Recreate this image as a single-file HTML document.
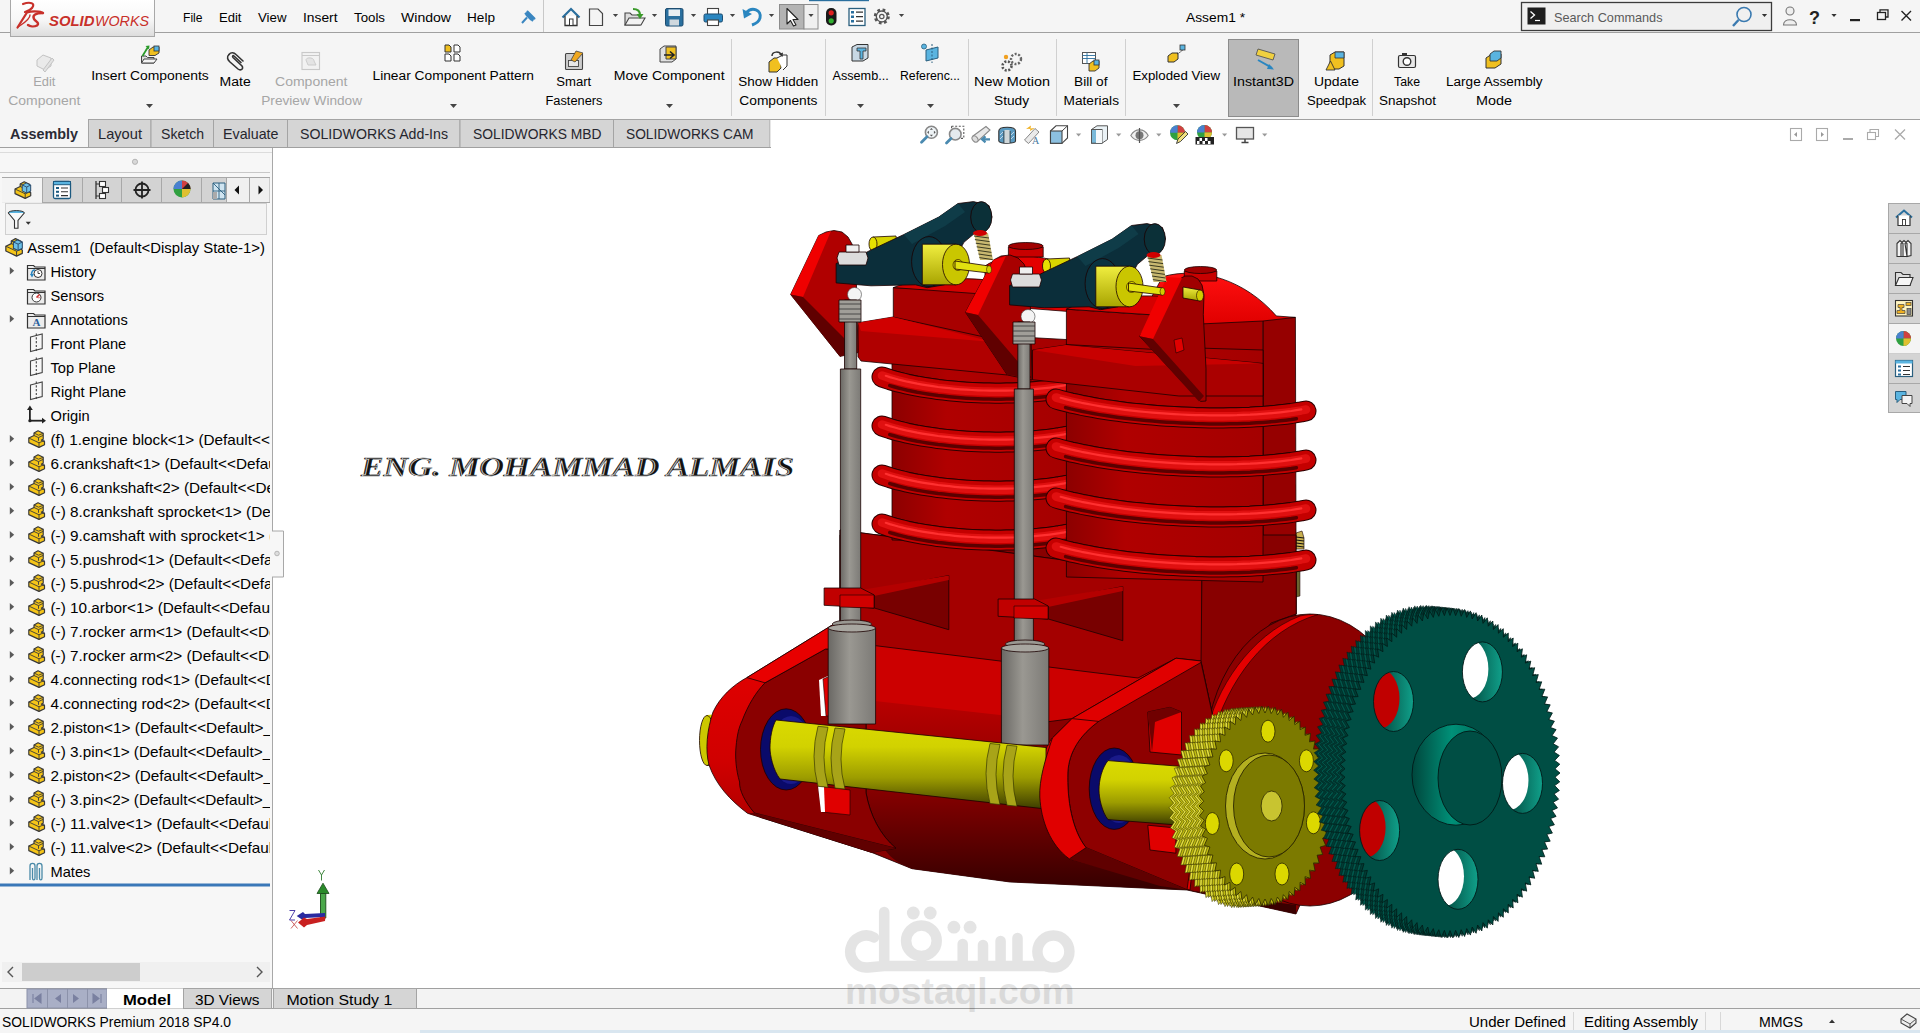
<!DOCTYPE html>
<html><head><meta charset="utf-8">
<style>
*{margin:0;padding:0}
html,body{width:1920px;height:1033px;overflow:hidden;background:#f5f5f5}
svg{display:block;font-family:"Liberation Sans",sans-serif}
</style></head><body>
<svg width="1920" height="1033" viewBox="0 0 1920 1033">
<rect x="0" y="0" width="1920" height="1033" fill="#f5f5f5" />
<rect x="0" y="0" width="1920" height="32" fill="#f5f5f5" />
<line x1="0" y1="32.5" x2="1920" y2="32.5" stroke="#a0a0a0" stroke-width="1" />
<defs><linearGradient id="lg" x1="0" y1="0" x2="0" y2="1"><stop offset="0" stop-color="#ffffff"/><stop offset="0.55" stop-color="#f7f7f7"/><stop offset="1" stop-color="#dcdcdc"/></linearGradient></defs>
<rect x="10.5" y="-1" width="144" height="37.5" fill="url(#lg)" stroke="#a8a8a8" stroke-width="1" />
<line x1="88" y1="119.5" x2="1920" y2="119.5" stroke="#a0a0a0" stroke-width="1" />
<text x="183" y="21.9" font-size="13" style="white-space:pre" textLength="19.5" lengthAdjust="spacingAndGlyphs" >File</text>
<text x="219" y="21.9" font-size="13" style="white-space:pre" textLength="22.5" lengthAdjust="spacingAndGlyphs" >Edit</text>
<text x="258" y="21.9" font-size="13" style="white-space:pre" textLength="28.5" lengthAdjust="spacingAndGlyphs" >View</text>
<text x="303" y="21.9" font-size="13" style="white-space:pre" textLength="34.5" lengthAdjust="spacingAndGlyphs" >Insert</text>
<text x="354" y="21.9" font-size="13" style="white-space:pre" textLength="31.0" lengthAdjust="spacingAndGlyphs" >Tools</text>
<text x="401" y="21.9" font-size="13" style="white-space:pre" textLength="50.0" lengthAdjust="spacingAndGlyphs" >Window</text>
<text x="467" y="21.9" font-size="13" style="white-space:pre" textLength="28.0" lengthAdjust="spacingAndGlyphs" >Help</text>
<text x="1186" y="21.9" font-size="13" style="white-space:pre" textLength="59.0" lengthAdjust="spacingAndGlyphs" >Assem1 *</text>
<line x1="543.5" y1="0" x2="543.5" y2="32" stroke="#c8c8c8" stroke-width="1" />
<rect x="1228.5" y="39.5" width="70" height="77" fill="#b9b9b9" stroke="#8c8c8c" stroke-width="1" />
<text x="1233" y="86.2" font-size="13.7" style="white-space:pre" textLength="61.0" lengthAdjust="spacingAndGlyphs" >Instant3D</text>
<text x="33.25" y="86.2" font-size="13.7" style="white-space:pre" fill="#a6a6a6" textLength="22.2" lengthAdjust="spacingAndGlyphs" >Edit</text>
<text x="8.25" y="105" font-size="13.7" style="white-space:pre" fill="#a6a6a6" textLength="72.2" lengthAdjust="spacingAndGlyphs" >Component</text>
<text x="91.25" y="79.5" font-size="13.7" style="white-space:pre" textLength="117.5" lengthAdjust="spacingAndGlyphs" >Insert Components</text>
<text x="219.5" y="86.2" font-size="13.7" style="white-space:pre" textLength="31.2" lengthAdjust="spacingAndGlyphs" >Mate</text>
<text x="275" y="86.2" font-size="13.7" style="white-space:pre" fill="#a6a6a6" textLength="72.5" lengthAdjust="spacingAndGlyphs" >Component</text>
<text x="261.25" y="105" font-size="13.7" style="white-space:pre" fill="#a6a6a6" textLength="100.8" lengthAdjust="spacingAndGlyphs" >Preview Window</text>
<text x="372.5" y="79.5" font-size="13.7" style="white-space:pre" textLength="161.5" lengthAdjust="spacingAndGlyphs" >Linear Component Pattern</text>
<text x="556.25" y="86.2" font-size="13.7" style="white-space:pre" textLength="35.0" lengthAdjust="spacingAndGlyphs" >Smart</text>
<text x="545.5" y="105" font-size="13.7" style="white-space:pre" textLength="57.0" lengthAdjust="spacingAndGlyphs" >Fasteners</text>
<text x="613.75" y="79.5" font-size="13.7" style="white-space:pre" textLength="110.8" lengthAdjust="spacingAndGlyphs" >Move Component</text>
<text x="738.25" y="86.2" font-size="13.7" style="white-space:pre" textLength="80.0" lengthAdjust="spacingAndGlyphs" >Show Hidden</text>
<text x="739.25" y="105" font-size="13.7" style="white-space:pre" textLength="78.2" lengthAdjust="spacingAndGlyphs" >Components</text>
<text x="832.5" y="79.5" font-size="13.7" style="white-space:pre" textLength="56.2" lengthAdjust="spacingAndGlyphs" >Assemb...</text>
<text x="900" y="79.5" font-size="13.7" style="white-space:pre" textLength="60.0" lengthAdjust="spacingAndGlyphs" >Referenc...</text>
<text x="974" y="86.2" font-size="13.7" style="white-space:pre" textLength="76.0" lengthAdjust="spacingAndGlyphs" >New Motion</text>
<text x="994" y="105" font-size="13.7" style="white-space:pre" textLength="35.0" lengthAdjust="spacingAndGlyphs" >Study</text>
<text x="1074" y="86.2" font-size="13.7" style="white-space:pre" textLength="33.5" lengthAdjust="spacingAndGlyphs" >Bill of</text>
<text x="1063.5" y="105" font-size="13.7" style="white-space:pre" textLength="55.5" lengthAdjust="spacingAndGlyphs" >Materials</text>
<text x="1132.5" y="79.5" font-size="13.7" style="white-space:pre" textLength="87.5" lengthAdjust="spacingAndGlyphs" >Exploded View</text>
<text x="1314" y="86.2" font-size="13.7" style="white-space:pre" textLength="45.0" lengthAdjust="spacingAndGlyphs" >Update</text>
<text x="1307" y="105" font-size="13.7" style="white-space:pre" textLength="59.0" lengthAdjust="spacingAndGlyphs" >Speedpak</text>
<text x="1394" y="86.2" font-size="13.7" style="white-space:pre" textLength="26.0" lengthAdjust="spacingAndGlyphs" >Take</text>
<text x="1379" y="105" font-size="13.7" style="white-space:pre" textLength="57.0" lengthAdjust="spacingAndGlyphs" >Snapshot</text>
<text x="1446" y="86.2" font-size="13.7" style="white-space:pre" textLength="96.5" lengthAdjust="spacingAndGlyphs" >Large Assembly</text>
<text x="1476" y="105" font-size="13.7" style="white-space:pre" textLength="36.0" lengthAdjust="spacingAndGlyphs" >Mode</text>
<line x1="731.5" y1="39" x2="731.5" y2="116" stroke="#d0d0d0" stroke-width="1" />
<line x1="825.5" y1="39" x2="825.5" y2="116" stroke="#d0d0d0" stroke-width="1" />
<line x1="968.5" y1="39" x2="968.5" y2="116" stroke="#d0d0d0" stroke-width="1" />
<line x1="1056.5" y1="39" x2="1056.5" y2="116" stroke="#d0d0d0" stroke-width="1" />
<line x1="1125.5" y1="39" x2="1125.5" y2="116" stroke="#d0d0d0" stroke-width="1" />
<line x1="1372.5" y1="39" x2="1372.5" y2="116" stroke="#d0d0d0" stroke-width="1" />
<path d="M146,104 h7 l-3.5,4 z" fill="#444"/>
<path d="M450,104 h7 l-3.5,4 z" fill="#444"/>
<path d="M666,104 h7 l-3.5,4 z" fill="#444"/>
<path d="M857,104 h7 l-3.5,4 z" fill="#444"/>
<path d="M927,104 h7 l-3.5,4 z" fill="#444"/>
<path d="M1173,104 h7 l-3.5,4 z" fill="#444"/>
<text x="10" y="138.7" font-size="14.2" style="white-space:pre" font-weight="bold" fill="#2b2b35" textLength="68.0" lengthAdjust="spacingAndGlyphs" >Assembly</text>
<rect x="88.5" y="119.5" width="62.5" height="28" fill="#d5d5d5" stroke="#a4a4a4" stroke-width="1" />
<text x="98" y="138.7" font-size="14.2" style="white-space:pre" fill="#26262e" textLength="44.0" lengthAdjust="spacingAndGlyphs" >Layout</text>
<rect x="151" y="119.5" width="62.5" height="28" fill="#d5d5d5" stroke="#a4a4a4" stroke-width="1" />
<text x="161" y="138.7" font-size="14.2" style="white-space:pre" fill="#26262e" textLength="43.0" lengthAdjust="spacingAndGlyphs" >Sketch</text>
<rect x="213.5" y="119.5" width="74.0" height="28" fill="#d5d5d5" stroke="#a4a4a4" stroke-width="1" />
<text x="223" y="138.7" font-size="14.2" style="white-space:pre" fill="#26262e" textLength="55.5" lengthAdjust="spacingAndGlyphs" >Evaluate</text>
<rect x="287.5" y="119.5" width="172.5" height="28" fill="#d5d5d5" stroke="#a4a4a4" stroke-width="1" />
<text x="300" y="138.7" font-size="14.2" style="white-space:pre" fill="#26262e" textLength="148.0" lengthAdjust="spacingAndGlyphs" >SOLIDWORKS Add-Ins</text>
<rect x="460" y="119.5" width="153.5" height="28" fill="#d5d5d5" stroke="#a4a4a4" stroke-width="1" />
<text x="473" y="138.7" font-size="14.2" style="white-space:pre" fill="#26262e" textLength="128.5" lengthAdjust="spacingAndGlyphs" >SOLIDWORKS MBD</text>
<rect x="613.5" y="119.5" width="156.5" height="28" fill="#d5d5d5" stroke="#a4a4a4" stroke-width="1" />
<text x="626" y="138.7" font-size="14.2" style="white-space:pre" fill="#26262e" textLength="127.5" lengthAdjust="spacingAndGlyphs" >SOLIDWORKS CAM</text>
<rect x="770.5" y="120" width="1150" height="28" fill="#ffffff" />
<line x1="0" y1="147.5" x2="771" y2="147.5" stroke="#a0a0a0" stroke-width="1" />
<rect x="0" y="148" width="272" height="840" fill="#f7f7f7" />
<line x1="272.5" y1="148" x2="272.5" y2="988" stroke="#a8a8a8" stroke-width="1" />
<line x1="0" y1="152.5" x2="272" y2="152.5" stroke="#dcdcdc" stroke-width="1" />
<circle cx="135" cy="161.8" r="2.6" fill="#d8d8d8" stroke="#a8a8a8" stroke-width="0.8"/>
<line x1="0" y1="172.5" x2="270" y2="172.5" stroke="#c8c8c8" stroke-width="1" />
<rect x="2" y="177.5" width="268" height="25" fill="#d3d3d3" />
<rect x="2" y="177.5" width="40" height="25" fill="#f4f4f4" />
<line x1="42.5" y1="177.5" x2="42.5" y2="202.5" stroke="#a8a8a8" stroke-width="1" />
<line x1="82.5" y1="177.5" x2="82.5" y2="202.5" stroke="#a8a8a8" stroke-width="1" />
<line x1="121.5" y1="177.5" x2="121.5" y2="202.5" stroke="#a8a8a8" stroke-width="1" />
<line x1="161.5" y1="177.5" x2="161.5" y2="202.5" stroke="#a8a8a8" stroke-width="1" />
<line x1="201.5" y1="177.5" x2="201.5" y2="202.5" stroke="#a8a8a8" stroke-width="1" />
<line x1="226.5" y1="177.5" x2="226.5" y2="202.5" stroke="#a8a8a8" stroke-width="1" />
<line x1="249.5" y1="177.5" x2="249.5" y2="202.5" stroke="#a8a8a8" stroke-width="1" />
<line x1="269.5" y1="177.5" x2="269.5" y2="202.5" stroke="#a8a8a8" stroke-width="1" />
<line x1="2" y1="177.5" x2="270" y2="177.5" stroke="#a8a8a8" stroke-width="1" />
<line x1="42" y1="202.5" x2="270" y2="202.5" stroke="#a8a8a8" stroke-width="1" />
<rect x="227" y="178" width="22" height="24" fill="#f0f0f0" />
<rect x="250" y="178" width="19.5" height="24" fill="#f0f0f0" />
<path d="M239,185.5 v9 l-4.5,-4.5 z" fill="#111"/>
<path d="M258.5,185.5 v9 l4.5,-4.5 z" fill="#111"/>
<rect x="5.5" y="203.5" width="261" height="31" fill="#f3f3f3" stroke="#d0d0d0" stroke-width="1" />
<clipPath id="treeclip"><rect x="0" y="236" width="270" height="650"/></clipPath>
<g clip-path="url(#treeclip)">
<text x="27.3" y="252.8" font-size="14.5" style="white-space:pre" textLength="237.7" lengthAdjust="spacingAndGlyphs" >Assem1  (Default&lt;Display State-1&gt;)</text>
<text x="50.5" y="276.8" font-size="14.5" style="white-space:pre" textLength="45.6" lengthAdjust="spacingAndGlyphs" >History</text>
<path d="M9.8,267.0 v7.4 l4.4,-3.7 z" fill="#5a5a5a"/>
<text x="50.5" y="300.8" font-size="14.5" style="white-space:pre" textLength="53.7" lengthAdjust="spacingAndGlyphs" >Sensors</text>
<text x="50.5" y="324.8" font-size="14.5" style="white-space:pre" textLength="77.3" lengthAdjust="spacingAndGlyphs" >Annotations</text>
<path d="M9.8,315.0 v7.4 l4.4,-3.7 z" fill="#5a5a5a"/>
<text x="50.5" y="348.8" font-size="14.5" style="white-space:pre" textLength="75.7" lengthAdjust="spacingAndGlyphs" >Front Plane</text>
<text x="50.5" y="372.8" font-size="14.5" style="white-space:pre" textLength="65.1" lengthAdjust="spacingAndGlyphs" >Top Plane</text>
<text x="50.5" y="396.8" font-size="14.5" style="white-space:pre" textLength="75.7" lengthAdjust="spacingAndGlyphs" >Right Plane</text>
<text x="50.5" y="420.8" font-size="14.5" style="white-space:pre" textLength="39.1" lengthAdjust="spacingAndGlyphs" >Origin</text>
<text x="50.5" y="444.8" font-size="14.5" style="white-space:pre" textLength="402.2" lengthAdjust="spacingAndGlyphs" >(f) 1.engine block&lt;1&gt; (Default&lt;&lt;Default&gt;_Display State 1&gt;)</text>
<path d="M9.8,435.0 v7.4 l4.4,-3.7 z" fill="#5a5a5a"/>
<text x="50.5" y="468.8" font-size="14.5" style="white-space:pre" textLength="368.2" lengthAdjust="spacingAndGlyphs" >6.crankshaft&lt;1&gt; (Default&lt;&lt;Default&gt;_Display State 1&gt;)</text>
<path d="M9.8,459.0 v7.4 l4.4,-3.7 z" fill="#5a5a5a"/>
<text x="50.5" y="492.8" font-size="14.5" style="white-space:pre" textLength="387.7" lengthAdjust="spacingAndGlyphs" >(-) 6.crankshaft&lt;2&gt; (Default&lt;&lt;Default&gt;_Display State 1&gt;)</text>
<path d="M9.8,483.0 v7.4 l4.4,-3.7 z" fill="#5a5a5a"/>
<text x="50.5" y="516.8" font-size="14.5" style="white-space:pre" textLength="449.8" lengthAdjust="spacingAndGlyphs" >(-) 8.crankshaft sprocket&lt;1&gt; (Default&lt;&lt;Default&gt;_Display State 1&gt;)</text>
<path d="M9.8,506.99999999999994 v7.4 l4.4,-3.7 z" fill="#5a5a5a"/>
<text x="50.5" y="540.8" font-size="14.5" style="white-space:pre" textLength="472.7" lengthAdjust="spacingAndGlyphs" >(-) 9.camshaft with sprocket&lt;1&gt; (Default&lt;&lt;Default&gt;_Display State 1&gt;)</text>
<path d="M9.8,531.0 v7.4 l4.4,-3.7 z" fill="#5a5a5a"/>
<text x="50.5" y="564.8" font-size="14.5" style="white-space:pre" textLength="372.4" lengthAdjust="spacingAndGlyphs" >(-) 5.pushrod&lt;1&gt; (Default&lt;&lt;Default&gt;_Display State 1&gt;)</text>
<path d="M9.8,555.0 v7.4 l4.4,-3.7 z" fill="#5a5a5a"/>
<text x="50.5" y="588.8" font-size="14.5" style="white-space:pre" textLength="372.4" lengthAdjust="spacingAndGlyphs" >(-) 5.pushrod&lt;2&gt; (Default&lt;&lt;Default&gt;_Display State 1&gt;)</text>
<path d="M9.8,579.0 v7.4 l4.4,-3.7 z" fill="#5a5a5a"/>
<text x="50.5" y="612.8" font-size="14.5" style="white-space:pre" textLength="361.4" lengthAdjust="spacingAndGlyphs" >(-) 10.arbor&lt;1&gt; (Default&lt;&lt;Default&gt;_Display State 1&gt;)</text>
<path d="M9.8,603.0 v7.4 l4.4,-3.7 z" fill="#5a5a5a"/>
<text x="50.5" y="636.8" font-size="14.5" style="white-space:pre" textLength="390.3" lengthAdjust="spacingAndGlyphs" >(-) 7.rocker arm&lt;1&gt; (Default&lt;&lt;Default&gt;_Display State 1&gt;)</text>
<path d="M9.8,627.0 v7.4 l4.4,-3.7 z" fill="#5a5a5a"/>
<text x="50.5" y="660.8" font-size="14.5" style="white-space:pre" textLength="390.3" lengthAdjust="spacingAndGlyphs" >(-) 7.rocker arm&lt;2&gt; (Default&lt;&lt;Default&gt;_Display State 1&gt;)</text>
<path d="M9.8,651.0 v7.4 l4.4,-3.7 z" fill="#5a5a5a"/>
<text x="50.5" y="684.8" font-size="14.5" style="white-space:pre" textLength="398.0" lengthAdjust="spacingAndGlyphs" >4.connecting rod&lt;1&gt; (Default&lt;&lt;Default&gt;_Display State 1&gt;)</text>
<path d="M9.8,675.0 v7.4 l4.4,-3.7 z" fill="#5a5a5a"/>
<text x="50.5" y="708.8" font-size="14.5" style="white-space:pre" textLength="398.0" lengthAdjust="spacingAndGlyphs" >4.connecting rod&lt;2&gt; (Default&lt;&lt;Default&gt;_Display State 1&gt;)</text>
<path d="M9.8,699.0 v7.4 l4.4,-3.7 z" fill="#5a5a5a"/>
<text x="50.5" y="732.8" font-size="14.5" style="white-space:pre" textLength="338.4" lengthAdjust="spacingAndGlyphs" >2.piston&lt;1&gt; (Default&lt;&lt;Default&gt;_Display State 1&gt;)</text>
<path d="M9.8,723.0 v7.4 l4.4,-3.7 z" fill="#5a5a5a"/>
<text x="50.5" y="756.8" font-size="14.5" style="white-space:pre" textLength="337.6" lengthAdjust="spacingAndGlyphs" >(-) 3.pin&lt;1&gt; (Default&lt;&lt;Default&gt;_Display State 1&gt;)</text>
<path d="M9.8,747.0 v7.4 l4.4,-3.7 z" fill="#5a5a5a"/>
<text x="50.5" y="780.8" font-size="14.5" style="white-space:pre" textLength="338.4" lengthAdjust="spacingAndGlyphs" >2.piston&lt;2&gt; (Default&lt;&lt;Default&gt;_Display State 1&gt;)</text>
<path d="M9.8,771.0 v7.4 l4.4,-3.7 z" fill="#5a5a5a"/>
<text x="50.5" y="804.8" font-size="14.5" style="white-space:pre" textLength="337.6" lengthAdjust="spacingAndGlyphs" >(-) 3.pin&lt;2&gt; (Default&lt;&lt;Default&gt;_Display State 1&gt;)</text>
<path d="M9.8,795.0 v7.4 l4.4,-3.7 z" fill="#5a5a5a"/>
<text x="50.5" y="828.8" font-size="14.5" style="white-space:pre" textLength="360.2" lengthAdjust="spacingAndGlyphs" >(-) 11.valve&lt;1&gt; (Default&lt;&lt;Default&gt;_Display State 1&gt;)</text>
<path d="M9.8,819.0 v7.4 l4.4,-3.7 z" fill="#5a5a5a"/>
<text x="50.5" y="852.8" font-size="14.5" style="white-space:pre" textLength="360.2" lengthAdjust="spacingAndGlyphs" >(-) 11.valve&lt;2&gt; (Default&lt;&lt;Default&gt;_Display State 1&gt;)</text>
<path d="M9.8,843.0 v7.4 l4.4,-3.7 z" fill="#5a5a5a"/>
<text x="50.5" y="876.8" font-size="14.5" style="white-space:pre" textLength="39.9" lengthAdjust="spacingAndGlyphs" >Mates</text>
<path d="M9.8,867.0 v7.4 l4.4,-3.7 z" fill="#5a5a5a"/>
</g>
<line x1="0" y1="885" x2="270" y2="885" stroke="#3a78b8" stroke-width="3" />
<rect x="2" y="962" width="268" height="20" fill="#f0f0f0" />
<rect x="22" y="963" width="118" height="18" fill="#cdcdcd" />
<path d="M13,967 l-5,5 l5,5" fill="none" stroke="#555" stroke-width="1.4"/>
<path d="M257,967 l5,5 l-5,5" fill="none" stroke="#555" stroke-width="1.4"/>
<rect x="273" y="148" width="1647" height="840" fill="#ffffff" />
<rect x="0" y="988" width="1920" height="22" fill="#f3f3f3" />
<line x1="0" y1="988.5" x2="1920" y2="988.5" stroke="#a0a0a0" stroke-width="1" />
<line x1="0" y1="1008.5" x2="1920" y2="1008.5" stroke="#a0a0a0" stroke-width="1" />
<rect x="27" y="989" width="80" height="19" fill="#a9afc6" stroke="#8c92aa" stroke-width="1" />
<line x1="47.5" y1="989" x2="47.5" y2="1008" stroke="#8c92aa" stroke-width="1" />
<line x1="67.5" y1="989" x2="67.5" y2="1008" stroke="#8c92aa" stroke-width="1" />
<line x1="87.5" y1="989" x2="87.5" y2="1008" stroke="#8c92aa" stroke-width="1" />
<rect x="107" y="988.5" width="76" height="20" fill="#ffffff" />
<text x="123" y="1004.5" font-size="14.5" style="white-space:pre" font-weight="bold" textLength="48.0" lengthAdjust="spacingAndGlyphs" >Model</text>
<rect x="183.5" y="988.5" width="88" height="20" fill="#d5d5d5" stroke="#a4a4a4" stroke-width="1" />
<text x="195" y="1004.5" font-size="14.5" style="white-space:pre" textLength="64.5" lengthAdjust="spacingAndGlyphs" >3D Views</text>
<rect x="273.5" y="988.5" width="143" height="20" fill="#d5d5d5" stroke="#a4a4a4" stroke-width="1" />
<text x="286.4" y="1004.5" font-size="14.5" style="white-space:pre" textLength="105.9" lengthAdjust="spacingAndGlyphs" >Motion Study 1</text>
<rect x="0" y="1009" width="1920" height="24" fill="#f5f5f5" />
<text x="2" y="1026.5" font-size="14.2" style="white-space:pre" textLength="229.0" lengthAdjust="spacingAndGlyphs" >SOLIDWORKS Premium 2018 SP4.0</text>
<text x="1469" y="1026.5" font-size="14.2" style="white-space:pre" textLength="97.0" lengthAdjust="spacingAndGlyphs" >Under Defined</text>
<text x="1584" y="1026.5" font-size="14.2" style="white-space:pre" textLength="114.0" lengthAdjust="spacingAndGlyphs" >Editing Assembly</text>
<text x="1759" y="1026.5" font-size="14.2" style="white-space:pre" textLength="44.0" lengthAdjust="spacingAndGlyphs" >MMGS</text>
<line x1="1573.5" y1="1012" x2="1573.5" y2="1031" stroke="#d8d8d8" stroke-width="1" />
<line x1="1705.5" y1="1012" x2="1705.5" y2="1031" stroke="#d8d8d8" stroke-width="1" />
<line x1="1720.5" y1="1012" x2="1720.5" y2="1031" stroke="#d8d8d8" stroke-width="1" />
<path d="M1829,1023 h6 l-3,-3.5 z" fill="#333"/>
<rect x="420" y="1030" width="1500" height="3" fill="#d9e6f0" />
<defs>
<linearGradient id="gDark" x1="0" y1="0" x2="0" y2="1"><stop offset="0" stop-color="#8a0000"/><stop offset="1" stop-color="#360000"/></linearGradient>
<linearGradient id="gDrum" x1="0" y1="0" x2="0" y2="1"><stop offset="0" stop-color="#b80000"/><stop offset="0.45" stop-color="#8a0000"/><stop offset="1" stop-color="#340000"/></linearGradient>
<linearGradient id="gCylL" x1="0" y1="0" x2="1" y2="0"><stop offset="0" stop-color="#8c0000"/><stop offset="0.3" stop-color="#b00000"/><stop offset="1" stop-color="#a40000"/></linearGradient>
<linearGradient id="gShaft" x1="0" y1="0" x2="0" y2="1"><stop offset="0" stop-color="#dada00"/><stop offset="0.3" stop-color="#d2d200"/><stop offset="0.65" stop-color="#9c9c00"/><stop offset="1" stop-color="#3c3c00"/></linearGradient>
<linearGradient id="gRod" x1="0" y1="0" x2="1" y2="0"><stop offset="0" stop-color="#6a6864"/><stop offset="0.45" stop-color="#9a9892"/><stop offset="1" stop-color="#7c7a76"/></linearGradient>
<linearGradient id="gHole" x1="0" y1="0" x2="1" y2="0"><stop offset="0" stop-color="#003a32"/><stop offset="1" stop-color="#10a08a"/></linearGradient>
<linearGradient id="gHub" x1="0" y1="0" x2="1" y2="0"><stop offset="0" stop-color="#00463c"/><stop offset="0.45" stop-color="#009078"/><stop offset="1" stop-color="#005a4c"/></linearGradient>
<linearGradient id="gDome" x1="0" y1="0" x2="0" y2="1"><stop offset="0" stop-color="#ff1010"/><stop offset="1" stop-color="#e00000"/></linearGradient>
<linearGradient id="gRim" x1="0" y1="0" x2="0" y2="1"><stop offset="0" stop-color="#e80000"/><stop offset="0.6" stop-color="#d00000"/><stop offset="1" stop-color="#a00000"/></linearGradient>
<linearGradient id="gYcyl" x1="0" y1="0" x2="0" y2="1"><stop offset="0" stop-color="#f0ee40"/><stop offset="1" stop-color="#a8a400"/></linearGradient>
</defs>
<polygon points="1296.0,533.0 1302.0,531.0 1304.0,538.0 1304.0,549.0 1296.0,549.0" fill="#c8b050" stroke="#1a0000" stroke-width="0.6" stroke-linejoin="round" />
<line x1="1296" y1="537" x2="1304" y2="538" stroke="#111" stroke-width="1.2"/>
<line x1="1296" y1="540" x2="1304" y2="541" stroke="#111" stroke-width="1.2"/>
<line x1="1296" y1="543" x2="1304" y2="544" stroke="#111" stroke-width="1.2"/>
<line x1="1296" y1="546" x2="1304" y2="547" stroke="#111" stroke-width="1.2"/>
<polygon points="1296.0,570.0 1300.0,570.0 1300.0,596.0 1296.0,597.0" fill="#6a6430" stroke="#1a0000" stroke-width="0.5" stroke-linejoin="round" />
<polygon points="1262.9,318.0 1295.4,317.4 1296.2,614.0 1262.9,614.0" fill="#960000" stroke="#1a0000" stroke-width="0.8" stroke-linejoin="round" />
<polygon points="1200.0,322.0 1262.9,320.0 1262.9,580.0 1200.0,583.0" fill="#a00000" stroke="#1a0000" stroke-width="0.8" stroke-linejoin="round" />
<path d="M1150,300 L1162.6,276.7 C1200,266 1245,280 1276.4,316 L1295.4,317.4 L1262.9,321 L1200,324 Z" fill="url(#gDome)" stroke="#1a0000" stroke-width="0.8" stroke-linejoin="round" />
<polygon points="1184.3,271.0 1216.8,271.0 1216.8,281.0 1184.3,281.0" fill="#c80000" stroke="#1a0000" stroke-width="0.8" stroke-linejoin="round" />
<ellipse cx="1200.5" cy="270" rx="16.2" ry="3.5" fill="#a00000" stroke="#1a0000" stroke-width="0.8" />
<path d="M985,266 C1005,252 1045,252 1075,270 L1075,312 L985,305 Z" fill="#e40000" stroke="#1a0000" stroke-width="0.8" stroke-linejoin="round" />
<polygon points="1008.4,247.0 1043.2,247.0 1043.2,257.0 1008.4,257.0" fill="#c80000" stroke="#1a0000" stroke-width="0.8" stroke-linejoin="round" />
<ellipse cx="1025.8" cy="246" rx="17.4" ry="3.5" fill="#a00000" stroke="#1a0000" stroke-width="0.8" />
<polygon points="730.0,749.4 735.0,722.3 746.0,700.6 760.0,680.0 840.0,624.0 840.0,535.0 1296.0,535.0 1296.0,614.0 1300.0,905.0 1296.0,914.0 1187.0,890.0 1010.0,882.0 912.0,868.7 871.6,852.4 760.0,817.2 748.0,806.3 735.0,776.5" fill="#880000" stroke="#1a0000" stroke-width="0.8" stroke-linejoin="round" />
<polygon points="840.0,530.0 1201.9,578.7 1201.9,661.0 1176.0,658.2 1072.0,718.6 1046.0,722.0 875.6,722.0 860.0,649.0 840.0,640.0" fill="#cc0000" stroke="#1a0000" stroke-width="0.8" stroke-linejoin="round" />
<polygon points="840.0,530.0 1201.9,578.7 1201.9,661.0 1176.0,658.2 1138.0,678.0 862.0,644.0 840.0,640.0" fill="#a40000" stroke="#1a0000" stroke-width="0.8" stroke-linejoin="round" />
<polygon points="1201.9,578.7 1296.2,571.2 1296.2,614.0 1271.0,623.0 1240.0,665.0 1214.0,722.0 1201.0,662.0" fill="#880000" stroke="#1a0000" stroke-width="0.8" stroke-linejoin="round" />
<path d="M866,700 L1046,720 L1040,770 C1038,800 1045,835 1069,859 L1187,890 L1010,882 L912,868.7 C890,860 875,850 866,792 Z" fill="url(#gDrum)" />
<polygon points="1069.0,859.0 1187.0,890.0 1296.0,905.0 1296.0,914.0 1187.0,890.0" fill="#3a0000" />
<polygon points="707.0,715.0 720.0,714.0 720.0,765.0 707.0,766.0" fill="url(#gShaft)" />
<ellipse cx="707" cy="740.5" rx="7.5" ry="25" fill="#ccc800" stroke="#1a0000" stroke-width="0.8" />
<path d="M746.9,677.6 L832.8,624.7 L866,630 L866,792.8 C870,815 880,835 896,848.3 L871.6,852.4 L747.5,813.3 C730,800 716,785 709,765 C705,750 707,730 713,712 C720,697 733,685 746.9,677.6 Z" fill="url(#gRim)" stroke="#1a0000" stroke-width="0.8" stroke-linejoin="round" />
<path d="M765,682.8 L825.5,649 L866,649 L866,792.8 C870,815 880,835 896,848.3 L754.5,813 C745,802 739,790 739.6,782 C736,770 735,757 736,747 C737,735 739,727 742,721 C748,705 756,692 765,682.8 Z" fill="#8a0000" stroke="#1a0000" stroke-width="0.8" stroke-linejoin="round" />
<polygon points="746.9,677.6 832.8,624.7 866.0,630.0 866.0,649.0 825.5,649.0 765.0,682.8" fill="#e80000" stroke="#1a0000" stroke-width="0.8" stroke-linejoin="round" />
<polygon points="747.5,813.3 754.5,813.0 896.0,848.3 871.6,852.4" fill="#600000" />
<ellipse cx="1310" cy="760" rx="105" ry="146" fill="#8c0000" stroke="#1a0000" stroke-width="0.8" />
<path d="M1206,735 C1215,690 1250,635 1300,616 C1305,615 1312,614 1318,614.5 C1265,630 1228,680 1212,738 Z" fill="#e40000" stroke="#1a0000" stroke-width="0.6" stroke-linejoin="round" />
<path d="M1072,718.6 L1176,658.2 L1201,661 L1214,722 C1205,760 1200,800 1190,890 L1069.3,858.9 C1050,840 1042,815 1039.8,797 C1039,770 1045,745 1052.4,738 Z" fill="#e00000" stroke="#1a0000" stroke-width="0.8" stroke-linejoin="round" />
<path d="M1098.7,721.4 L1201,662.4 L1214,722 C1205,760 1200,800 1187,889.7 L1086.1,847.6 C1072,830 1067,800 1067.9,771.9 C1069,752 1080,735 1098.7,721.4 Z" fill="#8e0000" stroke="#1a0000" stroke-width="0.8" stroke-linejoin="round" />
<polygon points="1069.3,858.9 1086.1,847.6 1187.0,889.7 1160.0,886.0" fill="#600000" />
<polygon points="1147.8,712.0 1170.0,707.3 1181.5,712.0 1181.5,755.0 1150.0,752.0" fill="#e00000" stroke="#1a0000" stroke-width="0.8" stroke-linejoin="round" />
<polygon points="1147.8,712.0 1170.0,707.3 1181.5,712.0 1155.0,722.0 1152.0,752.0" fill="#700000" />
<polygon points="1147.8,825.2 1175.9,828.0 1175.9,853.2 1150.0,850.0" fill="#e00000" stroke="#1a0000" stroke-width="0.8" stroke-linejoin="round" />
<polygon points="819.0,680.0 828.0,676.0 832.0,716.0 821.0,716.0" fill="#ffffff" />
<polygon points="823.0,679.0 830.0,676.0 832.0,716.0 826.0,716.0" fill="#e00000" stroke="#1a0000" stroke-width="0.6" stroke-linejoin="round" />
<polygon points="818.0,786.0 850.0,790.0 850.0,815.0 822.0,812.0" fill="#e00000" stroke="#1a0000" stroke-width="0.6" stroke-linejoin="round" />
<polygon points="818.0,786.0 824.0,787.0 825.0,812.0 821.0,812.0" fill="#ffffff" />
<polygon points="892.0,330.0 1075.0,340.0 1075.0,545.0 892.0,540.0" fill="url(#gCylL)" stroke="#1a0000" stroke-width="0.8" stroke-linejoin="round" />
<polygon points="893.3,287.6 1010.0,292.0 1010.0,341.0 893.3,336.3" fill="#a80000" stroke="#1a0000" stroke-width="0.8" stroke-linejoin="round" />
<path d="M893.3,287.6 C920,276 990,275 1030,288 L1010,296 Z" fill="#d40000" stroke="#1a0000" stroke-width="0.8" stroke-linejoin="round" />
<polygon points="858.0,322.8 893.0,317.0 1007.0,342.0 1007.3,375.0 861.0,361.0 858.0,356.7" fill="#b00000" stroke="#1a0000" stroke-width="0.8" stroke-linejoin="round" />
<polygon points="858.0,322.8 893.0,317.0 993.0,342.0 861.0,331.0" fill="#d00000" />
<path d="M893.9,376.8 L898.3,378.0 L902.8,379.1 L907.4,380.2 L912.2,381.2 L917.2,382.2 L922.3,383.1 L927.4,383.9 L932.7,384.7 L938.1,385.5 L943.6,386.1 L949.2,386.7 L954.8,387.3 L960.5,387.8 L966.2,388.2 L971.9,388.5 L977.7,388.8 L983.5,389.0 L989.3,389.1 L995.1,389.2 L1000.8,389.2 L1006.5,389.1 L1012.2,389.0 L1017.8,388.8 L1023.4,388.5 L1028.9,388.1 L1034.3,387.7 L1039.6,387.2 L1044.7,386.7 L1049.8,386.1 L1054.8,385.4 L1059.6,384.7 L1064.2,383.9 L1068.7,383.0 L1073.1,382.1" fill="none" stroke="#2a0000" stroke-width="13" stroke-linecap="round" stroke-linejoin="round"/>
<path d="M893.9,376.8 L898.3,378.0 L902.8,379.1 L907.4,380.2 L912.2,381.2 L917.2,382.2 L922.3,383.1 L927.4,383.9 L932.7,384.7 L938.1,385.5 L943.6,386.1 L949.2,386.7 L954.8,387.3 L960.5,387.8 L966.2,388.2 L971.9,388.5 L977.7,388.8 L983.5,389.0 L989.3,389.1 L995.1,389.2 L1000.8,389.2 L1006.5,389.1 L1012.2,389.0 L1017.8,388.8 L1023.4,388.5 L1028.9,388.1 L1034.3,387.7 L1039.6,387.2 L1044.7,386.7 L1049.8,386.1 L1054.8,385.4 L1059.6,384.7 L1064.2,383.9 L1068.7,383.0 L1073.1,382.1" fill="none" stroke="#b00000" stroke-width="11" stroke-linecap="round" stroke-linejoin="round"/>
<path d="M882.0,377.0 L885.8,378.3 L889.8,379.6 L893.9,380.8 L898.3,382.0 L902.8,383.1 L907.4,384.2 L912.2,385.2 L917.2,386.2 L922.3,387.1 L927.4,387.9 L932.7,388.7 L938.1,389.5 L943.6,390.1 L949.2,390.7 L954.8,391.3 L960.5,391.8 L966.2,392.2 L971.9,392.5 L977.7,392.8 L983.5,393.0 L989.3,393.1 L995.1,393.2 L1000.8,393.2 L1006.5,393.1 L1012.2,393.0 L1017.8,392.8 L1023.4,392.5 L1028.9,392.1 L1034.3,391.7 L1039.6,391.2 L1044.7,390.7 L1049.8,390.1 L1054.8,389.4 L1059.6,388.7 L1064.2,387.9 L1068.7,387.0 L1073.1,386.1 L1077.2,385.1 L1081.2,384.1 L1085.0,383.0" fill="none" stroke="#2a0000" stroke-width="21" stroke-linecap="round" stroke-linejoin="round"/>
<path d="M882.0,377.0 L885.8,378.3 L889.8,379.6 L893.9,380.8 L898.3,382.0 L902.8,383.1 L907.4,384.2 L912.2,385.2 L917.2,386.2 L922.3,387.1 L927.4,387.9 L932.7,388.7 L938.1,389.5 L943.6,390.1 L949.2,390.7 L954.8,391.3 L960.5,391.8 L966.2,392.2 L971.9,392.5 L977.7,392.8 L983.5,393.0 L989.3,393.1 L995.1,393.2 L1000.8,393.2 L1006.5,393.1 L1012.2,393.0 L1017.8,392.8 L1023.4,392.5 L1028.9,392.1 L1034.3,391.7 L1039.6,391.2 L1044.7,390.7 L1049.8,390.1 L1054.8,389.4 L1059.6,388.7 L1064.2,387.9 L1068.7,387.0 L1073.1,386.1 L1077.2,385.1 L1081.2,384.1 L1085.0,383.0" fill="none" stroke="#c40000" stroke-width="19" stroke-linecap="round" stroke-linejoin="round"/>
<path d="M882.0,375.5 L885.8,376.8 L889.8,378.1 L893.9,379.3 L898.3,380.5 L902.8,381.6 L907.4,382.7 L912.2,383.7 L917.2,384.7 L922.3,385.6 L927.4,386.4 L932.7,387.2 L938.1,388.0 L943.6,388.6 L949.2,389.2 L954.8,389.8 L960.5,390.3 L966.2,390.7 L971.9,391.0 L977.7,391.3 L983.5,391.5 L989.3,391.6 L995.1,391.7 L1000.8,391.7 L1006.5,391.6 L1012.2,391.5 L1017.8,391.3 L1023.4,391.0 L1028.9,390.6 L1034.3,390.2 L1039.6,389.7 L1044.7,389.2 L1049.8,388.6 L1054.8,387.9 L1059.6,387.2 L1064.2,386.4 L1068.7,385.5 L1073.1,384.6 L1077.2,383.6 L1081.2,382.6 L1085.0,381.5" fill="none" stroke="#e01010" stroke-width="8.6" stroke-linecap="round" stroke-linejoin="round"/>
<path d="M885.8,375.8 L889.8,377.1 L893.9,378.3 L898.3,379.5 L902.8,380.6 L907.4,381.7 L912.2,382.7 L917.2,383.7 L922.3,384.6 L927.4,385.4 L932.7,386.2 L938.1,387.0 L943.6,387.6 L949.2,388.2 L954.8,388.8 L960.5,389.3 L966.2,389.7 L971.9,390.0 L977.7,390.3 L983.5,390.5 L989.3,390.6 L995.1,390.7 L1000.8,390.7 L1006.5,390.6 L1012.2,390.5 L1017.8,390.3 L1023.4,390.0 L1028.9,389.6 L1034.3,389.2 L1039.6,388.7 L1044.7,388.2 L1049.8,387.6 L1054.8,386.9 L1059.6,386.2 L1064.2,385.4 L1068.7,384.5 L1073.1,383.6 L1077.2,382.6 L1081.2,381.6" fill="none" stroke="#ff3030" stroke-width="2.2" stroke-linecap="round" stroke-linejoin="round"/>
<path d="M889.8,385.6 L893.9,386.8 L898.3,388.0 L902.8,389.1 L907.4,390.2 L912.2,391.2 L917.2,392.2 L922.3,393.1 L927.4,393.9 L932.7,394.7 L938.1,395.5 L943.6,396.1 L949.2,396.7 L954.8,397.3 L960.5,397.8 L966.2,398.2 L971.9,398.5 L977.7,398.8 L983.5,399.0 L989.3,399.1 L995.1,399.2 L1000.8,399.2 L1006.5,399.1 L1012.2,399.0 L1017.8,398.8 L1023.4,398.5 L1028.9,398.1 L1034.3,397.7 L1039.6,397.2 L1044.7,396.7 L1049.8,396.1 L1054.8,395.4 L1059.6,394.7 L1064.2,393.9 L1068.7,393.0 L1073.1,392.1 L1077.2,391.1" fill="none" stroke="#5a0000" stroke-width="3.5" stroke-linecap="round" stroke-linejoin="round"/>
<path d="M893.9,425.8 L898.3,427.0 L902.8,428.1 L907.4,429.2 L912.2,430.2 L917.2,431.2 L922.3,432.1 L927.4,432.9 L932.7,433.7 L938.1,434.5 L943.6,435.1 L949.2,435.7 L954.8,436.3 L960.5,436.8 L966.2,437.2 L971.9,437.5 L977.7,437.8 L983.5,438.0 L989.3,438.1 L995.1,438.2 L1000.8,438.2 L1006.5,438.1 L1012.2,438.0 L1017.8,437.8 L1023.4,437.5 L1028.9,437.1 L1034.3,436.7 L1039.6,436.2 L1044.7,435.7 L1049.8,435.1 L1054.8,434.4 L1059.6,433.7 L1064.2,432.9 L1068.7,432.0 L1073.1,431.1" fill="none" stroke="#2a0000" stroke-width="13" stroke-linecap="round" stroke-linejoin="round"/>
<path d="M893.9,425.8 L898.3,427.0 L902.8,428.1 L907.4,429.2 L912.2,430.2 L917.2,431.2 L922.3,432.1 L927.4,432.9 L932.7,433.7 L938.1,434.5 L943.6,435.1 L949.2,435.7 L954.8,436.3 L960.5,436.8 L966.2,437.2 L971.9,437.5 L977.7,437.8 L983.5,438.0 L989.3,438.1 L995.1,438.2 L1000.8,438.2 L1006.5,438.1 L1012.2,438.0 L1017.8,437.8 L1023.4,437.5 L1028.9,437.1 L1034.3,436.7 L1039.6,436.2 L1044.7,435.7 L1049.8,435.1 L1054.8,434.4 L1059.6,433.7 L1064.2,432.9 L1068.7,432.0 L1073.1,431.1" fill="none" stroke="#b00000" stroke-width="11" stroke-linecap="round" stroke-linejoin="round"/>
<path d="M882.0,426.0 L885.8,427.3 L889.8,428.6 L893.9,429.8 L898.3,431.0 L902.8,432.1 L907.4,433.2 L912.2,434.2 L917.2,435.2 L922.3,436.1 L927.4,436.9 L932.7,437.7 L938.1,438.5 L943.6,439.1 L949.2,439.7 L954.8,440.3 L960.5,440.8 L966.2,441.2 L971.9,441.5 L977.7,441.8 L983.5,442.0 L989.3,442.1 L995.1,442.2 L1000.8,442.2 L1006.5,442.1 L1012.2,442.0 L1017.8,441.8 L1023.4,441.5 L1028.9,441.1 L1034.3,440.7 L1039.6,440.2 L1044.7,439.7 L1049.8,439.1 L1054.8,438.4 L1059.6,437.7 L1064.2,436.9 L1068.7,436.0 L1073.1,435.1 L1077.2,434.1 L1081.2,433.1 L1085.0,432.0" fill="none" stroke="#2a0000" stroke-width="21" stroke-linecap="round" stroke-linejoin="round"/>
<path d="M882.0,426.0 L885.8,427.3 L889.8,428.6 L893.9,429.8 L898.3,431.0 L902.8,432.1 L907.4,433.2 L912.2,434.2 L917.2,435.2 L922.3,436.1 L927.4,436.9 L932.7,437.7 L938.1,438.5 L943.6,439.1 L949.2,439.7 L954.8,440.3 L960.5,440.8 L966.2,441.2 L971.9,441.5 L977.7,441.8 L983.5,442.0 L989.3,442.1 L995.1,442.2 L1000.8,442.2 L1006.5,442.1 L1012.2,442.0 L1017.8,441.8 L1023.4,441.5 L1028.9,441.1 L1034.3,440.7 L1039.6,440.2 L1044.7,439.7 L1049.8,439.1 L1054.8,438.4 L1059.6,437.7 L1064.2,436.9 L1068.7,436.0 L1073.1,435.1 L1077.2,434.1 L1081.2,433.1 L1085.0,432.0" fill="none" stroke="#c40000" stroke-width="19" stroke-linecap="round" stroke-linejoin="round"/>
<path d="M882.0,424.5 L885.8,425.8 L889.8,427.1 L893.9,428.3 L898.3,429.5 L902.8,430.6 L907.4,431.7 L912.2,432.7 L917.2,433.7 L922.3,434.6 L927.4,435.4 L932.7,436.2 L938.1,437.0 L943.6,437.6 L949.2,438.2 L954.8,438.8 L960.5,439.3 L966.2,439.7 L971.9,440.0 L977.7,440.3 L983.5,440.5 L989.3,440.6 L995.1,440.7 L1000.8,440.7 L1006.5,440.6 L1012.2,440.5 L1017.8,440.3 L1023.4,440.0 L1028.9,439.6 L1034.3,439.2 L1039.6,438.7 L1044.7,438.2 L1049.8,437.6 L1054.8,436.9 L1059.6,436.2 L1064.2,435.4 L1068.7,434.5 L1073.1,433.6 L1077.2,432.6 L1081.2,431.6 L1085.0,430.5" fill="none" stroke="#e01010" stroke-width="8.6" stroke-linecap="round" stroke-linejoin="round"/>
<path d="M885.8,424.8 L889.8,426.1 L893.9,427.3 L898.3,428.5 L902.8,429.6 L907.4,430.7 L912.2,431.7 L917.2,432.7 L922.3,433.6 L927.4,434.4 L932.7,435.2 L938.1,436.0 L943.6,436.6 L949.2,437.2 L954.8,437.8 L960.5,438.3 L966.2,438.7 L971.9,439.0 L977.7,439.3 L983.5,439.5 L989.3,439.6 L995.1,439.7 L1000.8,439.7 L1006.5,439.6 L1012.2,439.5 L1017.8,439.3 L1023.4,439.0 L1028.9,438.6 L1034.3,438.2 L1039.6,437.7 L1044.7,437.2 L1049.8,436.6 L1054.8,435.9 L1059.6,435.2 L1064.2,434.4 L1068.7,433.5 L1073.1,432.6 L1077.2,431.6 L1081.2,430.6" fill="none" stroke="#ff3030" stroke-width="2.2" stroke-linecap="round" stroke-linejoin="round"/>
<path d="M889.8,434.6 L893.9,435.8 L898.3,437.0 L902.8,438.1 L907.4,439.2 L912.2,440.2 L917.2,441.2 L922.3,442.1 L927.4,442.9 L932.7,443.7 L938.1,444.5 L943.6,445.1 L949.2,445.7 L954.8,446.3 L960.5,446.8 L966.2,447.2 L971.9,447.5 L977.7,447.8 L983.5,448.0 L989.3,448.1 L995.1,448.2 L1000.8,448.2 L1006.5,448.1 L1012.2,448.0 L1017.8,447.8 L1023.4,447.5 L1028.9,447.1 L1034.3,446.7 L1039.6,446.2 L1044.7,445.7 L1049.8,445.1 L1054.8,444.4 L1059.6,443.7 L1064.2,442.9 L1068.7,442.0 L1073.1,441.1 L1077.2,440.1" fill="none" stroke="#5a0000" stroke-width="3.5" stroke-linecap="round" stroke-linejoin="round"/>
<path d="M893.9,474.8 L898.3,476.0 L902.8,477.1 L907.4,478.2 L912.2,479.2 L917.2,480.2 L922.3,481.1 L927.4,481.9 L932.7,482.7 L938.1,483.5 L943.6,484.1 L949.2,484.7 L954.8,485.3 L960.5,485.8 L966.2,486.2 L971.9,486.5 L977.7,486.8 L983.5,487.0 L989.3,487.1 L995.1,487.2 L1000.8,487.2 L1006.5,487.1 L1012.2,487.0 L1017.8,486.8 L1023.4,486.5 L1028.9,486.1 L1034.3,485.7 L1039.6,485.2 L1044.7,484.7 L1049.8,484.1 L1054.8,483.4 L1059.6,482.7 L1064.2,481.9 L1068.7,481.0 L1073.1,480.1" fill="none" stroke="#2a0000" stroke-width="13" stroke-linecap="round" stroke-linejoin="round"/>
<path d="M893.9,474.8 L898.3,476.0 L902.8,477.1 L907.4,478.2 L912.2,479.2 L917.2,480.2 L922.3,481.1 L927.4,481.9 L932.7,482.7 L938.1,483.5 L943.6,484.1 L949.2,484.7 L954.8,485.3 L960.5,485.8 L966.2,486.2 L971.9,486.5 L977.7,486.8 L983.5,487.0 L989.3,487.1 L995.1,487.2 L1000.8,487.2 L1006.5,487.1 L1012.2,487.0 L1017.8,486.8 L1023.4,486.5 L1028.9,486.1 L1034.3,485.7 L1039.6,485.2 L1044.7,484.7 L1049.8,484.1 L1054.8,483.4 L1059.6,482.7 L1064.2,481.9 L1068.7,481.0 L1073.1,480.1" fill="none" stroke="#b00000" stroke-width="11" stroke-linecap="round" stroke-linejoin="round"/>
<path d="M882.0,475.0 L885.8,476.3 L889.8,477.6 L893.9,478.8 L898.3,480.0 L902.8,481.1 L907.4,482.2 L912.2,483.2 L917.2,484.2 L922.3,485.1 L927.4,485.9 L932.7,486.7 L938.1,487.5 L943.6,488.1 L949.2,488.7 L954.8,489.3 L960.5,489.8 L966.2,490.2 L971.9,490.5 L977.7,490.8 L983.5,491.0 L989.3,491.1 L995.1,491.2 L1000.8,491.2 L1006.5,491.1 L1012.2,491.0 L1017.8,490.8 L1023.4,490.5 L1028.9,490.1 L1034.3,489.7 L1039.6,489.2 L1044.7,488.7 L1049.8,488.1 L1054.8,487.4 L1059.6,486.7 L1064.2,485.9 L1068.7,485.0 L1073.1,484.1 L1077.2,483.1 L1081.2,482.1 L1085.0,481.0" fill="none" stroke="#2a0000" stroke-width="21" stroke-linecap="round" stroke-linejoin="round"/>
<path d="M882.0,475.0 L885.8,476.3 L889.8,477.6 L893.9,478.8 L898.3,480.0 L902.8,481.1 L907.4,482.2 L912.2,483.2 L917.2,484.2 L922.3,485.1 L927.4,485.9 L932.7,486.7 L938.1,487.5 L943.6,488.1 L949.2,488.7 L954.8,489.3 L960.5,489.8 L966.2,490.2 L971.9,490.5 L977.7,490.8 L983.5,491.0 L989.3,491.1 L995.1,491.2 L1000.8,491.2 L1006.5,491.1 L1012.2,491.0 L1017.8,490.8 L1023.4,490.5 L1028.9,490.1 L1034.3,489.7 L1039.6,489.2 L1044.7,488.7 L1049.8,488.1 L1054.8,487.4 L1059.6,486.7 L1064.2,485.9 L1068.7,485.0 L1073.1,484.1 L1077.2,483.1 L1081.2,482.1 L1085.0,481.0" fill="none" stroke="#c40000" stroke-width="19" stroke-linecap="round" stroke-linejoin="round"/>
<path d="M882.0,473.5 L885.8,474.8 L889.8,476.1 L893.9,477.3 L898.3,478.5 L902.8,479.6 L907.4,480.7 L912.2,481.7 L917.2,482.7 L922.3,483.6 L927.4,484.4 L932.7,485.2 L938.1,486.0 L943.6,486.6 L949.2,487.2 L954.8,487.8 L960.5,488.3 L966.2,488.7 L971.9,489.0 L977.7,489.3 L983.5,489.5 L989.3,489.6 L995.1,489.7 L1000.8,489.7 L1006.5,489.6 L1012.2,489.5 L1017.8,489.3 L1023.4,489.0 L1028.9,488.6 L1034.3,488.2 L1039.6,487.7 L1044.7,487.2 L1049.8,486.6 L1054.8,485.9 L1059.6,485.2 L1064.2,484.4 L1068.7,483.5 L1073.1,482.6 L1077.2,481.6 L1081.2,480.6 L1085.0,479.5" fill="none" stroke="#e01010" stroke-width="8.6" stroke-linecap="round" stroke-linejoin="round"/>
<path d="M885.8,473.8 L889.8,475.1 L893.9,476.3 L898.3,477.5 L902.8,478.6 L907.4,479.7 L912.2,480.7 L917.2,481.7 L922.3,482.6 L927.4,483.4 L932.7,484.2 L938.1,485.0 L943.6,485.6 L949.2,486.2 L954.8,486.8 L960.5,487.3 L966.2,487.7 L971.9,488.0 L977.7,488.3 L983.5,488.5 L989.3,488.6 L995.1,488.7 L1000.8,488.7 L1006.5,488.6 L1012.2,488.5 L1017.8,488.3 L1023.4,488.0 L1028.9,487.6 L1034.3,487.2 L1039.6,486.7 L1044.7,486.2 L1049.8,485.6 L1054.8,484.9 L1059.6,484.2 L1064.2,483.4 L1068.7,482.5 L1073.1,481.6 L1077.2,480.6 L1081.2,479.6" fill="none" stroke="#ff3030" stroke-width="2.2" stroke-linecap="round" stroke-linejoin="round"/>
<path d="M889.8,483.6 L893.9,484.8 L898.3,486.0 L902.8,487.1 L907.4,488.2 L912.2,489.2 L917.2,490.2 L922.3,491.1 L927.4,491.9 L932.7,492.7 L938.1,493.5 L943.6,494.1 L949.2,494.7 L954.8,495.3 L960.5,495.8 L966.2,496.2 L971.9,496.5 L977.7,496.8 L983.5,497.0 L989.3,497.1 L995.1,497.2 L1000.8,497.2 L1006.5,497.1 L1012.2,497.0 L1017.8,496.8 L1023.4,496.5 L1028.9,496.1 L1034.3,495.7 L1039.6,495.2 L1044.7,494.7 L1049.8,494.1 L1054.8,493.4 L1059.6,492.7 L1064.2,491.9 L1068.7,491.0 L1073.1,490.1 L1077.2,489.1" fill="none" stroke="#5a0000" stroke-width="3.5" stroke-linecap="round" stroke-linejoin="round"/>
<path d="M893.9,523.8 L898.3,525.0 L902.8,526.1 L907.4,527.2 L912.2,528.2 L917.2,529.2 L922.3,530.1 L927.4,530.9 L932.7,531.7 L938.1,532.5 L943.6,533.1 L949.2,533.7 L954.8,534.3 L960.5,534.8 L966.2,535.2 L971.9,535.5 L977.7,535.8 L983.5,536.0 L989.3,536.1 L995.1,536.2 L1000.8,536.2 L1006.5,536.1 L1012.2,536.0 L1017.8,535.8 L1023.4,535.5 L1028.9,535.1 L1034.3,534.7 L1039.6,534.2 L1044.7,533.7 L1049.8,533.1 L1054.8,532.4 L1059.6,531.7 L1064.2,530.9 L1068.7,530.0 L1073.1,529.1" fill="none" stroke="#2a0000" stroke-width="13" stroke-linecap="round" stroke-linejoin="round"/>
<path d="M893.9,523.8 L898.3,525.0 L902.8,526.1 L907.4,527.2 L912.2,528.2 L917.2,529.2 L922.3,530.1 L927.4,530.9 L932.7,531.7 L938.1,532.5 L943.6,533.1 L949.2,533.7 L954.8,534.3 L960.5,534.8 L966.2,535.2 L971.9,535.5 L977.7,535.8 L983.5,536.0 L989.3,536.1 L995.1,536.2 L1000.8,536.2 L1006.5,536.1 L1012.2,536.0 L1017.8,535.8 L1023.4,535.5 L1028.9,535.1 L1034.3,534.7 L1039.6,534.2 L1044.7,533.7 L1049.8,533.1 L1054.8,532.4 L1059.6,531.7 L1064.2,530.9 L1068.7,530.0 L1073.1,529.1" fill="none" stroke="#b00000" stroke-width="11" stroke-linecap="round" stroke-linejoin="round"/>
<path d="M882.0,524.0 L885.8,525.3 L889.8,526.6 L893.9,527.8 L898.3,529.0 L902.8,530.1 L907.4,531.2 L912.2,532.2 L917.2,533.2 L922.3,534.1 L927.4,534.9 L932.7,535.7 L938.1,536.5 L943.6,537.1 L949.2,537.7 L954.8,538.3 L960.5,538.8 L966.2,539.2 L971.9,539.5 L977.7,539.8 L983.5,540.0 L989.3,540.1 L995.1,540.2 L1000.8,540.2 L1006.5,540.1 L1012.2,540.0 L1017.8,539.8 L1023.4,539.5 L1028.9,539.1 L1034.3,538.7 L1039.6,538.2 L1044.7,537.7 L1049.8,537.1 L1054.8,536.4 L1059.6,535.7 L1064.2,534.9 L1068.7,534.0 L1073.1,533.1 L1077.2,532.1 L1081.2,531.1 L1085.0,530.0" fill="none" stroke="#2a0000" stroke-width="21" stroke-linecap="round" stroke-linejoin="round"/>
<path d="M882.0,524.0 L885.8,525.3 L889.8,526.6 L893.9,527.8 L898.3,529.0 L902.8,530.1 L907.4,531.2 L912.2,532.2 L917.2,533.2 L922.3,534.1 L927.4,534.9 L932.7,535.7 L938.1,536.5 L943.6,537.1 L949.2,537.7 L954.8,538.3 L960.5,538.8 L966.2,539.2 L971.9,539.5 L977.7,539.8 L983.5,540.0 L989.3,540.1 L995.1,540.2 L1000.8,540.2 L1006.5,540.1 L1012.2,540.0 L1017.8,539.8 L1023.4,539.5 L1028.9,539.1 L1034.3,538.7 L1039.6,538.2 L1044.7,537.7 L1049.8,537.1 L1054.8,536.4 L1059.6,535.7 L1064.2,534.9 L1068.7,534.0 L1073.1,533.1 L1077.2,532.1 L1081.2,531.1 L1085.0,530.0" fill="none" stroke="#c40000" stroke-width="19" stroke-linecap="round" stroke-linejoin="round"/>
<path d="M882.0,522.5 L885.8,523.8 L889.8,525.1 L893.9,526.3 L898.3,527.5 L902.8,528.6 L907.4,529.7 L912.2,530.7 L917.2,531.7 L922.3,532.6 L927.4,533.4 L932.7,534.2 L938.1,535.0 L943.6,535.6 L949.2,536.2 L954.8,536.8 L960.5,537.3 L966.2,537.7 L971.9,538.0 L977.7,538.3 L983.5,538.5 L989.3,538.6 L995.1,538.7 L1000.8,538.7 L1006.5,538.6 L1012.2,538.5 L1017.8,538.3 L1023.4,538.0 L1028.9,537.6 L1034.3,537.2 L1039.6,536.7 L1044.7,536.2 L1049.8,535.6 L1054.8,534.9 L1059.6,534.2 L1064.2,533.4 L1068.7,532.5 L1073.1,531.6 L1077.2,530.6 L1081.2,529.6 L1085.0,528.5" fill="none" stroke="#e01010" stroke-width="8.6" stroke-linecap="round" stroke-linejoin="round"/>
<path d="M885.8,522.8 L889.8,524.1 L893.9,525.3 L898.3,526.5 L902.8,527.6 L907.4,528.7 L912.2,529.7 L917.2,530.7 L922.3,531.6 L927.4,532.4 L932.7,533.2 L938.1,534.0 L943.6,534.6 L949.2,535.2 L954.8,535.8 L960.5,536.3 L966.2,536.7 L971.9,537.0 L977.7,537.3 L983.5,537.5 L989.3,537.6 L995.1,537.7 L1000.8,537.7 L1006.5,537.6 L1012.2,537.5 L1017.8,537.3 L1023.4,537.0 L1028.9,536.6 L1034.3,536.2 L1039.6,535.7 L1044.7,535.2 L1049.8,534.6 L1054.8,533.9 L1059.6,533.2 L1064.2,532.4 L1068.7,531.5 L1073.1,530.6 L1077.2,529.6 L1081.2,528.6" fill="none" stroke="#ff3030" stroke-width="2.2" stroke-linecap="round" stroke-linejoin="round"/>
<path d="M889.8,532.6 L893.9,533.8 L898.3,535.0 L902.8,536.1 L907.4,537.2 L912.2,538.2 L917.2,539.2 L922.3,540.1 L927.4,540.9 L932.7,541.7 L938.1,542.5 L943.6,543.1 L949.2,543.7 L954.8,544.3 L960.5,544.8 L966.2,545.2 L971.9,545.5 L977.7,545.8 L983.5,546.0 L989.3,546.1 L995.1,546.2 L1000.8,546.2 L1006.5,546.1 L1012.2,546.0 L1017.8,545.8 L1023.4,545.5 L1028.9,545.1 L1034.3,544.7 L1039.6,544.2 L1044.7,543.7 L1049.8,543.1 L1054.8,542.4 L1059.6,541.7 L1064.2,540.9 L1068.7,540.0 L1073.1,539.1 L1077.2,538.1" fill="none" stroke="#5a0000" stroke-width="3.5" stroke-linecap="round" stroke-linejoin="round"/>
<polygon points="1066.4,344.0 1263.0,350.0 1263.0,582.0 1066.4,577.0" fill="url(#gCylL)" stroke="#1a0000" stroke-width="0.8" stroke-linejoin="round" />
<polygon points="1066.4,309.2 1200.0,318.0 1200.0,352.0 1066.4,344.5" fill="#a80000" stroke="#1a0000" stroke-width="0.8" stroke-linejoin="round" />
<path d="M1066.4,309.2 C1090,296 1150,292 1200,300 L1200,318 Z" fill="#d40000" stroke="#1a0000" stroke-width="0.8" stroke-linejoin="round" />
<polygon points="1032.5,350.0 1066.0,345.0 1263.0,363.4 1263.0,396.0 1178.9,396.0 1032.5,379.7" fill="#aa0000" stroke="#1a0000" stroke-width="0.8" stroke-linejoin="round" />
<polygon points="1032.5,350.0 1066.0,345.0 1263.0,363.4 1135.5,366.0" fill="#c80000" />
<path d="M1070.7,398.9 L1076.1,400.1 L1081.6,401.3 L1087.3,402.4 L1093.2,403.5 L1099.3,404.6 L1105.6,405.6 L1112.0,406.5 L1118.5,407.4 L1125.1,408.3 L1131.9,409.1 L1138.7,409.8 L1145.6,410.5 L1152.6,411.1 L1159.7,411.7 L1166.8,412.2 L1173.9,412.6 L1181.0,413.0 L1188.1,413.3 L1195.2,413.6 L1202.3,413.7 L1209.4,413.9 L1216.4,413.9 L1223.3,413.9 L1230.1,413.8 L1236.9,413.7 L1243.5,413.4 L1250.0,413.2 L1256.4,412.8 L1262.7,412.4 L1268.8,411.9 L1274.7,411.4 L1280.4,410.8 L1285.9,410.2 L1291.3,409.5" fill="none" stroke="#2a0000" stroke-width="13" stroke-linecap="round" stroke-linejoin="round"/>
<path d="M1070.7,398.9 L1076.1,400.1 L1081.6,401.3 L1087.3,402.4 L1093.2,403.5 L1099.3,404.6 L1105.6,405.6 L1112.0,406.5 L1118.5,407.4 L1125.1,408.3 L1131.9,409.1 L1138.7,409.8 L1145.6,410.5 L1152.6,411.1 L1159.7,411.7 L1166.8,412.2 L1173.9,412.6 L1181.0,413.0 L1188.1,413.3 L1195.2,413.6 L1202.3,413.7 L1209.4,413.9 L1216.4,413.9 L1223.3,413.9 L1230.1,413.8 L1236.9,413.7 L1243.5,413.4 L1250.0,413.2 L1256.4,412.8 L1262.7,412.4 L1268.8,411.9 L1274.7,411.4 L1280.4,410.8 L1285.9,410.2 L1291.3,409.5" fill="none" stroke="#b00000" stroke-width="11" stroke-linecap="round" stroke-linejoin="round"/>
<path d="M1056.0,399.0 L1060.7,400.3 L1065.6,401.6 L1070.7,402.9 L1076.1,404.1 L1081.6,405.3 L1087.3,406.4 L1093.2,407.5 L1099.3,408.6 L1105.6,409.6 L1112.0,410.5 L1118.5,411.4 L1125.1,412.3 L1131.9,413.1 L1138.7,413.8 L1145.6,414.5 L1152.6,415.1 L1159.7,415.7 L1166.8,416.2 L1173.9,416.6 L1181.0,417.0 L1188.1,417.3 L1195.2,417.6 L1202.3,417.7 L1209.4,417.9 L1216.4,417.9 L1223.3,417.9 L1230.1,417.8 L1236.9,417.7 L1243.5,417.4 L1250.0,417.2 L1256.4,416.8 L1262.7,416.4 L1268.8,415.9 L1274.7,415.4 L1280.4,414.8 L1285.9,414.2 L1291.3,413.5 L1296.4,412.7 L1301.3,411.9 L1306.0,411.0" fill="none" stroke="#2a0000" stroke-width="21" stroke-linecap="round" stroke-linejoin="round"/>
<path d="M1056.0,399.0 L1060.7,400.3 L1065.6,401.6 L1070.7,402.9 L1076.1,404.1 L1081.6,405.3 L1087.3,406.4 L1093.2,407.5 L1099.3,408.6 L1105.6,409.6 L1112.0,410.5 L1118.5,411.4 L1125.1,412.3 L1131.9,413.1 L1138.7,413.8 L1145.6,414.5 L1152.6,415.1 L1159.7,415.7 L1166.8,416.2 L1173.9,416.6 L1181.0,417.0 L1188.1,417.3 L1195.2,417.6 L1202.3,417.7 L1209.4,417.9 L1216.4,417.9 L1223.3,417.9 L1230.1,417.8 L1236.9,417.7 L1243.5,417.4 L1250.0,417.2 L1256.4,416.8 L1262.7,416.4 L1268.8,415.9 L1274.7,415.4 L1280.4,414.8 L1285.9,414.2 L1291.3,413.5 L1296.4,412.7 L1301.3,411.9 L1306.0,411.0" fill="none" stroke="#c40000" stroke-width="19" stroke-linecap="round" stroke-linejoin="round"/>
<path d="M1056.0,397.5 L1060.7,398.8 L1065.6,400.1 L1070.7,401.4 L1076.1,402.6 L1081.6,403.8 L1087.3,404.9 L1093.2,406.0 L1099.3,407.1 L1105.6,408.1 L1112.0,409.0 L1118.5,409.9 L1125.1,410.8 L1131.9,411.6 L1138.7,412.3 L1145.6,413.0 L1152.6,413.6 L1159.7,414.2 L1166.8,414.7 L1173.9,415.1 L1181.0,415.5 L1188.1,415.8 L1195.2,416.1 L1202.3,416.2 L1209.4,416.4 L1216.4,416.4 L1223.3,416.4 L1230.1,416.3 L1236.9,416.2 L1243.5,415.9 L1250.0,415.7 L1256.4,415.3 L1262.7,414.9 L1268.8,414.4 L1274.7,413.9 L1280.4,413.3 L1285.9,412.7 L1291.3,412.0 L1296.4,411.2 L1301.3,410.4 L1306.0,409.5" fill="none" stroke="#e01010" stroke-width="8.6" stroke-linecap="round" stroke-linejoin="round"/>
<path d="M1060.7,397.8 L1065.6,399.1 L1070.7,400.4 L1076.1,401.6 L1081.6,402.8 L1087.3,403.9 L1093.2,405.0 L1099.3,406.1 L1105.6,407.1 L1112.0,408.0 L1118.5,408.9 L1125.1,409.8 L1131.9,410.6 L1138.7,411.3 L1145.6,412.0 L1152.6,412.6 L1159.7,413.2 L1166.8,413.7 L1173.9,414.1 L1181.0,414.5 L1188.1,414.8 L1195.2,415.1 L1202.3,415.2 L1209.4,415.4 L1216.4,415.4 L1223.3,415.4 L1230.1,415.3 L1236.9,415.2 L1243.5,414.9 L1250.0,414.7 L1256.4,414.3 L1262.7,413.9 L1268.8,413.4 L1274.7,412.9 L1280.4,412.3 L1285.9,411.7 L1291.3,411.0 L1296.4,410.2 L1301.3,409.4" fill="none" stroke="#ff3030" stroke-width="2.2" stroke-linecap="round" stroke-linejoin="round"/>
<path d="M1065.6,407.6 L1070.7,408.9 L1076.1,410.1 L1081.6,411.3 L1087.3,412.4 L1093.2,413.5 L1099.3,414.6 L1105.6,415.6 L1112.0,416.5 L1118.5,417.4 L1125.1,418.3 L1131.9,419.1 L1138.7,419.8 L1145.6,420.5 L1152.6,421.1 L1159.7,421.7 L1166.8,422.2 L1173.9,422.6 L1181.0,423.0 L1188.1,423.3 L1195.2,423.6 L1202.3,423.7 L1209.4,423.9 L1216.4,423.9 L1223.3,423.9 L1230.1,423.8 L1236.9,423.7 L1243.5,423.4 L1250.0,423.2 L1256.4,422.8 L1262.7,422.4 L1268.8,421.9 L1274.7,421.4 L1280.4,420.8 L1285.9,420.2 L1291.3,419.5 L1296.4,418.7" fill="none" stroke="#5a0000" stroke-width="3.5" stroke-linecap="round" stroke-linejoin="round"/>
<path d="M1070.7,447.9 L1076.1,449.1 L1081.6,450.3 L1087.3,451.4 L1093.2,452.5 L1099.3,453.6 L1105.6,454.6 L1112.0,455.5 L1118.5,456.4 L1125.1,457.3 L1131.9,458.1 L1138.7,458.8 L1145.6,459.5 L1152.6,460.1 L1159.7,460.7 L1166.8,461.2 L1173.9,461.6 L1181.0,462.0 L1188.1,462.3 L1195.2,462.6 L1202.3,462.7 L1209.4,462.9 L1216.4,462.9 L1223.3,462.9 L1230.1,462.8 L1236.9,462.7 L1243.5,462.4 L1250.0,462.2 L1256.4,461.8 L1262.7,461.4 L1268.8,460.9 L1274.7,460.4 L1280.4,459.8 L1285.9,459.2 L1291.3,458.5" fill="none" stroke="#2a0000" stroke-width="13" stroke-linecap="round" stroke-linejoin="round"/>
<path d="M1070.7,447.9 L1076.1,449.1 L1081.6,450.3 L1087.3,451.4 L1093.2,452.5 L1099.3,453.6 L1105.6,454.6 L1112.0,455.5 L1118.5,456.4 L1125.1,457.3 L1131.9,458.1 L1138.7,458.8 L1145.6,459.5 L1152.6,460.1 L1159.7,460.7 L1166.8,461.2 L1173.9,461.6 L1181.0,462.0 L1188.1,462.3 L1195.2,462.6 L1202.3,462.7 L1209.4,462.9 L1216.4,462.9 L1223.3,462.9 L1230.1,462.8 L1236.9,462.7 L1243.5,462.4 L1250.0,462.2 L1256.4,461.8 L1262.7,461.4 L1268.8,460.9 L1274.7,460.4 L1280.4,459.8 L1285.9,459.2 L1291.3,458.5" fill="none" stroke="#b00000" stroke-width="11" stroke-linecap="round" stroke-linejoin="round"/>
<path d="M1056.0,448.0 L1060.7,449.3 L1065.6,450.6 L1070.7,451.9 L1076.1,453.1 L1081.6,454.3 L1087.3,455.4 L1093.2,456.5 L1099.3,457.6 L1105.6,458.6 L1112.0,459.5 L1118.5,460.4 L1125.1,461.3 L1131.9,462.1 L1138.7,462.8 L1145.6,463.5 L1152.6,464.1 L1159.7,464.7 L1166.8,465.2 L1173.9,465.6 L1181.0,466.0 L1188.1,466.3 L1195.2,466.6 L1202.3,466.7 L1209.4,466.9 L1216.4,466.9 L1223.3,466.9 L1230.1,466.8 L1236.9,466.7 L1243.5,466.4 L1250.0,466.2 L1256.4,465.8 L1262.7,465.4 L1268.8,464.9 L1274.7,464.4 L1280.4,463.8 L1285.9,463.2 L1291.3,462.5 L1296.4,461.7 L1301.3,460.9 L1306.0,460.0" fill="none" stroke="#2a0000" stroke-width="21" stroke-linecap="round" stroke-linejoin="round"/>
<path d="M1056.0,448.0 L1060.7,449.3 L1065.6,450.6 L1070.7,451.9 L1076.1,453.1 L1081.6,454.3 L1087.3,455.4 L1093.2,456.5 L1099.3,457.6 L1105.6,458.6 L1112.0,459.5 L1118.5,460.4 L1125.1,461.3 L1131.9,462.1 L1138.7,462.8 L1145.6,463.5 L1152.6,464.1 L1159.7,464.7 L1166.8,465.2 L1173.9,465.6 L1181.0,466.0 L1188.1,466.3 L1195.2,466.6 L1202.3,466.7 L1209.4,466.9 L1216.4,466.9 L1223.3,466.9 L1230.1,466.8 L1236.9,466.7 L1243.5,466.4 L1250.0,466.2 L1256.4,465.8 L1262.7,465.4 L1268.8,464.9 L1274.7,464.4 L1280.4,463.8 L1285.9,463.2 L1291.3,462.5 L1296.4,461.7 L1301.3,460.9 L1306.0,460.0" fill="none" stroke="#c40000" stroke-width="19" stroke-linecap="round" stroke-linejoin="round"/>
<path d="M1056.0,446.5 L1060.7,447.8 L1065.6,449.1 L1070.7,450.4 L1076.1,451.6 L1081.6,452.8 L1087.3,453.9 L1093.2,455.0 L1099.3,456.1 L1105.6,457.1 L1112.0,458.0 L1118.5,458.9 L1125.1,459.8 L1131.9,460.6 L1138.7,461.3 L1145.6,462.0 L1152.6,462.6 L1159.7,463.2 L1166.8,463.7 L1173.9,464.1 L1181.0,464.5 L1188.1,464.8 L1195.2,465.1 L1202.3,465.2 L1209.4,465.4 L1216.4,465.4 L1223.3,465.4 L1230.1,465.3 L1236.9,465.2 L1243.5,464.9 L1250.0,464.7 L1256.4,464.3 L1262.7,463.9 L1268.8,463.4 L1274.7,462.9 L1280.4,462.3 L1285.9,461.7 L1291.3,461.0 L1296.4,460.2 L1301.3,459.4 L1306.0,458.5" fill="none" stroke="#e01010" stroke-width="8.6" stroke-linecap="round" stroke-linejoin="round"/>
<path d="M1060.7,446.8 L1065.6,448.1 L1070.7,449.4 L1076.1,450.6 L1081.6,451.8 L1087.3,452.9 L1093.2,454.0 L1099.3,455.1 L1105.6,456.1 L1112.0,457.0 L1118.5,457.9 L1125.1,458.8 L1131.9,459.6 L1138.7,460.3 L1145.6,461.0 L1152.6,461.6 L1159.7,462.2 L1166.8,462.7 L1173.9,463.1 L1181.0,463.5 L1188.1,463.8 L1195.2,464.1 L1202.3,464.2 L1209.4,464.4 L1216.4,464.4 L1223.3,464.4 L1230.1,464.3 L1236.9,464.2 L1243.5,463.9 L1250.0,463.7 L1256.4,463.3 L1262.7,462.9 L1268.8,462.4 L1274.7,461.9 L1280.4,461.3 L1285.9,460.7 L1291.3,460.0 L1296.4,459.2 L1301.3,458.4" fill="none" stroke="#ff3030" stroke-width="2.2" stroke-linecap="round" stroke-linejoin="round"/>
<path d="M1065.6,456.6 L1070.7,457.9 L1076.1,459.1 L1081.6,460.3 L1087.3,461.4 L1093.2,462.5 L1099.3,463.6 L1105.6,464.6 L1112.0,465.5 L1118.5,466.4 L1125.1,467.3 L1131.9,468.1 L1138.7,468.8 L1145.6,469.5 L1152.6,470.1 L1159.7,470.7 L1166.8,471.2 L1173.9,471.6 L1181.0,472.0 L1188.1,472.3 L1195.2,472.6 L1202.3,472.7 L1209.4,472.9 L1216.4,472.9 L1223.3,472.9 L1230.1,472.8 L1236.9,472.7 L1243.5,472.4 L1250.0,472.2 L1256.4,471.8 L1262.7,471.4 L1268.8,470.9 L1274.7,470.4 L1280.4,469.8 L1285.9,469.2 L1291.3,468.5 L1296.4,467.7" fill="none" stroke="#5a0000" stroke-width="3.5" stroke-linecap="round" stroke-linejoin="round"/>
<path d="M1070.7,497.9 L1076.1,499.1 L1081.6,500.3 L1087.3,501.4 L1093.2,502.5 L1099.3,503.6 L1105.6,504.6 L1112.0,505.5 L1118.5,506.4 L1125.1,507.3 L1131.9,508.1 L1138.7,508.8 L1145.6,509.5 L1152.6,510.1 L1159.7,510.7 L1166.8,511.2 L1173.9,511.6 L1181.0,512.0 L1188.1,512.3 L1195.2,512.6 L1202.3,512.7 L1209.4,512.9 L1216.4,512.9 L1223.3,512.9 L1230.1,512.8 L1236.9,512.7 L1243.5,512.4 L1250.0,512.2 L1256.4,511.8 L1262.7,511.4 L1268.8,510.9 L1274.7,510.4 L1280.4,509.8 L1285.9,509.2 L1291.3,508.5" fill="none" stroke="#2a0000" stroke-width="13" stroke-linecap="round" stroke-linejoin="round"/>
<path d="M1070.7,497.9 L1076.1,499.1 L1081.6,500.3 L1087.3,501.4 L1093.2,502.5 L1099.3,503.6 L1105.6,504.6 L1112.0,505.5 L1118.5,506.4 L1125.1,507.3 L1131.9,508.1 L1138.7,508.8 L1145.6,509.5 L1152.6,510.1 L1159.7,510.7 L1166.8,511.2 L1173.9,511.6 L1181.0,512.0 L1188.1,512.3 L1195.2,512.6 L1202.3,512.7 L1209.4,512.9 L1216.4,512.9 L1223.3,512.9 L1230.1,512.8 L1236.9,512.7 L1243.5,512.4 L1250.0,512.2 L1256.4,511.8 L1262.7,511.4 L1268.8,510.9 L1274.7,510.4 L1280.4,509.8 L1285.9,509.2 L1291.3,508.5" fill="none" stroke="#b00000" stroke-width="11" stroke-linecap="round" stroke-linejoin="round"/>
<path d="M1056.0,498.0 L1060.7,499.3 L1065.6,500.6 L1070.7,501.9 L1076.1,503.1 L1081.6,504.3 L1087.3,505.4 L1093.2,506.5 L1099.3,507.6 L1105.6,508.6 L1112.0,509.5 L1118.5,510.4 L1125.1,511.3 L1131.9,512.1 L1138.7,512.8 L1145.6,513.5 L1152.6,514.1 L1159.7,514.7 L1166.8,515.2 L1173.9,515.6 L1181.0,516.0 L1188.1,516.3 L1195.2,516.6 L1202.3,516.7 L1209.4,516.9 L1216.4,516.9 L1223.3,516.9 L1230.1,516.8 L1236.9,516.7 L1243.5,516.4 L1250.0,516.2 L1256.4,515.8 L1262.7,515.4 L1268.8,514.9 L1274.7,514.4 L1280.4,513.8 L1285.9,513.2 L1291.3,512.5 L1296.4,511.7 L1301.3,510.9 L1306.0,510.0" fill="none" stroke="#2a0000" stroke-width="21" stroke-linecap="round" stroke-linejoin="round"/>
<path d="M1056.0,498.0 L1060.7,499.3 L1065.6,500.6 L1070.7,501.9 L1076.1,503.1 L1081.6,504.3 L1087.3,505.4 L1093.2,506.5 L1099.3,507.6 L1105.6,508.6 L1112.0,509.5 L1118.5,510.4 L1125.1,511.3 L1131.9,512.1 L1138.7,512.8 L1145.6,513.5 L1152.6,514.1 L1159.7,514.7 L1166.8,515.2 L1173.9,515.6 L1181.0,516.0 L1188.1,516.3 L1195.2,516.6 L1202.3,516.7 L1209.4,516.9 L1216.4,516.9 L1223.3,516.9 L1230.1,516.8 L1236.9,516.7 L1243.5,516.4 L1250.0,516.2 L1256.4,515.8 L1262.7,515.4 L1268.8,514.9 L1274.7,514.4 L1280.4,513.8 L1285.9,513.2 L1291.3,512.5 L1296.4,511.7 L1301.3,510.9 L1306.0,510.0" fill="none" stroke="#c40000" stroke-width="19" stroke-linecap="round" stroke-linejoin="round"/>
<path d="M1056.0,496.5 L1060.7,497.8 L1065.6,499.1 L1070.7,500.4 L1076.1,501.6 L1081.6,502.8 L1087.3,503.9 L1093.2,505.0 L1099.3,506.1 L1105.6,507.1 L1112.0,508.0 L1118.5,508.9 L1125.1,509.8 L1131.9,510.6 L1138.7,511.3 L1145.6,512.0 L1152.6,512.6 L1159.7,513.2 L1166.8,513.7 L1173.9,514.1 L1181.0,514.5 L1188.1,514.8 L1195.2,515.1 L1202.3,515.2 L1209.4,515.4 L1216.4,515.4 L1223.3,515.4 L1230.1,515.3 L1236.9,515.2 L1243.5,514.9 L1250.0,514.7 L1256.4,514.3 L1262.7,513.9 L1268.8,513.4 L1274.7,512.9 L1280.4,512.3 L1285.9,511.7 L1291.3,511.0 L1296.4,510.2 L1301.3,509.4 L1306.0,508.5" fill="none" stroke="#e01010" stroke-width="8.6" stroke-linecap="round" stroke-linejoin="round"/>
<path d="M1060.7,496.8 L1065.6,498.1 L1070.7,499.4 L1076.1,500.6 L1081.6,501.8 L1087.3,502.9 L1093.2,504.0 L1099.3,505.1 L1105.6,506.1 L1112.0,507.0 L1118.5,507.9 L1125.1,508.8 L1131.9,509.6 L1138.7,510.3 L1145.6,511.0 L1152.6,511.6 L1159.7,512.2 L1166.8,512.7 L1173.9,513.1 L1181.0,513.5 L1188.1,513.8 L1195.2,514.1 L1202.3,514.2 L1209.4,514.4 L1216.4,514.4 L1223.3,514.4 L1230.1,514.3 L1236.9,514.2 L1243.5,513.9 L1250.0,513.7 L1256.4,513.3 L1262.7,512.9 L1268.8,512.4 L1274.7,511.9 L1280.4,511.3 L1285.9,510.7 L1291.3,510.0 L1296.4,509.2 L1301.3,508.4" fill="none" stroke="#ff3030" stroke-width="2.2" stroke-linecap="round" stroke-linejoin="round"/>
<path d="M1065.6,506.6 L1070.7,507.9 L1076.1,509.1 L1081.6,510.3 L1087.3,511.4 L1093.2,512.5 L1099.3,513.6 L1105.6,514.6 L1112.0,515.5 L1118.5,516.4 L1125.1,517.3 L1131.9,518.1 L1138.7,518.8 L1145.6,519.5 L1152.6,520.1 L1159.7,520.7 L1166.8,521.2 L1173.9,521.6 L1181.0,522.0 L1188.1,522.3 L1195.2,522.6 L1202.3,522.7 L1209.4,522.9 L1216.4,522.9 L1223.3,522.9 L1230.1,522.8 L1236.9,522.7 L1243.5,522.4 L1250.0,522.2 L1256.4,521.8 L1262.7,521.4 L1268.8,520.9 L1274.7,520.4 L1280.4,519.8 L1285.9,519.2 L1291.3,518.5 L1296.4,517.7" fill="none" stroke="#5a0000" stroke-width="3.5" stroke-linecap="round" stroke-linejoin="round"/>
<path d="M1070.7,547.9 L1076.1,549.1 L1081.6,550.3 L1087.3,551.4 L1093.2,552.5 L1099.3,553.6 L1105.6,554.6 L1112.0,555.5 L1118.5,556.4 L1125.1,557.3 L1131.9,558.1 L1138.7,558.8 L1145.6,559.5 L1152.6,560.1 L1159.7,560.7 L1166.8,561.2 L1173.9,561.6 L1181.0,562.0 L1188.1,562.3 L1195.2,562.6 L1202.3,562.7 L1209.4,562.9 L1216.4,562.9 L1223.3,562.9 L1230.1,562.8 L1236.9,562.7 L1243.5,562.4 L1250.0,562.2 L1256.4,561.8 L1262.7,561.4 L1268.8,560.9 L1274.7,560.4 L1280.4,559.8 L1285.9,559.2 L1291.3,558.5" fill="none" stroke="#2a0000" stroke-width="13" stroke-linecap="round" stroke-linejoin="round"/>
<path d="M1070.7,547.9 L1076.1,549.1 L1081.6,550.3 L1087.3,551.4 L1093.2,552.5 L1099.3,553.6 L1105.6,554.6 L1112.0,555.5 L1118.5,556.4 L1125.1,557.3 L1131.9,558.1 L1138.7,558.8 L1145.6,559.5 L1152.6,560.1 L1159.7,560.7 L1166.8,561.2 L1173.9,561.6 L1181.0,562.0 L1188.1,562.3 L1195.2,562.6 L1202.3,562.7 L1209.4,562.9 L1216.4,562.9 L1223.3,562.9 L1230.1,562.8 L1236.9,562.7 L1243.5,562.4 L1250.0,562.2 L1256.4,561.8 L1262.7,561.4 L1268.8,560.9 L1274.7,560.4 L1280.4,559.8 L1285.9,559.2 L1291.3,558.5" fill="none" stroke="#b00000" stroke-width="11" stroke-linecap="round" stroke-linejoin="round"/>
<path d="M1056.0,548.0 L1060.7,549.3 L1065.6,550.6 L1070.7,551.9 L1076.1,553.1 L1081.6,554.3 L1087.3,555.4 L1093.2,556.5 L1099.3,557.6 L1105.6,558.6 L1112.0,559.5 L1118.5,560.4 L1125.1,561.3 L1131.9,562.1 L1138.7,562.8 L1145.6,563.5 L1152.6,564.1 L1159.7,564.7 L1166.8,565.2 L1173.9,565.6 L1181.0,566.0 L1188.1,566.3 L1195.2,566.6 L1202.3,566.7 L1209.4,566.9 L1216.4,566.9 L1223.3,566.9 L1230.1,566.8 L1236.9,566.7 L1243.5,566.4 L1250.0,566.2 L1256.4,565.8 L1262.7,565.4 L1268.8,564.9 L1274.7,564.4 L1280.4,563.8 L1285.9,563.2 L1291.3,562.5 L1296.4,561.7 L1301.3,560.9 L1306.0,560.0" fill="none" stroke="#2a0000" stroke-width="21" stroke-linecap="round" stroke-linejoin="round"/>
<path d="M1056.0,548.0 L1060.7,549.3 L1065.6,550.6 L1070.7,551.9 L1076.1,553.1 L1081.6,554.3 L1087.3,555.4 L1093.2,556.5 L1099.3,557.6 L1105.6,558.6 L1112.0,559.5 L1118.5,560.4 L1125.1,561.3 L1131.9,562.1 L1138.7,562.8 L1145.6,563.5 L1152.6,564.1 L1159.7,564.7 L1166.8,565.2 L1173.9,565.6 L1181.0,566.0 L1188.1,566.3 L1195.2,566.6 L1202.3,566.7 L1209.4,566.9 L1216.4,566.9 L1223.3,566.9 L1230.1,566.8 L1236.9,566.7 L1243.5,566.4 L1250.0,566.2 L1256.4,565.8 L1262.7,565.4 L1268.8,564.9 L1274.7,564.4 L1280.4,563.8 L1285.9,563.2 L1291.3,562.5 L1296.4,561.7 L1301.3,560.9 L1306.0,560.0" fill="none" stroke="#c40000" stroke-width="19" stroke-linecap="round" stroke-linejoin="round"/>
<path d="M1056.0,546.5 L1060.7,547.8 L1065.6,549.1 L1070.7,550.4 L1076.1,551.6 L1081.6,552.8 L1087.3,553.9 L1093.2,555.0 L1099.3,556.1 L1105.6,557.1 L1112.0,558.0 L1118.5,558.9 L1125.1,559.8 L1131.9,560.6 L1138.7,561.3 L1145.6,562.0 L1152.6,562.6 L1159.7,563.2 L1166.8,563.7 L1173.9,564.1 L1181.0,564.5 L1188.1,564.8 L1195.2,565.1 L1202.3,565.2 L1209.4,565.4 L1216.4,565.4 L1223.3,565.4 L1230.1,565.3 L1236.9,565.2 L1243.5,564.9 L1250.0,564.7 L1256.4,564.3 L1262.7,563.9 L1268.8,563.4 L1274.7,562.9 L1280.4,562.3 L1285.9,561.7 L1291.3,561.0 L1296.4,560.2 L1301.3,559.4 L1306.0,558.5" fill="none" stroke="#e01010" stroke-width="8.6" stroke-linecap="round" stroke-linejoin="round"/>
<path d="M1060.7,546.8 L1065.6,548.1 L1070.7,549.4 L1076.1,550.6 L1081.6,551.8 L1087.3,552.9 L1093.2,554.0 L1099.3,555.1 L1105.6,556.1 L1112.0,557.0 L1118.5,557.9 L1125.1,558.8 L1131.9,559.6 L1138.7,560.3 L1145.6,561.0 L1152.6,561.6 L1159.7,562.2 L1166.8,562.7 L1173.9,563.1 L1181.0,563.5 L1188.1,563.8 L1195.2,564.1 L1202.3,564.2 L1209.4,564.4 L1216.4,564.4 L1223.3,564.4 L1230.1,564.3 L1236.9,564.2 L1243.5,563.9 L1250.0,563.7 L1256.4,563.3 L1262.7,562.9 L1268.8,562.4 L1274.7,561.9 L1280.4,561.3 L1285.9,560.7 L1291.3,560.0 L1296.4,559.2 L1301.3,558.4" fill="none" stroke="#ff3030" stroke-width="2.2" stroke-linecap="round" stroke-linejoin="round"/>
<path d="M1065.6,556.6 L1070.7,557.9 L1076.1,559.1 L1081.6,560.3 L1087.3,561.4 L1093.2,562.5 L1099.3,563.6 L1105.6,564.6 L1112.0,565.5 L1118.5,566.4 L1125.1,567.3 L1131.9,568.1 L1138.7,568.8 L1145.6,569.5 L1152.6,570.1 L1159.7,570.7 L1166.8,571.2 L1173.9,571.6 L1181.0,572.0 L1188.1,572.3 L1195.2,572.6 L1202.3,572.7 L1209.4,572.9 L1216.4,572.9 L1223.3,572.9 L1230.1,572.8 L1236.9,572.7 L1243.5,572.4 L1250.0,572.2 L1256.4,571.8 L1262.7,571.4 L1268.8,570.9 L1274.7,570.4 L1280.4,569.8 L1285.9,569.2 L1291.3,568.5 L1296.4,567.7" fill="none" stroke="#5a0000" stroke-width="3.5" stroke-linecap="round" stroke-linejoin="round"/>
<polygon points="1139.6,336.3 1178.9,279.4 1185.0,276.0 1192.0,276.0 1198.0,279.0 1202.0,285.0 1204.0,295.0 1203.3,314.7 1206.0,368.9 1206.0,401.0 1200.5,401.4" fill="#a00000" stroke="#1a0000" stroke-width="0.8" stroke-linejoin="round" />
<polygon points="1139.6,336.3 1167.0,277.0 1182.0,278.0 1153.0,339.0" fill="#f00000" />
<polygon points="1139.6,336.3 1153.0,339.0 1204.0,396.0 1199.0,401.4" fill="#600000" />
<polygon points="1174.0,340.0 1182.0,338.0 1184.0,350.0 1176.0,353.0" fill="#e00000" stroke="#1a0000" stroke-width="0.6" stroke-linejoin="round" />
<polygon points="1183.0,287.0 1200.0,290.0 1200.0,301.0 1183.0,298.0" fill="url(#gYcyl)" stroke="#1a0000" stroke-width="0.8" stroke-linejoin="round" />
<ellipse cx="1200" cy="295.5" rx="3.5" ry="5.5" fill="#d0cc00" stroke="#1a0000" stroke-width="0.6" />
<polygon points="965.5,312.3 993.4,260.0 1001.0,256.0 1010.0,255.0 1018.0,258.0 1024.0,264.0 1028.0,274.0 1030.0,290.0 1032.0,380.0 1007.3,375.0" fill="#a80000" stroke="#1a0000" stroke-width="0.8" stroke-linejoin="round" />
<polygon points="965.5,312.3 993.4,260.0 1006.0,256.0 978.0,315.0" fill="#f00000" />
<polygon points="965.5,312.3 978.0,315.0 1032.0,378.0 1007.3,375.0" fill="#600000" />
<polygon points="790.6,294.5 818.7,235.5 826.0,232.0 834.0,230.5 842.0,232.0 848.0,237.0 852.0,244.0 855.0,253.0 856.0,266.0 858.0,352.6 840.0,356.4" fill="#b00000" stroke="#1a0000" stroke-width="0.8" stroke-linejoin="round" />
<polygon points="790.6,294.5 818.7,235.5 831.0,231.0 803.0,297.0" fill="#f00000" />
<polygon points="790.6,294.5 803.0,297.0 856.0,350.0 840.0,356.4" fill="#600000" />
<polygon points="873.0,237.0 896.0,236.0 898.0,250.0 873.0,251.0" fill="#d8d400" stroke="#1a0000" stroke-width="0.8" stroke-linejoin="round" />
<ellipse cx="873" cy="244" rx="4" ry="7" fill="#e6e200" stroke="#1a0000" stroke-width="0.8" />
<polygon points="836.1,263.5 836.1,282.9 871.0,285.8 915.5,284.8 927.1,287.7 944.5,284.8 948.4,271.3 963.9,242.3 975.5,232.6 985.2,228.7 991.9,217.1 989.0,205.5 973.5,201.6 958.0,203.5 938.7,217.1 903.9,234.5 871.0,250.0 863.2,253.9" fill="#0b2e3a" stroke="#1a0000" stroke-width="0.8" stroke-linejoin="round" />
<polygon points="903.9,234.5 938.7,217.1 958.0,203.5 965.0,212.0 945.0,226.0 912.0,244.0" fill="#0f3c48" />
<ellipse cx="981.3" cy="217.1" rx="10.6" ry="15.5" fill="#0b3038" stroke="#1a0000" stroke-width="0.8" />
<ellipse cx="929" cy="261.6" rx="17.4" ry="25" fill="#0a3340" stroke="#1a0000" stroke-width="0.8" />
<polygon points="922.3,244.2 956.0,244.2 956.0,284.8 922.3,284.8" fill="url(#gYcyl)" stroke="#1a0000" stroke-width="0.8" stroke-linejoin="round" />
<ellipse cx="956" cy="264.5" rx="13.5" ry="20.3" fill="#cac600" stroke="#1a0000" stroke-width="0.8" />
<ellipse cx="958" cy="265" rx="5" ry="5.5" fill="#e0dc00" stroke="#1a0000" stroke-width="0.6" />
<polygon points="955.0,261.0 989.0,266.0 989.0,273.0 955.0,269.0" fill="#e2e010" stroke="#1a0000" stroke-width="0.8" stroke-linejoin="round" />
<ellipse cx="989" cy="269.5" rx="2.5" ry="3.8" fill="#d0cc00" stroke="#1a0000" stroke-width="0.5" />
<polygon points="839.0,252.0 866.0,252.0 868.0,258.0 866.0,265.0 839.0,265.0 837.0,258.0" fill="#dcdcdc" stroke="#1a0000" stroke-width="0.8" stroke-linejoin="round" />
<polygon points="846.0,245.0 859.0,245.0 859.0,252.0 846.0,252.0" fill="#efefef" stroke="#1a0000" stroke-width="0.8" stroke-linejoin="round" />
<polygon points="974.0,233.0 988.0,233.0 993.0,260.0 980.0,260.0" fill="#c8b870" />
<ellipse cx="980" cy="233" rx="7" ry="3" fill="#d00000" />
<line x1="974.0" y1="236.0" x2="989.0" y2="238.0" stroke="#3a3a20" stroke-width="1"/>
<line x1="974.9" y1="239.6" x2="989.6" y2="241.6" stroke="#3a3a20" stroke-width="1"/>
<line x1="975.8" y1="243.2" x2="990.2" y2="245.2" stroke="#3a3a20" stroke-width="1"/>
<line x1="976.7" y1="246.8" x2="990.8" y2="248.8" stroke="#3a3a20" stroke-width="1"/>
<line x1="977.6" y1="250.4" x2="991.4" y2="252.4" stroke="#3a3a20" stroke-width="1"/>
<line x1="978.5" y1="254.0" x2="992.0" y2="256.0" stroke="#3a3a20" stroke-width="1"/>
<line x1="979.4" y1="257.6" x2="992.6" y2="259.6" stroke="#3a3a20" stroke-width="1"/>
<circle cx="854.5" cy="294.5" r="7" fill="#f4f4f4" stroke="#444" stroke-width="0.6"/>
<polygon points="1046.5,259.0 1069.5,258.0 1071.5,272.0 1046.5,273.0" fill="#d8d400" stroke="#1a0000" stroke-width="0.8" stroke-linejoin="round" />
<ellipse cx="1046.5" cy="266" rx="4" ry="7" fill="#e6e200" stroke="#1a0000" stroke-width="0.8" />
<polygon points="1009.6,285.5 1009.6,304.9 1044.5,307.8 1089.0,306.8 1100.6,309.7 1118.0,306.8 1121.9,293.3 1137.4,264.3 1149.0,254.6 1158.7,250.7 1165.4,239.1 1162.5,227.5 1147.0,223.6 1131.5,225.5 1112.2,239.1 1077.4,256.5 1044.5,272.0 1036.7,275.9" fill="#0b2e3a" stroke="#1a0000" stroke-width="0.8" stroke-linejoin="round" />
<polygon points="1077.4,256.5 1112.2,239.1 1131.5,225.5 1138.5,234.0 1118.5,248.0 1085.5,266.0" fill="#0f3c48" />
<ellipse cx="1154.8" cy="239.1" rx="10.6" ry="15.5" fill="#0b3038" stroke="#1a0000" stroke-width="0.8" />
<ellipse cx="1102.5" cy="283.6" rx="17.4" ry="25" fill="#0a3340" stroke="#1a0000" stroke-width="0.8" />
<polygon points="1095.8,266.2 1129.5,266.2 1129.5,306.8 1095.8,306.8" fill="url(#gYcyl)" stroke="#1a0000" stroke-width="0.8" stroke-linejoin="round" />
<ellipse cx="1129.5" cy="286.5" rx="13.5" ry="20.3" fill="#cac600" stroke="#1a0000" stroke-width="0.8" />
<ellipse cx="1131.5" cy="287" rx="5" ry="5.5" fill="#e0dc00" stroke="#1a0000" stroke-width="0.6" />
<polygon points="1128.5,283.0 1162.5,288.0 1162.5,295.0 1128.5,291.0" fill="#e2e010" stroke="#1a0000" stroke-width="0.8" stroke-linejoin="round" />
<ellipse cx="1162.5" cy="291.5" rx="2.5" ry="3.8" fill="#d0cc00" stroke="#1a0000" stroke-width="0.5" />
<polygon points="1012.5,274.0 1039.5,274.0 1041.5,280.0 1039.5,287.0 1012.5,287.0 1010.5,280.0" fill="#dcdcdc" stroke="#1a0000" stroke-width="0.8" stroke-linejoin="round" />
<polygon points="1019.5,267.0 1032.5,267.0 1032.5,274.0 1019.5,274.0" fill="#efefef" stroke="#1a0000" stroke-width="0.8" stroke-linejoin="round" />
<polygon points="1147.5,255.0 1161.5,255.0 1166.5,282.0 1153.5,282.0" fill="#c8b870" />
<ellipse cx="1153.5" cy="255" rx="7" ry="3" fill="#d00000" />
<line x1="1147.5" y1="258.0" x2="1162.5" y2="260.0" stroke="#3a3a20" stroke-width="1"/>
<line x1="1148.4" y1="261.6" x2="1163.1" y2="263.6" stroke="#3a3a20" stroke-width="1"/>
<line x1="1149.3" y1="265.2" x2="1163.7" y2="267.2" stroke="#3a3a20" stroke-width="1"/>
<line x1="1150.2" y1="268.8" x2="1164.3" y2="270.8" stroke="#3a3a20" stroke-width="1"/>
<line x1="1151.1" y1="272.4" x2="1164.9" y2="274.4" stroke="#3a3a20" stroke-width="1"/>
<line x1="1152.0" y1="276.0" x2="1165.5" y2="278.0" stroke="#3a3a20" stroke-width="1"/>
<line x1="1152.9" y1="279.6" x2="1166.1" y2="281.6" stroke="#3a3a20" stroke-width="1"/>
<circle cx="1028.0" cy="316.5" r="7" fill="#f4f4f4" stroke="#444" stroke-width="0.6"/>
<polygon points="844.5,300.0 856.7,300.0 856.7,369.0 844.5,369.0" fill="url(#gRod)" stroke="#1a0000" stroke-width="0.8" stroke-linejoin="round" />
<polygon points="840.4,369.0 860.7,369.0 860.7,630.0 840.4,630.0" fill="url(#gRod)" stroke="#1a0000" stroke-width="0.8" stroke-linejoin="round" />
<polygon points="1017.8,322.0 1030.0,322.0 1030.0,389.0 1017.8,389.0" fill="url(#gRod)" stroke="#1a0000" stroke-width="0.8" stroke-linejoin="round" />
<polygon points="1014.3,389.0 1033.4,389.0 1033.4,650.0 1014.3,650.0" fill="url(#gRod)" stroke="#1a0000" stroke-width="0.8" stroke-linejoin="round" />
<polygon points="839.0,300.0 861.0,300.0 861.0,322.0 839.0,322.0" fill="#a09e98" stroke="#1a0000" stroke-width="0.8" stroke-linejoin="round" />
<line x1="839" y1="304" x2="861" y2="304" stroke="#333" stroke-width="0.8"/>
<line x1="839" y1="309" x2="861" y2="309" stroke="#333" stroke-width="0.8"/>
<line x1="839" y1="314" x2="861" y2="314" stroke="#333" stroke-width="0.8"/>
<line x1="839" y1="319" x2="861" y2="319" stroke="#333" stroke-width="0.8"/>
<polygon points="1013.0,322.0 1035.0,322.0 1035.0,344.0 1013.0,344.0" fill="#a09e98" stroke="#1a0000" stroke-width="0.8" stroke-linejoin="round" />
<line x1="1013" y1="326" x2="1035" y2="326" stroke="#333" stroke-width="0.8"/>
<line x1="1013" y1="331" x2="1035" y2="331" stroke="#333" stroke-width="0.8"/>
<line x1="1013" y1="336" x2="1035" y2="336" stroke="#333" stroke-width="0.8"/>
<line x1="1013" y1="341" x2="1035" y2="341" stroke="#333" stroke-width="0.8"/>
<polygon points="860.7,593.0 948.8,575.5 948.8,629.7 874.3,608.0 860.7,607.0" fill="#780000" stroke="#1a0000" stroke-width="0.8" stroke-linejoin="round" />
<polygon points="860.7,590.0 948.8,575.5 948.8,580.0 874.0,596.0" fill="#b40000" />
<polygon points="824.1,588.0 860.7,588.0 874.3,595.0 874.3,608.0 824.1,605.3" fill="#c00000" stroke="#1a0000" stroke-width="0.8" stroke-linejoin="round" />
<polygon points="840.0,595.0 874.0,595.0 874.0,608.0 840.0,607.0" fill="#d00000" stroke="#1a0000" stroke-width="0.6" stroke-linejoin="round" />
<polygon points="1034.7,604.0 1122.8,586.5 1122.8,640.7 1048.3,619.0 1034.7,618.0" fill="#780000" stroke="#1a0000" stroke-width="0.8" stroke-linejoin="round" />
<polygon points="1034.7,601.0 1122.8,586.5 1122.8,591.0 1048.0,607.0" fill="#b40000" />
<polygon points="998.1,599.0 1034.7,599.0 1048.3,606.0 1048.3,619.0 998.1,616.3" fill="#c00000" stroke="#1a0000" stroke-width="0.8" stroke-linejoin="round" />
<polygon points="1014.0,606.0 1048.0,606.0 1048.0,619.0 1014.0,618.0" fill="#d00000" stroke="#1a0000" stroke-width="0.6" stroke-linejoin="round" />
<ellipse cx="851.9000000000001" cy="624" rx="19.69999999999999" ry="4" fill="#9a9892" stroke="#1a0000" stroke-width="0.8" />
<polygon points="828.2,628.0 875.6,628.0 875.6,724.0 828.2,724.0" fill="url(#gRod)" stroke="#1a0000" stroke-width="0.8" stroke-linejoin="round" />
<ellipse cx="851.9000000000001" cy="628" rx="23.69999999999999" ry="4" fill="#a8a6a0" stroke="#1a0000" stroke-width="0.8" />
<ellipse cx="1025.1" cy="644" rx="19.69999999999999" ry="4" fill="#9a9892" stroke="#1a0000" stroke-width="0.8" />
<polygon points="1001.4,648.0 1048.8,648.0 1048.8,745.0 1001.4,745.0" fill="url(#gRod)" stroke="#1a0000" stroke-width="0.8" stroke-linejoin="round" />
<ellipse cx="1025.1" cy="648" rx="23.69999999999999" ry="4" fill="#a8a6a0" stroke="#1a0000" stroke-width="0.8" />
<ellipse cx="786.2" cy="749.4" rx="25.7" ry="40.6" fill="#0a0a6a" stroke="#1a0000" stroke-width="0.8" />
<ellipse cx="791" cy="750" rx="20" ry="34" fill="#1a1a8a" />
<path d="M776,720 L1046,747.5 L1046,809 L780,779 C773,770 770,755 770,748 C770,738 772,727 776,720 Z" fill="url(#gShaft)" stroke="#1a0000" stroke-width="0.8" stroke-linejoin="round" />
<path d="M818,726.3 q-8,30 0,60 L828,787.3 q-8,-30 0,-60 Z" fill="#a8a418" stroke="#3a3a00" stroke-width="0.7"/>
<path d="M835,728.0 q-8,30 0,60 L845,789.0 q-8,-30 0,-60 Z" fill="#a8a418" stroke="#3a3a00" stroke-width="0.7"/>
<path d="M990,743.5 q-8,30 0,60 L1000,804.5 q-8,-30 0,-60 Z" fill="#a8a418" stroke="#3a3a00" stroke-width="0.7"/>
<path d="M1007,745.2 q-8,30 0,60 L1017,806.2 q-8,-30 0,-60 Z" fill="#a8a418" stroke="#3a3a00" stroke-width="0.7"/>
<path d="M1052.4,738 C1045,760 1039,780 1039.8,797 C1041,820 1050,845 1069.3,858.9 L1086.1,847.6 C1072,830 1067,800 1067.9,771.9 C1069,752 1080,735 1098.7,721.4 L1072,718.6 Z" fill="#e00000" stroke="#1a0000" stroke-width="0.8" stroke-linejoin="round" />
<ellipse cx="1114.2" cy="788.7" rx="25" ry="40.7" fill="#0a0a6a" stroke="#1a0000" stroke-width="0.8" />
<ellipse cx="1119" cy="789" rx="19.5" ry="34" fill="#1a1a8a" />
<path d="M1108,760.6 L1180,766.3 L1180,825.2 L1108,819.6 C1102,812 1099,798 1099,790 C1099,780 1102,768 1108,760.6 Z" fill="url(#gShaft)" stroke="#1a0000" stroke-width="0.8" stroke-linejoin="round" />
<polygon points="1301.0,807.8 1296.3,812.5 1300.7,817.9 1295.7,821.9 1299.6,827.9 1294.4,831.1 1298.0,837.7 1292.6,840.1 1295.7,847.2 1290.1,848.8 1292.7,856.3 1287.1,857.0 1289.2,864.9 1283.5,864.7 1285.1,872.9 1279.5,871.9 1280.5,880.3 1275.0,878.4 1275.4,886.9 1270.1,884.1 1269.9,892.7 1264.8,889.1 1264.1,897.6 1259.2,893.3 1257.9,901.6 1253.4,896.5 1251.5,904.6 1247.4,898.9 1245.0,906.6 1241.2,900.3 1238.3,907.7 1235.0,900.8 1231.7,907.7 1228.8,900.3 1225.0,906.6 1222.6,898.9 1218.5,904.6 1216.6,896.5 1212.1,901.6 1210.8,893.3 1205.9,897.6 1205.2,889.1 1200.1,892.7 1199.9,884.1 1194.6,886.9 1195.0,878.4 1189.5,880.3 1190.5,871.9 1184.9,872.9 1186.5,864.7 1180.8,864.9 1182.9,857.0 1177.3,856.3 1179.9,848.8 1174.3,847.2 1177.4,840.1 1172.0,837.7 1175.6,831.1 1170.4,827.9 1174.3,821.9 1169.3,817.9 1173.7,812.5 1169.0,807.8 1173.7,803.1 1169.3,797.7 1174.3,793.7 1170.4,787.7 1175.6,784.5 1172.0,777.9 1177.4,775.5 1174.3,768.4 1179.9,766.8 1177.3,759.3 1182.9,758.6 1180.8,750.7 1186.5,750.9 1184.9,742.7 1190.5,743.7 1189.5,735.3 1195.0,737.2 1194.6,728.7 1199.9,731.5 1200.1,722.9 1205.2,726.5 1205.9,718.0 1210.8,722.3 1212.1,714.0 1216.6,719.1 1218.5,711.0 1222.6,716.7 1225.0,709.0 1228.8,715.3 1231.7,707.9 1235.0,714.8 1238.3,707.9 1241.2,715.3 1245.0,709.0 1247.4,716.7 1251.5,711.0 1253.4,719.1 1257.9,714.0 1259.2,722.3 1264.1,718.0 1264.8,726.5 1269.9,722.9 1270.1,731.5 1275.4,728.7 1275.0,737.2 1280.5,735.3 1279.5,743.7 1285.1,742.7 1283.5,750.9 1289.2,750.7 1287.1,758.6 1292.7,759.3 1290.1,766.8 1295.7,768.4 1292.6,775.5 1298.0,777.9 1294.4,784.5 1299.6,787.7 1295.7,793.7 1300.7,797.7 1296.3,803.1" fill="#e4e040" stroke="#3a3800" stroke-width="0.6" stroke-linejoin="round" />
<polygon points="1303.5,807.6 1298.8,812.4 1303.2,817.8 1298.2,821.7 1302.1,827.8 1296.9,831.0 1300.5,837.6 1295.1,839.9 1298.2,847.1 1292.6,848.6 1295.2,856.2 1289.6,856.8 1291.7,864.8 1286.0,864.6 1287.6,872.8 1282.0,871.7 1283.0,880.1 1277.5,878.2 1277.9,886.7 1272.6,884.0 1272.4,892.5 1267.3,889.0 1266.6,897.4 1261.7,893.1 1260.4,901.4 1255.9,896.4 1254.0,904.5 1249.9,898.7 1247.5,906.5 1243.7,900.2 1240.8,907.5 1237.5,900.6 1234.2,907.5 1231.3,900.2 1227.5,906.5 1225.1,898.7 1221.0,904.5 1219.1,896.4 1214.6,901.4 1213.3,893.1 1208.4,897.4 1207.7,889.0 1202.6,892.5 1202.4,884.0 1197.1,886.7 1197.5,878.2 1192.0,880.1 1193.0,871.7 1187.4,872.8 1189.0,864.6 1183.3,864.8 1185.4,856.8 1179.8,856.2 1182.4,848.6 1176.8,847.1 1179.9,839.9 1174.5,837.6 1178.1,831.0 1172.9,827.8 1176.8,821.7 1171.8,817.8 1176.2,812.4 1171.5,807.6 1176.2,802.9 1171.8,797.5 1176.8,793.6 1172.9,787.5 1178.1,784.3 1174.5,777.7 1179.9,775.4 1176.8,768.2 1182.4,766.7 1179.8,759.1 1185.4,758.5 1183.3,750.5 1189.0,750.7 1187.4,742.5 1193.0,743.6 1192.0,735.2 1197.5,737.1 1197.1,728.6 1202.4,731.3 1202.6,722.8 1207.7,726.3 1208.4,717.9 1213.3,722.2 1214.6,713.9 1219.1,718.9 1221.0,710.8 1225.1,716.6 1227.5,708.8 1231.3,715.1 1234.2,707.8 1237.5,714.6 1240.8,707.8 1243.7,715.1 1247.5,708.8 1249.9,716.6 1254.0,710.8 1255.9,718.9 1260.4,713.9 1261.7,722.2 1266.6,717.9 1267.3,726.3 1272.4,722.8 1272.6,731.3 1277.9,728.6 1277.5,737.1 1283.0,735.2 1282.0,743.6 1287.6,742.5 1286.0,750.7 1291.7,750.5 1289.6,758.5 1295.2,759.1 1292.6,766.7 1298.2,768.2 1295.1,775.4 1300.5,777.7 1296.9,784.3 1302.1,787.5 1298.2,793.6 1303.2,797.5 1298.8,802.9" fill="#c0bc10" stroke="#3a3800" stroke-width="0.6" stroke-linejoin="round" />
<polygon points="1306.0,807.5 1301.3,812.2 1305.7,817.6 1300.7,821.6 1304.6,827.6 1299.4,830.8 1303.0,837.4 1297.6,839.8 1300.7,846.9 1295.1,848.5 1297.7,856.0 1292.1,856.7 1294.2,864.6 1288.5,864.4 1290.1,872.6 1284.5,871.6 1285.5,880.0 1280.0,878.1 1280.4,886.6 1275.1,883.8 1274.9,892.4 1269.8,888.8 1269.1,897.3 1264.2,893.0 1262.9,901.3 1258.4,896.2 1256.5,904.3 1252.4,898.6 1250.0,906.3 1246.2,900.0 1243.3,907.4 1240.0,900.5 1236.7,907.4 1233.8,900.0 1230.0,906.3 1227.6,898.6 1223.5,904.3 1221.6,896.2 1217.1,901.3 1215.8,893.0 1210.9,897.3 1210.2,888.8 1205.1,892.4 1204.9,883.8 1199.6,886.6 1200.0,878.1 1194.5,880.0 1195.5,871.6 1189.9,872.6 1191.5,864.4 1185.8,864.6 1187.9,856.7 1182.3,856.0 1184.9,848.5 1179.3,846.9 1182.4,839.8 1177.0,837.4 1180.6,830.8 1175.4,827.6 1179.3,821.6 1174.3,817.6 1178.7,812.2 1174.0,807.5 1178.7,802.8 1174.3,797.4 1179.3,793.4 1175.4,787.4 1180.6,784.2 1177.0,777.6 1182.4,775.2 1179.3,768.1 1184.9,766.5 1182.3,759.0 1187.9,758.3 1185.8,750.4 1191.5,750.6 1189.9,742.4 1195.5,743.4 1194.5,735.0 1200.0,736.9 1199.6,728.4 1204.9,731.2 1205.1,722.6 1210.2,726.2 1210.9,717.7 1215.8,722.0 1217.1,713.7 1221.6,718.8 1223.5,710.7 1227.6,716.4 1230.0,708.7 1233.8,715.0 1236.7,707.6 1240.0,714.5 1243.3,707.6 1246.2,715.0 1250.0,708.7 1252.4,716.4 1256.5,710.7 1258.4,718.8 1262.9,713.7 1264.2,722.0 1269.1,717.7 1269.8,726.2 1274.9,722.6 1275.1,731.2 1280.4,728.4 1280.0,736.9 1285.5,735.0 1284.5,743.4 1290.1,742.4 1288.5,750.6 1294.2,750.4 1292.1,758.3 1297.7,759.0 1295.1,766.5 1300.7,768.1 1297.6,775.2 1303.0,777.6 1299.4,784.2 1304.6,787.4 1300.7,793.4 1305.7,797.4 1301.3,802.8" fill="#e4e040" stroke="#3a3800" stroke-width="0.6" stroke-linejoin="round" />
<polygon points="1308.5,807.4 1303.8,812.1 1308.2,817.5 1303.2,821.4 1307.1,827.5 1301.9,830.7 1305.5,837.3 1300.1,839.6 1303.2,846.8 1297.6,848.3 1300.2,855.9 1294.6,856.5 1296.7,864.5 1291.0,864.3 1292.6,872.5 1287.0,871.4 1288.0,879.8 1282.5,877.9 1282.9,886.4 1277.6,883.7 1277.4,892.2 1272.3,888.7 1271.6,897.1 1266.7,892.8 1265.4,901.1 1260.9,896.1 1259.0,904.2 1254.9,898.4 1252.5,906.2 1248.7,899.9 1245.8,907.2 1242.5,900.4 1239.2,907.2 1236.3,899.9 1232.5,906.2 1230.1,898.4 1226.0,904.2 1224.1,896.1 1219.6,901.1 1218.3,892.8 1213.4,897.1 1212.7,888.7 1207.6,892.2 1207.4,883.7 1202.1,886.4 1202.5,877.9 1197.0,879.8 1198.0,871.4 1192.4,872.5 1194.0,864.3 1188.3,864.5 1190.4,856.5 1184.8,855.9 1187.4,848.3 1181.8,846.8 1184.9,839.6 1179.5,837.3 1183.1,830.7 1177.9,827.5 1181.8,821.4 1176.8,817.5 1181.2,812.1 1176.5,807.4 1181.2,802.6 1176.8,797.2 1181.8,793.3 1177.9,787.2 1183.1,784.0 1179.5,777.4 1184.9,775.1 1181.8,767.9 1187.4,766.4 1184.8,758.8 1190.4,758.2 1188.3,750.2 1194.0,750.4 1192.4,742.2 1198.0,743.3 1197.0,734.9 1202.5,736.8 1202.1,728.3 1207.4,731.0 1207.6,722.5 1212.7,726.0 1213.4,717.6 1218.3,721.9 1219.6,713.6 1224.1,718.6 1226.0,710.5 1230.1,716.3 1232.5,708.5 1236.3,714.8 1239.2,707.5 1242.5,714.4 1245.8,707.5 1248.7,714.8 1252.5,708.5 1254.9,716.3 1259.0,710.5 1260.9,718.6 1265.4,713.6 1266.7,721.9 1271.6,717.6 1272.3,726.0 1277.4,722.5 1277.6,731.0 1282.9,728.3 1282.5,736.8 1288.0,734.9 1287.0,743.3 1292.6,742.2 1291.0,750.4 1296.7,750.2 1294.6,758.2 1300.2,758.8 1297.6,766.4 1303.2,767.9 1300.1,775.1 1305.5,777.4 1301.9,784.0 1307.1,787.2 1303.2,793.3 1308.2,797.2 1303.8,802.6" fill="#c0bc10" stroke="#3a3800" stroke-width="0.6" stroke-linejoin="round" />
<polygon points="1311.0,807.2 1306.3,811.9 1310.7,817.3 1305.7,821.3 1309.6,827.3 1304.4,830.5 1308.0,837.1 1302.6,839.5 1305.7,846.6 1300.1,848.2 1302.7,855.7 1297.1,856.4 1299.2,864.3 1293.5,864.1 1295.1,872.3 1289.5,871.3 1290.5,879.7 1285.0,877.8 1285.4,886.3 1280.1,883.5 1279.9,892.1 1274.8,888.5 1274.1,897.0 1269.2,892.7 1267.9,901.0 1263.4,895.9 1261.5,904.0 1257.4,898.3 1255.0,906.0 1251.2,899.7 1248.3,907.1 1245.0,900.2 1241.7,907.1 1238.8,899.7 1235.0,906.0 1232.6,898.3 1228.5,904.0 1226.6,895.9 1222.1,901.0 1220.8,892.7 1215.9,897.0 1215.2,888.5 1210.1,892.1 1209.9,883.5 1204.6,886.3 1205.0,877.8 1199.5,879.7 1200.5,871.3 1194.9,872.3 1196.5,864.1 1190.8,864.3 1192.9,856.4 1187.3,855.7 1189.9,848.2 1184.3,846.6 1187.4,839.5 1182.0,837.1 1185.6,830.5 1180.4,827.3 1184.3,821.3 1179.3,817.3 1183.7,811.9 1179.0,807.2 1183.7,802.5 1179.3,797.1 1184.3,793.1 1180.4,787.1 1185.6,783.9 1182.0,777.3 1187.4,774.9 1184.3,767.8 1189.9,766.2 1187.3,758.7 1192.9,758.0 1190.8,750.1 1196.5,750.3 1194.9,742.1 1200.5,743.1 1199.5,734.7 1205.0,736.6 1204.6,728.1 1209.9,730.9 1210.1,722.3 1215.2,725.9 1215.9,717.4 1220.8,721.7 1222.1,713.4 1226.6,718.5 1228.5,710.4 1232.6,716.1 1235.0,708.4 1238.8,714.7 1241.7,707.3 1245.0,714.2 1248.3,707.3 1251.2,714.7 1255.0,708.4 1257.4,716.1 1261.5,710.4 1263.4,718.5 1267.9,713.4 1269.2,721.7 1274.1,717.4 1274.8,725.9 1279.9,722.3 1280.1,730.9 1285.4,728.1 1285.0,736.6 1290.5,734.7 1289.5,743.1 1295.1,742.1 1293.5,750.3 1299.2,750.1 1297.1,758.0 1302.7,758.7 1300.1,766.2 1305.7,767.8 1302.6,774.9 1308.0,777.3 1304.4,783.9 1309.6,787.1 1305.7,793.1 1310.7,797.1 1306.3,802.5" fill="#e4e040" stroke="#3a3800" stroke-width="0.6" stroke-linejoin="round" />
<polygon points="1313.5,807.0 1308.8,811.8 1313.2,817.2 1308.2,821.1 1312.1,827.2 1306.9,830.4 1310.5,837.0 1305.1,839.3 1308.2,846.5 1302.6,848.0 1305.2,855.6 1299.6,856.2 1301.7,864.2 1296.0,864.0 1297.6,872.2 1292.0,871.1 1293.0,879.5 1287.5,877.6 1287.9,886.1 1282.6,883.4 1282.4,891.9 1277.3,888.4 1276.6,896.8 1271.7,892.5 1270.4,900.8 1265.9,895.8 1264.0,903.9 1259.9,898.1 1257.5,905.9 1253.7,899.6 1250.8,906.9 1247.5,900.0 1244.2,906.9 1241.3,899.6 1237.5,905.9 1235.1,898.1 1231.0,903.9 1229.1,895.8 1224.6,900.8 1223.3,892.5 1218.4,896.8 1217.7,888.4 1212.6,891.9 1212.4,883.4 1207.1,886.1 1207.5,877.6 1202.0,879.5 1203.0,871.1 1197.4,872.2 1199.0,864.0 1193.3,864.2 1195.4,856.2 1189.8,855.6 1192.4,848.0 1186.8,846.5 1189.9,839.3 1184.5,837.0 1188.1,830.4 1182.9,827.2 1186.8,821.1 1181.8,817.2 1186.2,811.8 1181.5,807.0 1186.2,802.3 1181.8,796.9 1186.8,793.0 1182.9,786.9 1188.1,783.7 1184.5,777.1 1189.9,774.8 1186.8,767.6 1192.4,766.1 1189.8,758.5 1195.4,757.9 1193.3,749.9 1199.0,750.1 1197.4,741.9 1203.0,743.0 1202.0,734.6 1207.5,736.5 1207.1,728.0 1212.4,730.7 1212.6,722.2 1217.7,725.7 1218.4,717.3 1223.3,721.6 1224.6,713.3 1229.1,718.3 1231.0,710.2 1235.1,716.0 1237.5,708.2 1241.3,714.5 1244.2,707.2 1247.5,714.0 1250.8,707.2 1253.7,714.5 1257.5,708.2 1259.9,716.0 1264.0,710.2 1265.9,718.3 1270.4,713.3 1271.7,721.6 1276.6,717.3 1277.3,725.7 1282.4,722.2 1282.6,730.7 1287.9,728.0 1287.5,736.5 1293.0,734.6 1292.0,743.0 1297.6,741.9 1296.0,750.1 1301.7,749.9 1299.6,757.9 1305.2,758.5 1302.6,766.1 1308.2,767.6 1305.1,774.8 1310.5,777.1 1306.9,783.7 1312.1,786.9 1308.2,793.0 1313.2,796.9 1308.8,802.3" fill="#c0bc10" stroke="#3a3800" stroke-width="0.6" stroke-linejoin="round" />
<polygon points="1316.0,806.9 1311.3,811.6 1315.7,817.0 1310.7,821.0 1314.6,827.0 1309.4,830.2 1313.0,836.8 1307.6,839.2 1310.7,846.3 1305.1,847.9 1307.7,855.4 1302.1,856.1 1304.2,864.0 1298.5,863.8 1300.1,872.0 1294.5,871.0 1295.5,879.4 1290.0,877.5 1290.4,886.0 1285.1,883.2 1284.9,891.8 1279.8,888.2 1279.1,896.7 1274.2,892.4 1272.9,900.7 1268.4,895.6 1266.5,903.7 1262.4,898.0 1260.0,905.7 1256.2,899.4 1253.3,906.8 1250.0,899.9 1246.7,906.8 1243.8,899.4 1240.0,905.7 1237.6,898.0 1233.5,903.7 1231.6,895.6 1227.1,900.7 1225.8,892.4 1220.9,896.7 1220.2,888.2 1215.1,891.8 1214.9,883.2 1209.6,886.0 1210.0,877.5 1204.5,879.4 1205.5,871.0 1199.9,872.0 1201.5,863.8 1195.8,864.0 1197.9,856.1 1192.3,855.4 1194.9,847.9 1189.3,846.3 1192.4,839.2 1187.0,836.8 1190.6,830.2 1185.4,827.0 1189.3,821.0 1184.3,817.0 1188.7,811.6 1184.0,806.9 1188.7,802.2 1184.3,796.8 1189.3,792.8 1185.4,786.8 1190.6,783.6 1187.0,777.0 1192.4,774.6 1189.3,767.5 1194.9,765.9 1192.3,758.4 1197.9,757.7 1195.8,749.8 1201.5,750.0 1199.9,741.8 1205.5,742.8 1204.5,734.4 1210.0,736.3 1209.6,727.8 1214.9,730.6 1215.1,722.0 1220.2,725.6 1220.9,717.1 1225.8,721.4 1227.1,713.1 1231.6,718.2 1233.5,710.1 1237.6,715.8 1240.0,708.1 1243.8,714.4 1246.7,707.0 1250.0,713.9 1253.3,707.0 1256.2,714.4 1260.0,708.1 1262.4,715.8 1266.5,710.1 1268.4,718.2 1272.9,713.1 1274.2,721.4 1279.1,717.1 1279.8,725.6 1284.9,722.0 1285.1,730.6 1290.4,727.8 1290.0,736.3 1295.5,734.4 1294.5,742.8 1300.1,741.8 1298.5,750.0 1304.2,749.8 1302.1,757.7 1307.7,758.4 1305.1,765.9 1310.7,767.5 1307.6,774.6 1313.0,777.0 1309.4,783.6 1314.6,786.8 1310.7,792.8 1315.7,796.8 1311.3,802.2" fill="#e4e040" stroke="#3a3800" stroke-width="0.6" stroke-linejoin="round" />
<polygon points="1318.5,806.8 1313.8,811.5 1318.2,816.9 1313.2,820.8 1317.1,826.9 1311.9,830.1 1315.5,836.7 1310.1,839.0 1313.2,846.2 1307.6,847.7 1310.2,855.3 1304.6,855.9 1306.7,863.9 1301.0,863.7 1302.6,871.9 1297.0,870.8 1298.0,879.2 1292.5,877.3 1292.9,885.8 1287.6,883.1 1287.4,891.6 1282.3,888.1 1281.6,896.5 1276.7,892.2 1275.4,900.5 1270.9,895.5 1269.0,903.6 1264.9,897.8 1262.5,905.6 1258.7,899.3 1255.8,906.6 1252.5,899.8 1249.2,906.6 1246.3,899.3 1242.5,905.6 1240.1,897.8 1236.0,903.6 1234.1,895.5 1229.6,900.5 1228.3,892.2 1223.4,896.5 1222.7,888.1 1217.6,891.6 1217.4,883.1 1212.1,885.8 1212.5,877.3 1207.0,879.2 1208.0,870.8 1202.4,871.9 1204.0,863.7 1198.3,863.9 1200.4,855.9 1194.8,855.3 1197.4,847.7 1191.8,846.2 1194.9,839.0 1189.5,836.7 1193.1,830.1 1187.9,826.9 1191.8,820.8 1186.8,816.9 1191.2,811.5 1186.5,806.8 1191.2,802.0 1186.8,796.6 1191.8,792.7 1187.9,786.6 1193.1,783.4 1189.5,776.8 1194.9,774.5 1191.8,767.3 1197.4,765.8 1194.8,758.2 1200.4,757.6 1198.3,749.6 1204.0,749.8 1202.4,741.6 1208.0,742.7 1207.0,734.3 1212.5,736.2 1212.1,727.7 1217.4,730.4 1217.6,721.9 1222.7,725.4 1223.4,717.0 1228.3,721.3 1229.6,713.0 1234.1,718.0 1236.0,709.9 1240.1,715.7 1242.5,707.9 1246.3,714.2 1249.2,706.9 1252.5,713.8 1255.8,706.9 1258.7,714.2 1262.5,707.9 1264.9,715.7 1269.0,709.9 1270.9,718.0 1275.4,713.0 1276.7,721.3 1281.6,717.0 1282.3,725.4 1287.4,721.9 1287.6,730.4 1292.9,727.7 1292.5,736.2 1298.0,734.3 1297.0,742.7 1302.6,741.6 1301.0,749.8 1306.7,749.6 1304.6,757.6 1310.2,758.2 1307.6,765.8 1313.2,767.3 1310.1,774.5 1315.5,776.8 1311.9,783.4 1317.1,786.6 1313.2,792.7 1318.2,796.6 1313.8,802.0" fill="#c0bc10" stroke="#3a3800" stroke-width="0.6" stroke-linejoin="round" />
<polygon points="1321.0,806.6 1316.3,811.3 1320.7,816.7 1315.7,820.7 1319.6,826.7 1314.4,829.9 1318.0,836.5 1312.6,838.9 1315.7,846.0 1310.1,847.6 1312.7,855.1 1307.1,855.8 1309.2,863.7 1303.5,863.5 1305.1,871.7 1299.5,870.7 1300.5,879.1 1295.0,877.2 1295.4,885.7 1290.1,882.9 1289.9,891.5 1284.8,887.9 1284.1,896.4 1279.2,892.1 1277.9,900.4 1273.4,895.3 1271.5,903.4 1267.4,897.7 1265.0,905.4 1261.2,899.1 1258.3,906.5 1255.0,899.6 1251.7,906.5 1248.8,899.1 1245.0,905.4 1242.6,897.7 1238.5,903.4 1236.6,895.3 1232.1,900.4 1230.8,892.1 1225.9,896.4 1225.2,887.9 1220.1,891.5 1219.9,882.9 1214.6,885.7 1215.0,877.2 1209.5,879.1 1210.5,870.7 1204.9,871.7 1206.5,863.5 1200.8,863.7 1202.9,855.8 1197.3,855.1 1199.9,847.6 1194.3,846.0 1197.4,838.9 1192.0,836.5 1195.6,829.9 1190.4,826.7 1194.3,820.7 1189.3,816.7 1193.7,811.3 1189.0,806.6 1193.7,801.9 1189.3,796.5 1194.3,792.5 1190.4,786.5 1195.6,783.3 1192.0,776.7 1197.4,774.3 1194.3,767.2 1199.9,765.6 1197.3,758.1 1202.9,757.4 1200.8,749.5 1206.5,749.7 1204.9,741.5 1210.5,742.5 1209.5,734.1 1215.0,736.0 1214.6,727.5 1219.9,730.3 1220.1,721.7 1225.2,725.3 1225.9,716.8 1230.8,721.1 1232.1,712.8 1236.6,717.9 1238.5,709.8 1242.6,715.5 1245.0,707.8 1248.8,714.1 1251.7,706.7 1255.0,713.6 1258.3,706.7 1261.2,714.1 1265.0,707.8 1267.4,715.5 1271.5,709.8 1273.4,717.9 1277.9,712.8 1279.2,721.1 1284.1,716.8 1284.8,725.3 1289.9,721.7 1290.1,730.3 1295.4,727.5 1295.0,736.0 1300.5,734.1 1299.5,742.5 1305.1,741.5 1303.5,749.7 1309.2,749.5 1307.1,757.4 1312.7,758.1 1310.1,765.6 1315.7,767.2 1312.6,774.3 1318.0,776.7 1314.4,783.3 1319.6,786.5 1315.7,792.5 1320.7,796.5 1316.3,801.9" fill="#e4e040" stroke="#3a3800" stroke-width="0.6" stroke-linejoin="round" />
<polygon points="1323.5,806.5 1318.8,811.2 1323.2,816.6 1318.2,820.5 1322.1,826.6 1316.9,829.8 1320.5,836.4 1315.1,838.7 1318.2,845.9 1312.6,847.4 1315.2,855.0 1309.6,855.6 1311.7,863.6 1306.0,863.4 1307.6,871.6 1302.0,870.5 1303.0,878.9 1297.5,877.0 1297.9,885.5 1292.6,882.8 1292.4,891.3 1287.3,887.8 1286.6,896.2 1281.7,891.9 1280.4,900.2 1275.9,895.2 1274.0,903.3 1269.9,897.5 1267.5,905.3 1263.7,899.0 1260.8,906.3 1257.5,899.5 1254.2,906.3 1251.3,899.0 1247.5,905.3 1245.1,897.5 1241.0,903.3 1239.1,895.2 1234.6,900.2 1233.3,891.9 1228.4,896.2 1227.7,887.8 1222.6,891.3 1222.4,882.8 1217.1,885.5 1217.5,877.0 1212.0,878.9 1213.0,870.5 1207.4,871.6 1209.0,863.4 1203.3,863.6 1205.4,855.6 1199.8,855.0 1202.4,847.4 1196.8,845.9 1199.9,838.7 1194.5,836.4 1198.1,829.8 1192.9,826.6 1196.8,820.5 1191.8,816.6 1196.2,811.2 1191.5,806.5 1196.2,801.7 1191.8,796.3 1196.8,792.4 1192.9,786.3 1198.1,783.1 1194.5,776.5 1199.9,774.2 1196.8,767.0 1202.4,765.5 1199.8,757.9 1205.4,757.3 1203.3,749.3 1209.0,749.5 1207.4,741.3 1213.0,742.4 1212.0,734.0 1217.5,735.9 1217.1,727.4 1222.4,730.1 1222.6,721.6 1227.7,725.1 1228.4,716.7 1233.3,721.0 1234.6,712.7 1239.1,717.7 1241.0,709.6 1245.1,715.4 1247.5,707.6 1251.3,713.9 1254.2,706.6 1257.5,713.5 1260.8,706.6 1263.7,713.9 1267.5,707.6 1269.9,715.4 1274.0,709.6 1275.9,717.7 1280.4,712.7 1281.7,721.0 1286.6,716.7 1287.3,725.1 1292.4,721.6 1292.6,730.1 1297.9,727.4 1297.5,735.9 1303.0,734.0 1302.0,742.4 1307.6,741.3 1306.0,749.5 1311.7,749.3 1309.6,757.3 1315.2,757.9 1312.6,765.5 1318.2,767.0 1315.1,774.2 1320.5,776.5 1316.9,783.1 1322.1,786.3 1318.2,792.4 1323.2,796.3 1318.8,801.7" fill="#c0bc10" stroke="#3a3800" stroke-width="0.6" stroke-linejoin="round" />
<polygon points="1326.0,806.3 1321.3,811.0 1325.7,816.4 1320.7,820.4 1324.6,826.4 1319.4,829.6 1323.0,836.2 1317.6,838.6 1320.7,845.7 1315.1,847.3 1317.7,854.8 1312.1,855.5 1314.2,863.4 1308.5,863.2 1310.1,871.4 1304.5,870.4 1305.5,878.8 1300.0,876.9 1300.4,885.4 1295.1,882.6 1294.9,891.2 1289.8,887.6 1289.1,896.1 1284.2,891.8 1282.9,900.1 1278.4,895.0 1276.5,903.1 1272.4,897.4 1270.0,905.1 1266.2,898.8 1263.3,906.2 1260.0,899.3 1256.7,906.2 1253.8,898.8 1250.0,905.1 1247.6,897.4 1243.5,903.1 1241.6,895.0 1237.1,900.1 1235.8,891.8 1230.9,896.1 1230.2,887.6 1225.1,891.2 1224.9,882.6 1219.6,885.4 1220.0,876.9 1214.5,878.8 1215.5,870.4 1209.9,871.4 1211.5,863.2 1205.8,863.4 1207.9,855.5 1202.3,854.8 1204.9,847.3 1199.3,845.7 1202.4,838.6 1197.0,836.2 1200.6,829.6 1195.4,826.4 1199.3,820.4 1194.3,816.4 1198.7,811.0 1194.0,806.3 1198.7,801.6 1194.3,796.2 1199.3,792.2 1195.4,786.2 1200.6,783.0 1197.0,776.4 1202.4,774.0 1199.3,766.9 1204.9,765.3 1202.3,757.8 1207.9,757.1 1205.8,749.2 1211.5,749.4 1209.9,741.2 1215.5,742.2 1214.5,733.8 1220.0,735.7 1219.6,727.2 1224.9,730.0 1225.1,721.4 1230.2,725.0 1230.9,716.5 1235.8,720.8 1237.1,712.5 1241.6,717.6 1243.5,709.5 1247.6,715.2 1250.0,707.5 1253.8,713.8 1256.7,706.4 1260.0,713.3 1263.3,706.4 1266.2,713.8 1270.0,707.5 1272.4,715.2 1276.5,709.5 1278.4,717.6 1282.9,712.5 1284.2,720.8 1289.1,716.5 1289.8,725.0 1294.9,721.4 1295.1,730.0 1300.4,727.2 1300.0,735.7 1305.5,733.8 1304.5,742.2 1310.1,741.2 1308.5,749.4 1314.2,749.2 1312.1,757.1 1317.7,757.8 1315.1,765.3 1320.7,766.9 1317.6,774.0 1323.0,776.4 1319.4,783.0 1324.6,786.2 1320.7,792.2 1325.7,796.2 1321.3,801.6" fill="#e4e040" stroke="#3a3800" stroke-width="0.6" stroke-linejoin="round" />
<polygon points="1328.5,806.1 1323.8,810.9 1328.2,816.3 1323.2,820.2 1327.1,826.3 1321.9,829.5 1325.5,836.1 1320.1,838.4 1323.2,845.6 1317.6,847.1 1320.2,854.7 1314.6,855.3 1316.7,863.3 1311.0,863.1 1312.6,871.3 1307.0,870.2 1308.0,878.6 1302.5,876.7 1302.9,885.2 1297.6,882.5 1297.4,891.0 1292.3,887.5 1291.6,895.9 1286.7,891.6 1285.4,899.9 1280.9,894.9 1279.0,903.0 1274.9,897.2 1272.5,905.0 1268.7,898.7 1265.8,906.0 1262.5,899.1 1259.2,906.0 1256.3,898.7 1252.5,905.0 1250.1,897.2 1246.0,903.0 1244.1,894.9 1239.6,899.9 1238.3,891.6 1233.4,895.9 1232.7,887.5 1227.6,891.0 1227.4,882.5 1222.1,885.2 1222.5,876.7 1217.0,878.6 1218.0,870.2 1212.4,871.3 1214.0,863.1 1208.3,863.3 1210.4,855.3 1204.8,854.7 1207.4,847.1 1201.8,845.6 1204.9,838.4 1199.5,836.1 1203.1,829.5 1197.9,826.3 1201.8,820.2 1196.8,816.3 1201.2,810.9 1196.5,806.1 1201.2,801.4 1196.8,796.0 1201.8,792.1 1197.9,786.0 1203.1,782.8 1199.5,776.2 1204.9,773.9 1201.8,766.7 1207.4,765.2 1204.8,757.6 1210.4,757.0 1208.3,749.0 1214.0,749.2 1212.4,741.0 1218.0,742.1 1217.0,733.7 1222.5,735.6 1222.1,727.1 1227.4,729.8 1227.6,721.3 1232.7,724.8 1233.4,716.4 1238.3,720.7 1239.6,712.4 1244.1,717.4 1246.0,709.3 1250.1,715.1 1252.5,707.3 1256.3,713.6 1259.2,706.3 1262.5,713.1 1265.8,706.3 1268.7,713.6 1272.5,707.3 1274.9,715.1 1279.0,709.3 1280.9,717.4 1285.4,712.4 1286.7,720.7 1291.6,716.4 1292.3,724.8 1297.4,721.3 1297.6,729.8 1302.9,727.1 1302.5,735.6 1308.0,733.7 1307.0,742.1 1312.6,741.0 1311.0,749.2 1316.7,749.0 1314.6,757.0 1320.2,757.6 1317.6,765.2 1323.2,766.7 1320.1,773.9 1325.5,776.2 1321.9,782.8 1327.1,786.0 1323.2,792.1 1328.2,796.0 1323.8,801.4" fill="#c0bc10" stroke="#3a3800" stroke-width="0.6" stroke-linejoin="round" />
<polygon points="1331.0,806.0 1326.3,810.7 1330.7,816.1 1325.7,820.1 1329.6,826.1 1324.4,829.3 1328.0,835.9 1322.6,838.3 1325.7,845.4 1320.1,847.0 1322.7,854.5 1317.1,855.2 1319.2,863.1 1313.5,862.9 1315.1,871.1 1309.5,870.1 1310.5,878.5 1305.0,876.6 1305.4,885.1 1300.1,882.3 1299.9,890.9 1294.8,887.3 1294.1,895.8 1289.2,891.5 1287.9,899.8 1283.4,894.7 1281.5,902.8 1277.4,897.1 1275.0,904.8 1271.2,898.5 1268.3,905.9 1265.0,899.0 1261.7,905.9 1258.8,898.5 1255.0,904.8 1252.6,897.1 1248.5,902.8 1246.6,894.7 1242.1,899.8 1240.8,891.5 1235.9,895.8 1235.2,887.3 1230.1,890.9 1229.9,882.3 1224.6,885.1 1225.0,876.6 1219.5,878.5 1220.5,870.1 1214.9,871.1 1216.5,862.9 1210.8,863.1 1212.9,855.2 1207.3,854.5 1209.9,847.0 1204.3,845.4 1207.4,838.3 1202.0,835.9 1205.6,829.3 1200.4,826.1 1204.3,820.1 1199.3,816.1 1203.7,810.7 1199.0,806.0 1203.7,801.3 1199.3,795.9 1204.3,791.9 1200.4,785.9 1205.6,782.7 1202.0,776.1 1207.4,773.7 1204.3,766.6 1209.9,765.0 1207.3,757.5 1212.9,756.8 1210.8,748.9 1216.5,749.1 1214.9,740.9 1220.5,741.9 1219.5,733.5 1225.0,735.4 1224.6,726.9 1229.9,729.7 1230.1,721.1 1235.2,724.7 1235.9,716.2 1240.8,720.5 1242.1,712.2 1246.6,717.3 1248.5,709.2 1252.6,714.9 1255.0,707.2 1258.8,713.5 1261.7,706.1 1265.0,713.0 1268.3,706.1 1271.2,713.5 1275.0,707.2 1277.4,714.9 1281.5,709.2 1283.4,717.3 1287.9,712.2 1289.2,720.5 1294.1,716.2 1294.8,724.7 1299.9,721.1 1300.1,729.7 1305.4,726.9 1305.0,735.4 1310.5,733.5 1309.5,741.9 1315.1,740.9 1313.5,749.1 1319.2,748.9 1317.1,756.8 1322.7,757.5 1320.1,765.0 1325.7,766.6 1322.6,773.7 1328.0,776.1 1324.4,782.7 1329.6,785.9 1325.7,791.9 1330.7,795.9 1326.3,801.3" fill="#7c7a00" stroke="#2a2600" stroke-width="0.8" stroke-linejoin="round" />
<ellipse cx="1265" cy="806" rx="39.5" ry="53" fill="#b4b020" stroke="#2a2600" stroke-width="0.9" />
<ellipse cx="1269" cy="806" rx="35.5" ry="51" fill="#7c7a00" stroke="#2a2600" stroke-width="0.9" />
<ellipse cx="1271.6" cy="806" rx="10.5" ry="15" fill="#c8c430" stroke="#2a2600" stroke-width="0.8" />
<ellipse cx="1268" cy="731.2" rx="7" ry="11" fill="#dcd800" stroke="#2a2600" stroke-width="0.8" />
<ellipse cx="1306.4" cy="760.8" rx="7" ry="11" fill="#dcd800" stroke="#2a2600" stroke-width="0.8" />
<ellipse cx="1313.4" cy="822.8" rx="7" ry="11" fill="#dcd800" stroke="#2a2600" stroke-width="0.8" />
<ellipse cx="1282" cy="874" rx="7" ry="11" fill="#dcd800" stroke="#2a2600" stroke-width="0.8" />
<ellipse cx="1236.7" cy="874" rx="7" ry="11" fill="#dcd800" stroke="#2a2600" stroke-width="0.8" />
<ellipse cx="1212.3" cy="823.5" rx="7" ry="11" fill="#dcd800" stroke="#2a2600" stroke-width="0.8" />
<ellipse cx="1226.2" cy="760.8" rx="7" ry="11" fill="#dcd800" stroke="#2a2600" stroke-width="0.8" />
<polygon points="1533.6,770.2 1528.6,774.4 1533.4,779.0 1528.3,782.8 1533.0,787.8 1527.7,791.2 1532.2,796.5 1526.8,799.4 1531.1,805.1 1525.6,807.6 1529.7,813.7 1524.2,815.7 1528.0,822.1 1522.4,823.7 1526.0,830.3 1520.4,831.5 1523.8,838.4 1518.1,839.2 1521.2,846.3 1515.5,846.6 1518.4,854.0 1512.7,853.8 1515.3,861.5 1509.6,860.8 1511.9,868.7 1506.2,867.6 1508.3,875.6 1502.7,874.0 1504.4,882.2 1498.9,880.2 1500.3,888.5 1494.9,886.0 1496.0,894.4 1490.6,891.6 1491.5,900.0 1486.2,896.7 1486.8,905.3 1481.7,901.6 1481.9,910.1 1476.9,906.0 1476.9,914.6 1472.0,910.1 1471.7,918.6 1467.0,913.7 1466.4,922.3 1461.9,917.0 1460.9,925.5 1456.6,919.9 1455.4,928.2 1451.2,922.3 1449.7,930.5 1445.8,924.3 1444.0,932.4 1440.3,925.8 1438.2,933.8 1434.8,926.9 1432.4,934.7 1429.2,927.6 1426.5,935.2 1423.6,927.8 1420.7,935.2 1418.0,927.6 1414.8,934.7 1412.4,926.9 1409.0,933.8 1406.9,925.8 1403.2,932.4 1401.4,924.3 1397.5,930.5 1396.0,922.3 1391.8,928.2 1390.6,919.9 1386.3,925.5 1385.3,917.0 1380.8,922.3 1380.2,913.7 1375.5,918.6 1375.2,910.1 1370.3,914.6 1370.3,906.0 1365.3,910.1 1365.5,901.6 1360.4,905.3 1361.0,896.7 1355.7,900.0 1356.6,891.6 1351.2,894.4 1352.3,886.0 1346.9,888.5 1348.3,880.2 1342.8,882.2 1344.5,874.0 1338.9,875.6 1341.0,867.6 1335.3,868.7 1337.6,860.8 1331.9,861.5 1334.5,853.8 1328.8,854.0 1331.7,846.6 1326.0,846.3 1329.1,839.2 1323.4,838.4 1326.8,831.5 1321.2,830.3 1324.8,823.7 1319.2,822.1 1323.0,815.7 1317.5,813.7 1321.6,807.6 1316.1,805.1 1320.4,799.4 1315.0,796.5 1319.5,791.2 1314.2,787.8 1318.9,782.8 1313.8,779.0 1318.6,774.4 1313.6,770.2 1318.6,766.1 1313.8,761.5 1318.9,757.7 1314.2,752.7 1319.5,749.3 1315.0,744.0 1320.4,741.1 1316.1,735.4 1321.6,732.9 1317.5,726.8 1323.0,724.8 1319.2,718.4 1324.8,716.8 1321.2,710.2 1326.8,709.0 1323.4,702.1 1329.1,701.3 1326.0,694.2 1331.7,693.9 1328.8,686.5 1334.5,686.7 1331.9,679.0 1337.6,679.7 1335.3,671.8 1341.0,672.9 1338.9,664.9 1344.5,666.5 1342.8,658.3 1348.3,660.3 1346.9,652.0 1352.3,654.5 1351.2,646.1 1356.6,648.9 1355.7,640.5 1361.0,643.8 1360.4,635.2 1365.5,638.9 1365.3,630.4 1370.3,634.5 1370.3,625.9 1375.2,630.4 1375.5,621.9 1380.2,626.8 1380.8,618.2 1385.3,623.5 1386.3,615.0 1390.6,620.6 1391.8,612.3 1396.0,618.2 1397.5,610.0 1401.4,616.2 1403.2,608.1 1406.9,614.7 1409.0,606.7 1412.4,613.6 1414.8,605.8 1418.0,612.9 1420.7,605.3 1423.6,612.7 1426.5,605.3 1429.2,612.9 1432.4,605.8 1434.8,613.6 1438.2,606.7 1440.3,614.7 1444.0,608.1 1445.8,616.2 1449.7,610.0 1451.2,618.2 1455.4,612.3 1456.6,620.6 1460.9,615.0 1461.9,623.5 1466.4,618.2 1467.0,626.8 1471.7,621.9 1472.0,630.4 1476.9,625.9 1476.9,634.5 1481.9,630.4 1481.7,638.9 1486.8,635.2 1486.2,643.8 1491.5,640.5 1490.6,648.9 1496.0,646.1 1494.9,654.5 1500.3,652.0 1498.9,660.3 1504.4,658.3 1502.7,666.5 1508.3,664.9 1506.2,672.9 1511.9,671.8 1509.6,679.7 1515.3,679.0 1512.7,686.7 1518.4,686.5 1515.5,693.9 1521.2,694.2 1518.1,701.3 1523.8,702.1 1520.4,709.0 1526.0,710.2 1522.4,716.8 1528.0,718.4 1524.2,724.8 1529.7,726.8 1525.6,732.9 1531.1,735.4 1526.8,741.1 1532.2,744.0 1527.7,749.3 1533.0,752.7 1528.3,757.7 1533.4,761.5 1528.6,766.1" fill="#003c34" stroke="#021a18" stroke-width="0.5" stroke-linejoin="round" />
<polygon points="1536.0,770.5 1531.0,774.7 1535.8,779.3 1530.7,783.1 1535.4,788.0 1530.1,791.4 1534.6,796.7 1529.2,799.7 1533.5,805.4 1528.0,807.9 1532.1,813.9 1526.6,816.0 1530.4,822.3 1524.8,824.0 1528.4,830.6 1522.8,831.8 1526.2,838.7 1520.5,839.4 1523.6,846.6 1517.9,846.9 1520.8,854.3 1515.1,854.1 1517.7,861.7 1512.0,861.1 1514.3,868.9 1508.6,867.8 1510.7,875.8 1505.1,874.3 1506.8,882.4 1501.3,880.4 1502.7,888.7 1497.3,886.3 1498.4,894.7 1493.0,891.8 1493.9,900.3 1488.6,897.0 1489.2,905.5 1484.1,901.8 1484.3,910.4 1479.3,906.3 1479.3,914.8 1474.4,910.3 1474.1,918.9 1469.4,914.0 1468.8,922.5 1464.3,917.3 1463.3,925.7 1459.0,920.1 1457.8,928.5 1453.6,922.5 1452.1,930.8 1448.2,924.5 1446.4,932.6 1442.7,926.1 1440.6,934.0 1437.2,927.2 1434.8,935.0 1431.6,927.9 1428.9,935.4 1426.0,928.1 1423.1,935.4 1420.4,927.9 1417.2,935.0 1414.8,927.2 1411.4,934.0 1409.3,926.1 1405.6,932.6 1403.8,924.5 1399.9,930.8 1398.4,922.5 1394.2,928.5 1393.0,920.1 1388.7,925.7 1387.7,917.3 1383.2,922.5 1382.6,914.0 1377.9,918.9 1377.6,910.3 1372.7,914.8 1372.7,906.3 1367.7,910.4 1367.9,901.8 1362.8,905.5 1363.4,897.0 1358.1,900.3 1359.0,891.8 1353.6,894.7 1354.7,886.3 1349.3,888.7 1350.7,880.4 1345.2,882.4 1346.9,874.3 1341.3,875.8 1343.4,867.8 1337.7,868.9 1340.0,861.1 1334.3,861.7 1336.9,854.1 1331.2,854.3 1334.1,846.9 1328.4,846.6 1331.5,839.4 1325.8,838.7 1329.2,831.8 1323.6,830.6 1327.2,824.0 1321.6,822.3 1325.4,816.0 1319.9,813.9 1324.0,807.9 1318.5,805.4 1322.8,799.7 1317.4,796.7 1321.9,791.4 1316.6,788.0 1321.3,783.1 1316.2,779.3 1321.0,774.7 1316.0,770.5 1321.0,766.3 1316.2,761.7 1321.3,757.9 1316.6,753.0 1321.9,749.6 1317.4,744.3 1322.8,741.3 1318.5,735.6 1324.0,733.1 1319.9,727.1 1325.4,725.0 1321.6,718.7 1327.2,717.0 1323.6,710.4 1329.2,709.2 1325.8,702.3 1331.5,701.6 1328.4,694.4 1334.1,694.1 1331.2,686.7 1336.9,686.9 1334.3,679.3 1340.0,679.9 1337.7,672.1 1343.4,673.2 1341.3,665.2 1346.9,666.7 1345.2,658.6 1350.7,660.6 1349.3,652.3 1354.7,654.7 1353.6,646.3 1359.0,649.2 1358.1,640.7 1363.4,644.0 1362.8,635.5 1367.9,639.2 1367.7,630.6 1372.7,634.7 1372.7,626.2 1377.6,630.7 1377.9,622.1 1382.6,627.0 1383.2,618.5 1387.7,623.7 1388.7,615.3 1393.0,620.9 1394.2,612.5 1398.4,618.5 1399.9,610.2 1403.8,616.5 1405.6,608.4 1409.3,614.9 1411.4,607.0 1414.8,613.8 1417.2,606.0 1420.4,613.1 1423.1,605.6 1426.0,612.9 1428.9,605.6 1431.6,613.1 1434.8,606.0 1437.2,613.8 1440.6,607.0 1442.7,614.9 1446.4,608.4 1448.2,616.5 1452.1,610.2 1453.6,618.5 1457.8,612.5 1459.0,620.9 1463.3,615.3 1464.3,623.7 1468.8,618.5 1469.4,627.0 1474.1,622.1 1474.4,630.7 1479.3,626.2 1479.3,634.7 1484.3,630.6 1484.1,639.2 1489.2,635.5 1488.6,644.0 1493.9,640.7 1493.0,649.2 1498.4,646.3 1497.3,654.7 1502.7,652.3 1501.3,660.6 1506.8,658.6 1505.1,666.7 1510.7,665.2 1508.6,673.2 1514.3,672.1 1512.0,679.9 1517.7,679.3 1515.1,686.9 1520.8,686.7 1517.9,694.1 1523.6,694.4 1520.5,701.6 1526.2,702.3 1522.8,709.2 1528.4,710.4 1524.8,717.0 1530.4,718.7 1526.6,725.0 1532.1,727.1 1528.0,733.1 1533.5,735.6 1529.2,741.3 1534.6,744.3 1530.1,749.6 1535.4,753.0 1530.7,757.9 1535.8,761.7 1531.0,766.3" fill="#00584c" stroke="#021a18" stroke-width="0.5" stroke-linejoin="round" />
<polygon points="1538.4,770.8 1533.4,774.9 1538.2,779.5 1533.1,783.3 1537.8,788.3 1532.5,791.7 1537.0,797.0 1531.6,799.9 1535.9,805.6 1530.4,808.1 1534.5,814.2 1529.0,816.2 1532.8,822.6 1527.2,824.2 1530.8,830.8 1525.2,832.0 1528.6,838.9 1522.9,839.7 1526.0,846.8 1520.3,847.1 1523.2,854.5 1517.5,854.3 1520.1,862.0 1514.4,861.3 1516.7,869.2 1511.0,868.1 1513.1,876.1 1507.5,874.5 1509.2,882.7 1503.7,880.7 1505.1,889.0 1499.7,886.5 1500.8,894.9 1495.4,892.1 1496.3,900.5 1491.0,897.2 1491.6,905.8 1486.5,902.1 1486.7,910.6 1481.7,906.5 1481.7,915.1 1476.8,910.6 1476.5,919.1 1471.8,914.2 1471.2,922.8 1466.7,917.5 1465.7,926.0 1461.4,920.4 1460.2,928.7 1456.0,922.8 1454.5,931.0 1450.6,924.8 1448.8,932.9 1445.1,926.3 1443.0,934.3 1439.6,927.4 1437.2,935.2 1434.0,928.1 1431.3,935.7 1428.4,928.3 1425.5,935.7 1422.8,928.1 1419.6,935.2 1417.2,927.4 1413.8,934.3 1411.7,926.3 1408.0,932.9 1406.2,924.8 1402.3,931.0 1400.8,922.8 1396.6,928.7 1395.4,920.4 1391.1,926.0 1390.1,917.5 1385.6,922.8 1385.0,914.2 1380.3,919.1 1380.0,910.6 1375.1,915.1 1375.1,906.5 1370.1,910.6 1370.3,902.1 1365.2,905.8 1365.8,897.2 1360.5,900.5 1361.4,892.1 1356.0,894.9 1357.1,886.5 1351.7,889.0 1353.1,880.7 1347.6,882.7 1349.3,874.5 1343.7,876.1 1345.8,868.1 1340.1,869.2 1342.4,861.3 1336.7,862.0 1339.3,854.3 1333.6,854.5 1336.5,847.1 1330.8,846.8 1333.9,839.7 1328.2,838.9 1331.6,832.0 1326.0,830.8 1329.6,824.2 1324.0,822.6 1327.8,816.2 1322.3,814.2 1326.4,808.1 1320.9,805.6 1325.2,799.9 1319.8,797.0 1324.3,791.7 1319.0,788.3 1323.7,783.3 1318.6,779.5 1323.4,774.9 1318.4,770.8 1323.4,766.6 1318.6,762.0 1323.7,758.2 1319.0,753.2 1324.3,749.8 1319.8,744.5 1325.2,741.6 1320.9,735.9 1326.4,733.4 1322.3,727.3 1327.8,725.3 1324.0,718.9 1329.6,717.3 1326.0,710.7 1331.6,709.5 1328.2,702.6 1333.9,701.8 1330.8,694.7 1336.5,694.4 1333.6,687.0 1339.3,687.2 1336.7,679.5 1342.4,680.2 1340.1,672.3 1345.8,673.4 1343.7,665.4 1349.3,667.0 1347.6,658.8 1353.1,660.8 1351.7,652.5 1357.1,655.0 1356.0,646.6 1361.4,649.4 1360.5,641.0 1365.8,644.3 1365.2,635.7 1370.3,639.4 1370.1,630.9 1375.1,635.0 1375.1,626.4 1380.0,630.9 1380.3,622.4 1385.0,627.3 1385.6,618.7 1390.1,624.0 1391.1,615.5 1395.4,621.1 1396.6,612.8 1400.8,618.7 1402.3,610.5 1406.2,616.7 1408.0,608.6 1411.7,615.2 1413.8,607.2 1417.2,614.1 1419.6,606.3 1422.8,613.4 1425.5,605.8 1428.4,613.2 1431.3,605.8 1434.0,613.4 1437.2,606.3 1439.6,614.1 1443.0,607.2 1445.1,615.2 1448.8,608.6 1450.6,616.7 1454.5,610.5 1456.0,618.7 1460.2,612.8 1461.4,621.1 1465.7,615.5 1466.7,624.0 1471.2,618.7 1471.8,627.3 1476.5,622.4 1476.8,630.9 1481.7,626.4 1481.7,635.0 1486.7,630.9 1486.5,639.4 1491.6,635.7 1491.0,644.3 1496.3,641.0 1495.4,649.4 1500.8,646.6 1499.7,655.0 1505.1,652.5 1503.7,660.8 1509.2,658.8 1507.5,667.0 1513.1,665.4 1511.0,673.4 1516.7,672.3 1514.4,680.2 1520.1,679.5 1517.5,687.2 1523.2,687.0 1520.3,694.4 1526.0,694.7 1522.9,701.8 1528.6,702.6 1525.2,709.5 1530.8,710.7 1527.2,717.3 1532.8,718.9 1529.0,725.3 1534.5,727.3 1530.4,733.4 1535.9,735.9 1531.6,741.6 1537.0,744.5 1532.5,749.8 1537.8,753.2 1533.1,758.2 1538.2,762.0 1533.4,766.6" fill="#003c34" stroke="#021a18" stroke-width="0.5" stroke-linejoin="round" />
<polygon points="1540.8,771.0 1535.8,775.2 1540.6,779.8 1535.5,783.6 1540.2,788.5 1534.9,791.9 1539.4,797.2 1534.0,800.2 1538.3,805.9 1532.8,808.4 1536.9,814.4 1531.4,816.5 1535.2,822.8 1529.6,824.5 1533.2,831.1 1527.6,832.3 1531.0,839.2 1525.3,839.9 1528.4,847.1 1522.7,847.4 1525.6,854.8 1519.9,854.6 1522.5,862.2 1516.8,861.6 1519.1,869.4 1513.4,868.3 1515.5,876.3 1509.9,874.8 1511.6,882.9 1506.1,880.9 1507.5,889.2 1502.1,886.8 1503.2,895.2 1497.8,892.3 1498.7,900.8 1493.4,897.5 1494.0,906.0 1488.9,902.3 1489.1,910.9 1484.1,906.8 1484.1,915.3 1479.2,910.8 1478.9,919.4 1474.2,914.5 1473.6,923.0 1469.1,917.8 1468.1,926.2 1463.8,920.6 1462.6,929.0 1458.4,923.0 1456.9,931.3 1453.0,925.0 1451.2,933.1 1447.5,926.6 1445.4,934.5 1442.0,927.7 1439.6,935.5 1436.4,928.4 1433.7,935.9 1430.8,928.6 1427.9,935.9 1425.2,928.4 1422.0,935.5 1419.6,927.7 1416.2,934.5 1414.1,926.6 1410.4,933.1 1408.6,925.0 1404.7,931.3 1403.2,923.0 1399.0,929.0 1397.8,920.6 1393.5,926.2 1392.5,917.8 1388.0,923.0 1387.4,914.5 1382.7,919.4 1382.4,910.8 1377.5,915.3 1377.5,906.8 1372.5,910.9 1372.7,902.3 1367.6,906.0 1368.2,897.5 1362.9,900.8 1363.8,892.3 1358.4,895.2 1359.5,886.8 1354.1,889.2 1355.5,880.9 1350.0,882.9 1351.7,874.8 1346.1,876.3 1348.2,868.3 1342.5,869.4 1344.8,861.6 1339.1,862.2 1341.7,854.6 1336.0,854.8 1338.9,847.4 1333.2,847.1 1336.3,839.9 1330.6,839.2 1334.0,832.3 1328.4,831.1 1332.0,824.5 1326.4,822.8 1330.2,816.5 1324.7,814.4 1328.8,808.4 1323.3,805.9 1327.6,800.2 1322.2,797.2 1326.7,791.9 1321.4,788.5 1326.1,783.6 1321.0,779.8 1325.8,775.2 1320.8,771.0 1325.8,766.8 1321.0,762.2 1326.1,758.4 1321.4,753.5 1326.7,750.1 1322.2,744.8 1327.6,741.8 1323.3,736.1 1328.8,733.6 1324.7,727.6 1330.2,725.5 1326.4,719.2 1332.0,717.5 1328.4,710.9 1334.0,709.7 1330.6,702.8 1336.3,702.1 1333.2,694.9 1338.9,694.6 1336.0,687.2 1341.7,687.4 1339.1,679.8 1344.8,680.4 1342.5,672.6 1348.2,673.7 1346.1,665.7 1351.7,667.2 1350.0,659.1 1355.5,661.1 1354.1,652.8 1359.5,655.2 1358.4,646.8 1363.8,649.7 1362.9,641.2 1368.2,644.5 1367.6,636.0 1372.7,639.7 1372.5,631.1 1377.5,635.2 1377.5,626.7 1382.4,631.2 1382.7,622.6 1387.4,627.5 1388.0,619.0 1392.5,624.2 1393.5,615.8 1397.8,621.4 1399.0,613.0 1403.2,619.0 1404.7,610.7 1408.6,617.0 1410.4,608.9 1414.1,615.4 1416.2,607.5 1419.6,614.3 1422.0,606.5 1425.2,613.6 1427.9,606.1 1430.8,613.4 1433.7,606.1 1436.4,613.6 1439.6,606.5 1442.0,614.3 1445.4,607.5 1447.5,615.4 1451.2,608.9 1453.0,617.0 1456.9,610.7 1458.4,619.0 1462.6,613.0 1463.8,621.4 1468.1,615.8 1469.1,624.2 1473.6,619.0 1474.2,627.5 1478.9,622.6 1479.2,631.2 1484.1,626.7 1484.1,635.2 1489.1,631.1 1488.9,639.7 1494.0,636.0 1493.4,644.5 1498.7,641.2 1497.8,649.7 1503.2,646.8 1502.1,655.2 1507.5,652.8 1506.1,661.1 1511.6,659.1 1509.9,667.2 1515.5,665.7 1513.4,673.7 1519.1,672.6 1516.8,680.4 1522.5,679.8 1519.9,687.4 1525.6,687.2 1522.7,694.6 1528.4,694.9 1525.3,702.1 1531.0,702.8 1527.6,709.7 1533.2,710.9 1529.6,717.5 1535.2,719.2 1531.4,725.5 1536.9,727.6 1532.8,733.6 1538.3,736.1 1534.0,741.8 1539.4,744.8 1534.9,750.1 1540.2,753.5 1535.5,758.4 1540.6,762.2 1535.8,766.8" fill="#00584c" stroke="#021a18" stroke-width="0.5" stroke-linejoin="round" />
<polygon points="1543.2,771.2 1538.2,775.4 1543.0,780.0 1537.9,783.8 1542.6,788.8 1537.3,792.2 1541.8,797.5 1536.4,800.4 1540.7,806.1 1535.2,808.6 1539.3,814.7 1533.8,816.7 1537.6,823.1 1532.0,824.7 1535.6,831.3 1530.0,832.5 1533.4,839.4 1527.7,840.2 1530.8,847.3 1525.1,847.6 1528.0,855.0 1522.3,854.8 1524.9,862.5 1519.2,861.8 1521.5,869.7 1515.8,868.6 1517.9,876.6 1512.3,875.0 1514.0,883.2 1508.5,881.2 1509.9,889.5 1504.5,887.0 1505.6,895.4 1500.2,892.6 1501.1,901.0 1495.8,897.7 1496.4,906.3 1491.3,902.6 1491.5,911.1 1486.5,907.0 1486.5,915.6 1481.6,911.1 1481.3,919.6 1476.6,914.7 1476.0,923.3 1471.5,918.0 1470.5,926.5 1466.2,920.9 1465.0,929.2 1460.8,923.3 1459.3,931.5 1455.4,925.3 1453.6,933.4 1449.9,926.8 1447.8,934.8 1444.4,927.9 1442.0,935.7 1438.8,928.6 1436.1,936.2 1433.2,928.8 1430.3,936.2 1427.6,928.6 1424.4,935.7 1422.0,927.9 1418.6,934.8 1416.5,926.8 1412.8,933.4 1411.0,925.3 1407.1,931.5 1405.6,923.3 1401.4,929.2 1400.2,920.9 1395.9,926.5 1394.9,918.0 1390.4,923.3 1389.8,914.7 1385.1,919.6 1384.8,911.1 1379.9,915.6 1379.9,907.0 1374.9,911.1 1375.1,902.6 1370.0,906.3 1370.6,897.7 1365.3,901.0 1366.2,892.6 1360.8,895.4 1361.9,887.0 1356.5,889.5 1357.9,881.2 1352.4,883.2 1354.1,875.0 1348.5,876.6 1350.6,868.6 1344.9,869.7 1347.2,861.8 1341.5,862.5 1344.1,854.8 1338.4,855.0 1341.3,847.6 1335.6,847.3 1338.7,840.2 1333.0,839.4 1336.4,832.5 1330.8,831.3 1334.4,824.7 1328.8,823.1 1332.6,816.7 1327.1,814.7 1331.2,808.6 1325.7,806.1 1330.0,800.4 1324.6,797.5 1329.1,792.2 1323.8,788.8 1328.5,783.8 1323.4,780.0 1328.2,775.4 1323.2,771.2 1328.2,767.1 1323.4,762.5 1328.5,758.7 1323.8,753.7 1329.1,750.3 1324.6,745.0 1330.0,742.1 1325.7,736.4 1331.2,733.9 1327.1,727.8 1332.6,725.8 1328.8,719.4 1334.4,717.8 1330.8,711.2 1336.4,710.0 1333.0,703.1 1338.7,702.3 1335.6,695.2 1341.3,694.9 1338.4,687.5 1344.1,687.7 1341.5,680.0 1347.2,680.7 1344.9,672.8 1350.6,673.9 1348.5,665.9 1354.1,667.5 1352.4,659.3 1357.9,661.3 1356.5,653.0 1361.9,655.5 1360.8,647.1 1366.2,649.9 1365.3,641.5 1370.6,644.8 1370.0,636.2 1375.1,639.9 1374.9,631.4 1379.9,635.5 1379.9,626.9 1384.8,631.4 1385.1,622.9 1389.8,627.8 1390.4,619.2 1394.9,624.5 1395.9,616.0 1400.2,621.6 1401.4,613.3 1405.6,619.2 1407.1,611.0 1411.0,617.2 1412.8,609.1 1416.5,615.7 1418.6,607.7 1422.0,614.6 1424.4,606.8 1427.6,613.9 1430.3,606.3 1433.2,613.7 1436.1,606.3 1438.8,613.9 1442.0,606.8 1444.4,614.6 1447.8,607.7 1449.9,615.7 1453.6,609.1 1455.4,617.2 1459.3,611.0 1460.8,619.2 1465.0,613.3 1466.2,621.6 1470.5,616.0 1471.5,624.5 1476.0,619.2 1476.6,627.8 1481.3,622.9 1481.6,631.4 1486.5,626.9 1486.5,635.5 1491.5,631.4 1491.3,639.9 1496.4,636.2 1495.8,644.8 1501.1,641.5 1500.2,649.9 1505.6,647.1 1504.5,655.5 1509.9,653.0 1508.5,661.3 1514.0,659.3 1512.3,667.5 1517.9,665.9 1515.8,673.9 1521.5,672.8 1519.2,680.7 1524.9,680.0 1522.3,687.7 1528.0,687.5 1525.1,694.9 1530.8,695.2 1527.7,702.3 1533.4,703.1 1530.0,710.0 1535.6,711.2 1532.0,717.8 1537.6,719.4 1533.8,725.8 1539.3,727.8 1535.2,733.9 1540.7,736.4 1536.4,742.1 1541.8,745.0 1537.3,750.3 1542.6,753.7 1537.9,758.7 1543.0,762.5 1538.2,767.1" fill="#003c34" stroke="#021a18" stroke-width="0.5" stroke-linejoin="round" />
<polygon points="1545.6,771.5 1540.6,775.7 1545.4,780.3 1540.3,784.1 1545.0,789.0 1539.7,792.4 1544.2,797.7 1538.8,800.7 1543.1,806.4 1537.6,808.9 1541.7,814.9 1536.2,817.0 1540.0,823.3 1534.4,825.0 1538.0,831.6 1532.4,832.8 1535.8,839.7 1530.1,840.4 1533.2,847.6 1527.5,847.9 1530.4,855.3 1524.7,855.1 1527.3,862.7 1521.6,862.1 1523.9,869.9 1518.2,868.8 1520.3,876.8 1514.7,875.3 1516.4,883.4 1510.9,881.4 1512.3,889.7 1506.9,887.3 1508.0,895.7 1502.6,892.8 1503.5,901.3 1498.2,898.0 1498.8,906.5 1493.7,902.8 1493.9,911.4 1488.9,907.3 1488.9,915.8 1484.0,911.3 1483.7,919.9 1479.0,915.0 1478.4,923.5 1473.9,918.3 1472.9,926.7 1468.6,921.1 1467.4,929.5 1463.2,923.5 1461.7,931.8 1457.8,925.5 1456.0,933.6 1452.3,927.1 1450.2,935.0 1446.8,928.2 1444.4,936.0 1441.2,928.9 1438.5,936.4 1435.6,929.1 1432.7,936.4 1430.0,928.9 1426.8,936.0 1424.4,928.2 1421.0,935.0 1418.9,927.1 1415.2,933.6 1413.4,925.5 1409.5,931.8 1408.0,923.5 1403.8,929.5 1402.6,921.1 1398.3,926.7 1397.3,918.3 1392.8,923.5 1392.2,915.0 1387.5,919.9 1387.2,911.3 1382.3,915.8 1382.3,907.3 1377.3,911.4 1377.5,902.8 1372.4,906.5 1373.0,898.0 1367.7,901.3 1368.6,892.8 1363.2,895.7 1364.3,887.3 1358.9,889.7 1360.3,881.4 1354.8,883.4 1356.5,875.3 1350.9,876.8 1353.0,868.8 1347.3,869.9 1349.6,862.1 1343.9,862.7 1346.5,855.1 1340.8,855.3 1343.7,847.9 1338.0,847.6 1341.1,840.4 1335.4,839.7 1338.8,832.8 1333.2,831.6 1336.8,825.0 1331.2,823.3 1335.0,817.0 1329.5,814.9 1333.6,808.9 1328.1,806.4 1332.4,800.7 1327.0,797.7 1331.5,792.4 1326.2,789.0 1330.9,784.1 1325.8,780.3 1330.6,775.7 1325.6,771.5 1330.6,767.3 1325.8,762.7 1330.9,758.9 1326.2,754.0 1331.5,750.6 1327.0,745.3 1332.4,742.3 1328.1,736.6 1333.6,734.1 1329.5,728.1 1335.0,726.0 1331.2,719.7 1336.8,718.0 1333.2,711.4 1338.8,710.2 1335.4,703.3 1341.1,702.6 1338.0,695.4 1343.7,695.1 1340.8,687.7 1346.5,687.9 1343.9,680.3 1349.6,680.9 1347.3,673.1 1353.0,674.2 1350.9,666.2 1356.5,667.7 1354.8,659.6 1360.3,661.6 1358.9,653.3 1364.3,655.7 1363.2,647.3 1368.6,650.2 1367.7,641.7 1373.0,645.0 1372.4,636.5 1377.5,640.2 1377.3,631.6 1382.3,635.7 1382.3,627.2 1387.2,631.7 1387.5,623.1 1392.2,628.0 1392.8,619.5 1397.3,624.7 1398.3,616.3 1402.6,621.9 1403.8,613.5 1408.0,619.5 1409.5,611.2 1413.4,617.5 1415.2,609.4 1418.9,615.9 1421.0,608.0 1424.4,614.8 1426.8,607.0 1430.0,614.1 1432.7,606.6 1435.6,613.9 1438.5,606.6 1441.2,614.1 1444.4,607.0 1446.8,614.8 1450.2,608.0 1452.3,615.9 1456.0,609.4 1457.8,617.5 1461.7,611.2 1463.2,619.5 1467.4,613.5 1468.6,621.9 1472.9,616.3 1473.9,624.7 1478.4,619.5 1479.0,628.0 1483.7,623.1 1484.0,631.7 1488.9,627.2 1488.9,635.7 1493.9,631.6 1493.7,640.2 1498.8,636.5 1498.2,645.0 1503.5,641.7 1502.6,650.2 1508.0,647.3 1506.9,655.7 1512.3,653.3 1510.9,661.6 1516.4,659.6 1514.7,667.7 1520.3,666.2 1518.2,674.2 1523.9,673.1 1521.6,680.9 1527.3,680.3 1524.7,687.9 1530.4,687.7 1527.5,695.1 1533.2,695.4 1530.1,702.6 1535.8,703.3 1532.4,710.2 1538.0,711.4 1534.4,718.0 1540.0,719.7 1536.2,726.0 1541.7,728.1 1537.6,734.1 1543.1,736.6 1538.8,742.3 1544.2,745.3 1539.7,750.6 1545.0,754.0 1540.3,758.9 1545.4,762.7 1540.6,767.3" fill="#00584c" stroke="#021a18" stroke-width="0.5" stroke-linejoin="round" />
<polygon points="1548.0,771.8 1543.0,775.9 1547.8,780.5 1542.7,784.3 1547.4,789.3 1542.1,792.7 1546.6,798.0 1541.2,800.9 1545.5,806.6 1540.0,809.1 1544.1,815.2 1538.6,817.2 1542.4,823.6 1536.8,825.2 1540.4,831.8 1534.8,833.0 1538.2,839.9 1532.5,840.7 1535.6,847.8 1529.9,848.1 1532.8,855.5 1527.1,855.3 1529.7,863.0 1524.0,862.3 1526.3,870.2 1520.6,869.1 1522.7,877.1 1517.1,875.5 1518.8,883.7 1513.3,881.7 1514.7,890.0 1509.3,887.5 1510.4,895.9 1505.0,893.1 1505.9,901.5 1500.6,898.2 1501.2,906.8 1496.1,903.1 1496.3,911.6 1491.3,907.5 1491.3,916.1 1486.4,911.6 1486.1,920.1 1481.4,915.2 1480.8,923.8 1476.3,918.5 1475.3,927.0 1471.0,921.4 1469.8,929.7 1465.6,923.8 1464.1,932.0 1460.2,925.8 1458.4,933.9 1454.7,927.3 1452.6,935.3 1449.2,928.4 1446.8,936.2 1443.6,929.1 1440.9,936.7 1438.0,929.3 1435.1,936.7 1432.4,929.1 1429.2,936.2 1426.8,928.4 1423.4,935.3 1421.3,927.3 1417.6,933.9 1415.8,925.8 1411.9,932.0 1410.4,923.8 1406.2,929.7 1405.0,921.4 1400.7,927.0 1399.7,918.5 1395.2,923.8 1394.6,915.2 1389.9,920.1 1389.6,911.6 1384.7,916.1 1384.7,907.5 1379.7,911.6 1379.9,903.1 1374.8,906.8 1375.4,898.2 1370.1,901.5 1371.0,893.1 1365.6,895.9 1366.7,887.5 1361.3,890.0 1362.7,881.7 1357.2,883.7 1358.9,875.5 1353.3,877.1 1355.4,869.1 1349.7,870.2 1352.0,862.3 1346.3,863.0 1348.9,855.3 1343.2,855.5 1346.1,848.1 1340.4,847.8 1343.5,840.7 1337.8,839.9 1341.2,833.0 1335.6,831.8 1339.2,825.2 1333.6,823.6 1337.4,817.2 1331.9,815.2 1336.0,809.1 1330.5,806.6 1334.8,800.9 1329.4,798.0 1333.9,792.7 1328.6,789.3 1333.3,784.3 1328.2,780.5 1333.0,775.9 1328.0,771.8 1333.0,767.6 1328.2,763.0 1333.3,759.2 1328.6,754.2 1333.9,750.8 1329.4,745.5 1334.8,742.6 1330.5,736.9 1336.0,734.4 1331.9,728.3 1337.4,726.3 1333.6,719.9 1339.2,718.3 1335.6,711.7 1341.2,710.5 1337.8,703.6 1343.5,702.8 1340.4,695.7 1346.1,695.4 1343.2,688.0 1348.9,688.2 1346.3,680.5 1352.0,681.2 1349.7,673.3 1355.4,674.4 1353.3,666.4 1358.9,668.0 1357.2,659.8 1362.7,661.8 1361.3,653.5 1366.7,656.0 1365.6,647.6 1371.0,650.4 1370.1,642.0 1375.4,645.3 1374.8,636.7 1379.9,640.4 1379.7,631.9 1384.7,636.0 1384.7,627.4 1389.6,631.9 1389.9,623.4 1394.6,628.3 1395.2,619.7 1399.7,625.0 1400.7,616.5 1405.0,622.1 1406.2,613.8 1410.4,619.7 1411.9,611.5 1415.8,617.7 1417.6,609.6 1421.3,616.2 1423.4,608.2 1426.8,615.1 1429.2,607.3 1432.4,614.4 1435.1,606.8 1438.0,614.2 1440.9,606.8 1443.6,614.4 1446.8,607.3 1449.2,615.1 1452.6,608.2 1454.7,616.2 1458.4,609.6 1460.2,617.7 1464.1,611.5 1465.6,619.7 1469.8,613.8 1471.0,622.1 1475.3,616.5 1476.3,625.0 1480.8,619.7 1481.4,628.3 1486.1,623.4 1486.4,631.9 1491.3,627.4 1491.3,636.0 1496.3,631.9 1496.1,640.4 1501.2,636.7 1500.6,645.3 1505.9,642.0 1505.0,650.4 1510.4,647.6 1509.3,656.0 1514.7,653.5 1513.3,661.8 1518.8,659.8 1517.1,668.0 1522.7,666.4 1520.6,674.4 1526.3,673.3 1524.0,681.2 1529.7,680.5 1527.1,688.2 1532.8,688.0 1529.9,695.4 1535.6,695.7 1532.5,702.8 1538.2,703.6 1534.8,710.5 1540.4,711.7 1536.8,718.3 1542.4,719.9 1538.6,726.3 1544.1,728.3 1540.0,734.4 1545.5,736.9 1541.2,742.6 1546.6,745.5 1542.1,750.8 1547.4,754.2 1542.7,759.2 1547.8,763.0 1543.0,767.6" fill="#003c34" stroke="#021a18" stroke-width="0.5" stroke-linejoin="round" />
<polygon points="1550.4,772.0 1545.4,776.2 1550.2,780.8 1545.1,784.6 1549.8,789.5 1544.5,792.9 1549.0,798.2 1543.6,801.2 1547.9,806.9 1542.4,809.4 1546.5,815.4 1541.0,817.5 1544.8,823.8 1539.2,825.5 1542.8,832.1 1537.2,833.3 1540.6,840.2 1534.9,840.9 1538.0,848.1 1532.3,848.4 1535.2,855.8 1529.5,855.6 1532.1,863.2 1526.4,862.6 1528.7,870.4 1523.0,869.3 1525.1,877.3 1519.5,875.8 1521.2,883.9 1515.7,881.9 1517.1,890.2 1511.7,887.8 1512.8,896.2 1507.4,893.3 1508.3,901.8 1503.0,898.5 1503.6,907.0 1498.5,903.3 1498.7,911.9 1493.7,907.8 1493.7,916.3 1488.8,911.8 1488.5,920.4 1483.8,915.5 1483.2,924.0 1478.7,918.8 1477.7,927.2 1473.4,921.6 1472.2,930.0 1468.0,924.0 1466.5,932.3 1462.6,926.0 1460.8,934.1 1457.1,927.6 1455.0,935.5 1451.6,928.7 1449.2,936.5 1446.0,929.4 1443.3,936.9 1440.4,929.6 1437.5,936.9 1434.8,929.4 1431.6,936.5 1429.2,928.7 1425.8,935.5 1423.7,927.6 1420.0,934.1 1418.2,926.0 1414.3,932.3 1412.8,924.0 1408.6,930.0 1407.4,921.6 1403.1,927.2 1402.1,918.8 1397.6,924.0 1397.0,915.5 1392.3,920.4 1392.0,911.8 1387.1,916.3 1387.1,907.8 1382.1,911.9 1382.3,903.3 1377.2,907.0 1377.8,898.5 1372.5,901.8 1373.4,893.3 1368.0,896.2 1369.1,887.8 1363.7,890.2 1365.1,881.9 1359.6,883.9 1361.3,875.8 1355.7,877.3 1357.8,869.3 1352.1,870.4 1354.4,862.6 1348.7,863.2 1351.3,855.6 1345.6,855.8 1348.5,848.4 1342.8,848.1 1345.9,840.9 1340.2,840.2 1343.6,833.3 1338.0,832.1 1341.6,825.5 1336.0,823.8 1339.8,817.5 1334.3,815.4 1338.4,809.4 1332.9,806.9 1337.2,801.2 1331.8,798.2 1336.3,792.9 1331.0,789.5 1335.7,784.6 1330.6,780.8 1335.4,776.2 1330.4,772.0 1335.4,767.8 1330.6,763.2 1335.7,759.4 1331.0,754.5 1336.3,751.1 1331.8,745.8 1337.2,742.8 1332.9,737.1 1338.4,734.6 1334.3,728.6 1339.8,726.5 1336.0,720.2 1341.6,718.5 1338.0,711.9 1343.6,710.7 1340.2,703.8 1345.9,703.1 1342.8,695.9 1348.5,695.6 1345.6,688.2 1351.3,688.4 1348.7,680.8 1354.4,681.4 1352.1,673.6 1357.8,674.7 1355.7,666.7 1361.3,668.2 1359.6,660.1 1365.1,662.1 1363.7,653.8 1369.1,656.2 1368.0,647.8 1373.4,650.7 1372.5,642.2 1377.8,645.5 1377.2,637.0 1382.3,640.7 1382.1,632.1 1387.1,636.2 1387.1,627.7 1392.0,632.2 1392.3,623.6 1397.0,628.5 1397.6,620.0 1402.1,625.2 1403.1,616.8 1407.4,622.4 1408.6,614.0 1412.8,620.0 1414.3,611.7 1418.2,618.0 1420.0,609.9 1423.7,616.4 1425.8,608.5 1429.2,615.3 1431.6,607.5 1434.8,614.6 1437.5,607.1 1440.4,614.4 1443.3,607.1 1446.0,614.6 1449.2,607.5 1451.6,615.3 1455.0,608.5 1457.1,616.4 1460.8,609.9 1462.6,618.0 1466.5,611.7 1468.0,620.0 1472.2,614.0 1473.4,622.4 1477.7,616.8 1478.7,625.2 1483.2,620.0 1483.8,628.5 1488.5,623.6 1488.8,632.2 1493.7,627.7 1493.7,636.2 1498.7,632.1 1498.5,640.7 1503.6,637.0 1503.0,645.5 1508.3,642.2 1507.4,650.7 1512.8,647.8 1511.7,656.2 1517.1,653.8 1515.7,662.1 1521.2,660.1 1519.5,668.2 1525.1,666.7 1523.0,674.7 1528.7,673.6 1526.4,681.4 1532.1,680.8 1529.5,688.4 1535.2,688.2 1532.3,695.6 1538.0,695.9 1534.9,703.1 1540.6,703.8 1537.2,710.7 1542.8,711.9 1539.2,718.5 1544.8,720.2 1541.0,726.5 1546.5,728.6 1542.4,734.6 1547.9,737.1 1543.6,742.8 1549.0,745.8 1544.5,751.1 1549.8,754.5 1545.1,759.4 1550.2,763.2 1545.4,767.8" fill="#00584c" stroke="#021a18" stroke-width="0.5" stroke-linejoin="round" />
<polygon points="1552.8,772.2 1547.8,776.4 1552.6,781.0 1547.5,784.8 1552.2,789.8 1546.9,793.2 1551.4,798.5 1546.0,801.4 1550.3,807.1 1544.8,809.6 1548.9,815.7 1543.4,817.7 1547.2,824.1 1541.6,825.7 1545.2,832.3 1539.6,833.5 1543.0,840.4 1537.3,841.2 1540.4,848.3 1534.7,848.6 1537.6,856.0 1531.9,855.8 1534.5,863.5 1528.8,862.8 1531.1,870.7 1525.4,869.6 1527.5,877.6 1521.9,876.0 1523.6,884.2 1518.1,882.2 1519.5,890.5 1514.1,888.0 1515.2,896.4 1509.8,893.6 1510.7,902.0 1505.4,898.7 1506.0,907.3 1500.9,903.6 1501.1,912.1 1496.1,908.0 1496.1,916.6 1491.2,912.1 1490.9,920.6 1486.2,915.7 1485.6,924.3 1481.1,919.0 1480.1,927.5 1475.8,921.9 1474.6,930.2 1470.4,924.3 1468.9,932.5 1465.0,926.3 1463.2,934.4 1459.5,927.8 1457.4,935.8 1454.0,928.9 1451.6,936.7 1448.4,929.6 1445.7,937.2 1442.8,929.8 1439.9,937.2 1437.2,929.6 1434.0,936.7 1431.6,928.9 1428.2,935.8 1426.1,927.8 1422.4,934.4 1420.6,926.3 1416.7,932.5 1415.2,924.3 1411.0,930.2 1409.8,921.9 1405.5,927.5 1404.5,919.0 1400.0,924.3 1399.4,915.7 1394.7,920.6 1394.4,912.1 1389.5,916.6 1389.5,908.0 1384.5,912.1 1384.7,903.6 1379.6,907.3 1380.2,898.7 1374.9,902.0 1375.8,893.6 1370.4,896.4 1371.5,888.0 1366.1,890.5 1367.5,882.2 1362.0,884.2 1363.7,876.0 1358.1,877.6 1360.2,869.6 1354.5,870.7 1356.8,862.8 1351.1,863.5 1353.7,855.8 1348.0,856.0 1350.9,848.6 1345.2,848.3 1348.3,841.2 1342.6,840.4 1346.0,833.5 1340.4,832.3 1344.0,825.7 1338.4,824.1 1342.2,817.7 1336.7,815.7 1340.8,809.6 1335.3,807.1 1339.6,801.4 1334.2,798.5 1338.7,793.2 1333.4,789.8 1338.1,784.8 1333.0,781.0 1337.8,776.4 1332.8,772.2 1337.8,768.1 1333.0,763.5 1338.1,759.7 1333.4,754.7 1338.7,751.3 1334.2,746.0 1339.6,743.1 1335.3,737.4 1340.8,734.9 1336.7,728.8 1342.2,726.8 1338.4,720.4 1344.0,718.8 1340.4,712.2 1346.0,711.0 1342.6,704.1 1348.3,703.3 1345.2,696.2 1350.9,695.9 1348.0,688.5 1353.7,688.7 1351.1,681.0 1356.8,681.7 1354.5,673.8 1360.2,674.9 1358.1,666.9 1363.7,668.5 1362.0,660.3 1367.5,662.3 1366.1,654.0 1371.5,656.5 1370.4,648.1 1375.8,650.9 1374.9,642.5 1380.2,645.8 1379.6,637.2 1384.7,640.9 1384.5,632.4 1389.5,636.5 1389.5,627.9 1394.4,632.4 1394.7,623.9 1399.4,628.8 1400.0,620.2 1404.5,625.5 1405.5,617.0 1409.8,622.6 1411.0,614.3 1415.2,620.2 1416.7,612.0 1420.6,618.2 1422.4,610.1 1426.1,616.7 1428.2,608.7 1431.6,615.6 1434.0,607.8 1437.2,614.9 1439.9,607.3 1442.8,614.7 1445.7,607.3 1448.4,614.9 1451.6,607.8 1454.0,615.6 1457.4,608.7 1459.5,616.7 1463.2,610.1 1465.0,618.2 1468.9,612.0 1470.4,620.2 1474.6,614.3 1475.8,622.6 1480.1,617.0 1481.1,625.5 1485.6,620.2 1486.2,628.8 1490.9,623.9 1491.2,632.4 1496.1,627.9 1496.1,636.5 1501.1,632.4 1500.9,640.9 1506.0,637.2 1505.4,645.8 1510.7,642.5 1509.8,650.9 1515.2,648.1 1514.1,656.5 1519.5,654.0 1518.1,662.3 1523.6,660.3 1521.9,668.5 1527.5,666.9 1525.4,674.9 1531.1,673.8 1528.8,681.7 1534.5,681.0 1531.9,688.7 1537.6,688.5 1534.7,695.9 1540.4,696.2 1537.3,703.3 1543.0,704.1 1539.6,711.0 1545.2,712.2 1541.6,718.8 1547.2,720.4 1543.4,726.8 1548.9,728.8 1544.8,734.9 1550.3,737.4 1546.0,743.1 1551.4,746.0 1546.9,751.3 1552.2,754.7 1547.5,759.7 1552.6,763.5 1547.8,768.1" fill="#003c34" stroke="#021a18" stroke-width="0.5" stroke-linejoin="round" />
<polygon points="1555.2,772.5 1550.2,776.7 1555.0,781.3 1549.9,785.1 1554.6,790.0 1549.3,793.4 1553.8,798.7 1548.4,801.7 1552.7,807.4 1547.2,809.9 1551.3,815.9 1545.8,818.0 1549.6,824.3 1544.0,826.0 1547.6,832.6 1542.0,833.8 1545.4,840.7 1539.7,841.4 1542.8,848.6 1537.1,848.9 1540.0,856.3 1534.3,856.1 1536.9,863.7 1531.2,863.1 1533.5,870.9 1527.8,869.8 1529.9,877.8 1524.3,876.3 1526.0,884.4 1520.5,882.4 1521.9,890.7 1516.5,888.3 1517.6,896.7 1512.2,893.8 1513.1,902.3 1507.8,899.0 1508.4,907.5 1503.3,903.8 1503.5,912.4 1498.5,908.3 1498.5,916.8 1493.6,912.3 1493.3,920.9 1488.6,916.0 1488.0,924.5 1483.5,919.3 1482.5,927.7 1478.2,922.1 1477.0,930.5 1472.8,924.5 1471.3,932.8 1467.4,926.5 1465.6,934.6 1461.9,928.1 1459.8,936.0 1456.4,929.2 1454.0,937.0 1450.8,929.9 1448.1,937.4 1445.2,930.1 1442.3,937.4 1439.6,929.9 1436.4,937.0 1434.0,929.2 1430.6,936.0 1428.5,928.1 1424.8,934.6 1423.0,926.5 1419.1,932.8 1417.6,924.5 1413.4,930.5 1412.2,922.1 1407.9,927.7 1406.9,919.3 1402.4,924.5 1401.8,916.0 1397.1,920.9 1396.8,912.3 1391.9,916.8 1391.9,908.3 1386.9,912.4 1387.1,903.8 1382.0,907.5 1382.6,899.0 1377.3,902.3 1378.2,893.8 1372.8,896.7 1373.9,888.3 1368.5,890.7 1369.9,882.4 1364.4,884.4 1366.1,876.3 1360.5,877.8 1362.6,869.8 1356.9,870.9 1359.2,863.1 1353.5,863.7 1356.1,856.1 1350.4,856.3 1353.3,848.9 1347.6,848.6 1350.7,841.4 1345.0,840.7 1348.4,833.8 1342.8,832.6 1346.4,826.0 1340.8,824.3 1344.6,818.0 1339.1,815.9 1343.2,809.9 1337.7,807.4 1342.0,801.7 1336.6,798.7 1341.1,793.4 1335.8,790.0 1340.5,785.1 1335.4,781.3 1340.2,776.7 1335.2,772.5 1340.2,768.3 1335.4,763.7 1340.5,759.9 1335.8,755.0 1341.1,751.6 1336.6,746.3 1342.0,743.3 1337.7,737.6 1343.2,735.1 1339.1,729.1 1344.6,727.0 1340.8,720.7 1346.4,719.0 1342.8,712.4 1348.4,711.2 1345.0,704.3 1350.7,703.6 1347.6,696.4 1353.3,696.1 1350.4,688.7 1356.1,688.9 1353.5,681.3 1359.2,681.9 1356.9,674.1 1362.6,675.2 1360.5,667.2 1366.1,668.7 1364.4,660.6 1369.9,662.6 1368.5,654.3 1373.9,656.7 1372.8,648.3 1378.2,651.2 1377.3,642.7 1382.6,646.0 1382.0,637.5 1387.1,641.2 1386.9,632.6 1391.9,636.7 1391.9,628.2 1396.8,632.7 1397.1,624.1 1401.8,629.0 1402.4,620.5 1406.9,625.7 1407.9,617.3 1412.2,622.9 1413.4,614.5 1417.6,620.5 1419.1,612.2 1423.0,618.5 1424.8,610.4 1428.5,616.9 1430.6,609.0 1434.0,615.8 1436.4,608.0 1439.6,615.1 1442.3,607.6 1445.2,614.9 1448.1,607.6 1450.8,615.1 1454.0,608.0 1456.4,615.8 1459.8,609.0 1461.9,616.9 1465.6,610.4 1467.4,618.5 1471.3,612.2 1472.8,620.5 1477.0,614.5 1478.2,622.9 1482.5,617.3 1483.5,625.7 1488.0,620.5 1488.6,629.0 1493.3,624.1 1493.6,632.7 1498.5,628.2 1498.5,636.7 1503.5,632.6 1503.3,641.2 1508.4,637.5 1507.8,646.0 1513.1,642.7 1512.2,651.2 1517.6,648.3 1516.5,656.7 1521.9,654.3 1520.5,662.6 1526.0,660.6 1524.3,668.7 1529.9,667.2 1527.8,675.2 1533.5,674.1 1531.2,681.9 1536.9,681.3 1534.3,688.9 1540.0,688.7 1537.1,696.1 1542.8,696.4 1539.7,703.6 1545.4,704.3 1542.0,711.2 1547.6,712.4 1544.0,719.0 1549.6,720.7 1545.8,727.0 1551.3,729.1 1547.2,735.1 1552.7,737.6 1548.4,743.3 1553.8,746.3 1549.3,751.6 1554.6,755.0 1549.9,759.9 1555.0,763.7 1550.2,768.3" fill="#00584c" stroke="#021a18" stroke-width="0.5" stroke-linejoin="round" />
<polygon points="1557.6,772.8 1552.6,776.9 1557.4,781.5 1552.3,785.3 1557.0,790.3 1551.7,793.7 1556.2,799.0 1550.8,801.9 1555.1,807.6 1549.6,810.1 1553.7,816.2 1548.2,818.2 1552.0,824.6 1546.4,826.2 1550.0,832.8 1544.4,834.0 1547.8,840.9 1542.1,841.7 1545.2,848.8 1539.5,849.1 1542.4,856.5 1536.7,856.3 1539.3,864.0 1533.6,863.3 1535.9,871.2 1530.2,870.1 1532.3,878.1 1526.7,876.5 1528.4,884.7 1522.9,882.7 1524.3,891.0 1518.9,888.5 1520.0,896.9 1514.6,894.1 1515.5,902.5 1510.2,899.2 1510.8,907.8 1505.7,904.1 1505.9,912.6 1500.9,908.5 1500.9,917.1 1496.0,912.6 1495.7,921.1 1491.0,916.2 1490.4,924.8 1485.9,919.5 1484.9,928.0 1480.6,922.4 1479.4,930.7 1475.2,924.8 1473.7,933.0 1469.8,926.8 1468.0,934.9 1464.3,928.3 1462.2,936.3 1458.8,929.4 1456.4,937.2 1453.2,930.1 1450.5,937.7 1447.6,930.3 1444.7,937.7 1442.0,930.1 1438.8,937.2 1436.4,929.4 1433.0,936.3 1430.9,928.3 1427.2,934.9 1425.4,926.8 1421.5,933.0 1420.0,924.8 1415.8,930.7 1414.6,922.4 1410.3,928.0 1409.3,919.5 1404.8,924.8 1404.2,916.2 1399.5,921.1 1399.2,912.6 1394.3,917.1 1394.3,908.5 1389.3,912.6 1389.5,904.1 1384.4,907.8 1385.0,899.2 1379.7,902.5 1380.6,894.1 1375.2,896.9 1376.3,888.5 1370.9,891.0 1372.3,882.7 1366.8,884.7 1368.5,876.5 1362.9,878.1 1365.0,870.1 1359.3,871.2 1361.6,863.3 1355.9,864.0 1358.5,856.3 1352.8,856.5 1355.7,849.1 1350.0,848.8 1353.1,841.7 1347.4,840.9 1350.8,834.0 1345.2,832.8 1348.8,826.2 1343.2,824.6 1347.0,818.2 1341.5,816.2 1345.6,810.1 1340.1,807.6 1344.4,801.9 1339.0,799.0 1343.5,793.7 1338.2,790.3 1342.9,785.3 1337.8,781.5 1342.6,776.9 1337.6,772.8 1342.6,768.6 1337.8,764.0 1342.9,760.2 1338.2,755.2 1343.5,751.8 1339.0,746.5 1344.4,743.6 1340.1,737.9 1345.6,735.4 1341.5,729.3 1347.0,727.3 1343.2,720.9 1348.8,719.3 1345.2,712.7 1350.8,711.5 1347.4,704.6 1353.1,703.8 1350.0,696.7 1355.7,696.4 1352.8,689.0 1358.5,689.2 1355.9,681.5 1361.6,682.2 1359.3,674.3 1365.0,675.4 1362.9,667.4 1368.5,669.0 1366.8,660.8 1372.3,662.8 1370.9,654.5 1376.3,657.0 1375.2,648.6 1380.6,651.4 1379.7,643.0 1385.0,646.3 1384.4,637.7 1389.5,641.4 1389.3,632.9 1394.3,637.0 1394.3,628.4 1399.2,632.9 1399.5,624.4 1404.2,629.3 1404.8,620.7 1409.3,626.0 1410.3,617.5 1414.6,623.1 1415.8,614.8 1420.0,620.7 1421.5,612.5 1425.4,618.7 1427.2,610.6 1430.9,617.2 1433.0,609.2 1436.4,616.1 1438.8,608.3 1442.0,615.4 1444.7,607.8 1447.6,615.2 1450.5,607.8 1453.2,615.4 1456.4,608.3 1458.8,616.1 1462.2,609.2 1464.3,617.2 1468.0,610.6 1469.8,618.7 1473.7,612.5 1475.2,620.7 1479.4,614.8 1480.6,623.1 1484.9,617.5 1485.9,626.0 1490.4,620.7 1491.0,629.3 1495.7,624.4 1496.0,632.9 1500.9,628.4 1500.9,637.0 1505.9,632.9 1505.7,641.4 1510.8,637.7 1510.2,646.3 1515.5,643.0 1514.6,651.4 1520.0,648.6 1518.9,657.0 1524.3,654.5 1522.9,662.8 1528.4,660.8 1526.7,669.0 1532.3,667.4 1530.2,675.4 1535.9,674.3 1533.6,682.2 1539.3,681.5 1536.7,689.2 1542.4,689.0 1539.5,696.4 1545.2,696.7 1542.1,703.8 1547.8,704.6 1544.4,711.5 1550.0,712.7 1546.4,719.3 1552.0,720.9 1548.2,727.3 1553.7,729.3 1549.6,735.4 1555.1,737.9 1550.8,743.6 1556.2,746.5 1551.7,751.8 1557.0,755.2 1552.3,760.2 1557.4,764.0 1552.6,768.6" fill="#003c34" stroke="#021a18" stroke-width="0.5" stroke-linejoin="round" />
<polygon points="1560.0,773.0 1555.0,777.2 1559.8,781.8 1554.7,785.6 1559.4,790.5 1554.1,793.9 1558.6,799.2 1553.2,802.2 1557.5,807.9 1552.0,810.4 1556.1,816.4 1550.6,818.5 1554.4,824.8 1548.8,826.5 1552.4,833.1 1546.8,834.3 1550.2,841.2 1544.5,841.9 1547.6,849.1 1541.9,849.4 1544.8,856.8 1539.1,856.6 1541.7,864.2 1536.0,863.6 1538.3,871.4 1532.6,870.3 1534.7,878.3 1529.1,876.8 1530.8,884.9 1525.3,882.9 1526.7,891.2 1521.3,888.8 1522.4,897.2 1517.0,894.3 1517.9,902.8 1512.6,899.5 1513.2,908.0 1508.1,904.3 1508.3,912.9 1503.3,908.8 1503.3,917.3 1498.4,912.8 1498.1,921.4 1493.4,916.5 1492.8,925.0 1488.3,919.8 1487.3,928.2 1483.0,922.6 1481.8,931.0 1477.6,925.0 1476.1,933.3 1472.2,927.0 1470.4,935.1 1466.7,928.6 1464.6,936.5 1461.2,929.7 1458.8,937.5 1455.6,930.4 1452.9,937.9 1450.0,930.6 1447.1,937.9 1444.4,930.4 1441.2,937.5 1438.8,929.7 1435.4,936.5 1433.3,928.6 1429.6,935.1 1427.8,927.0 1423.9,933.3 1422.4,925.0 1418.2,931.0 1417.0,922.6 1412.7,928.2 1411.7,919.8 1407.2,925.0 1406.6,916.5 1401.9,921.4 1401.6,912.8 1396.7,917.3 1396.7,908.8 1391.7,912.9 1391.9,904.3 1386.8,908.0 1387.4,899.5 1382.1,902.8 1383.0,894.3 1377.6,897.2 1378.7,888.8 1373.3,891.2 1374.7,882.9 1369.2,884.9 1370.9,876.8 1365.3,878.3 1367.4,870.3 1361.7,871.4 1364.0,863.6 1358.3,864.2 1360.9,856.6 1355.2,856.8 1358.1,849.4 1352.4,849.1 1355.5,841.9 1349.8,841.2 1353.2,834.3 1347.6,833.1 1351.2,826.5 1345.6,824.8 1349.4,818.5 1343.9,816.4 1348.0,810.4 1342.5,807.9 1346.8,802.2 1341.4,799.2 1345.9,793.9 1340.6,790.5 1345.3,785.6 1340.2,781.8 1345.0,777.2 1340.0,773.0 1345.0,768.8 1340.2,764.2 1345.3,760.4 1340.6,755.5 1345.9,752.1 1341.4,746.8 1346.8,743.8 1342.5,738.1 1348.0,735.6 1343.9,729.6 1349.4,727.5 1345.6,721.2 1351.2,719.5 1347.6,712.9 1353.2,711.7 1349.8,704.8 1355.5,704.1 1352.4,696.9 1358.1,696.6 1355.2,689.2 1360.9,689.4 1358.3,681.8 1364.0,682.4 1361.7,674.6 1367.4,675.7 1365.3,667.7 1370.9,669.2 1369.2,661.1 1374.7,663.1 1373.3,654.8 1378.7,657.2 1377.6,648.8 1383.0,651.7 1382.1,643.2 1387.4,646.5 1386.8,638.0 1391.9,641.7 1391.7,633.1 1396.7,637.2 1396.7,628.7 1401.6,633.2 1401.9,624.6 1406.6,629.5 1407.2,621.0 1411.7,626.2 1412.7,617.8 1417.0,623.4 1418.2,615.0 1422.4,621.0 1423.9,612.7 1427.8,619.0 1429.6,610.9 1433.3,617.4 1435.4,609.5 1438.8,616.3 1441.2,608.5 1444.4,615.6 1447.1,608.1 1450.0,615.4 1452.9,608.1 1455.6,615.6 1458.8,608.5 1461.2,616.3 1464.6,609.5 1466.7,617.4 1470.4,610.9 1472.2,619.0 1476.1,612.7 1477.6,621.0 1481.8,615.0 1483.0,623.4 1487.3,617.8 1488.3,626.2 1492.8,621.0 1493.4,629.5 1498.1,624.6 1498.4,633.2 1503.3,628.7 1503.3,637.2 1508.3,633.1 1508.1,641.7 1513.2,638.0 1512.6,646.5 1517.9,643.2 1517.0,651.7 1522.4,648.8 1521.3,657.2 1526.7,654.8 1525.3,663.1 1530.8,661.1 1529.1,669.2 1534.7,667.7 1532.6,675.7 1538.3,674.6 1536.0,682.4 1541.7,681.8 1539.1,689.4 1544.8,689.2 1541.9,696.6 1547.6,696.9 1544.5,704.1 1550.2,704.8 1546.8,711.7 1552.4,712.9 1548.8,719.5 1554.4,721.2 1550.6,727.5 1556.1,729.6 1552.0,735.6 1557.5,738.1 1553.2,743.8 1558.6,746.8 1554.1,752.1 1559.4,755.5 1554.7,760.4 1559.8,764.2 1555.0,768.8" fill="#004e44" stroke="#001a16" stroke-width="0.8" stroke-linejoin="round" />
<clipPath id="h1482"><ellipse cx="1482.4" cy="671.9" rx="20" ry="30"/></clipPath>
<ellipse cx="1482.4" cy="671.9" rx="20" ry="30" fill="url(#gHole)" />
<ellipse cx="1468.4" cy="668.9" rx="20" ry="30" fill="#ffffff" clip-path="url(#h1482)"/>
<ellipse cx="1482.4" cy="671.9" rx="20" ry="30" fill="none" stroke="#021a18" stroke-width="0.9" />
<clipPath id="h1393"><ellipse cx="1393.5" cy="701.5" rx="20" ry="30"/></clipPath>
<ellipse cx="1393.5" cy="701.5" rx="20" ry="30" fill="url(#gHole)" />
<ellipse cx="1379.5" cy="698.5" rx="20" ry="30" fill="#c00000" clip-path="url(#h1393)"/>
<ellipse cx="1393.5" cy="701.5" rx="20" ry="30" fill="none" stroke="#021a18" stroke-width="0.9" />
<clipPath id="h1522"><ellipse cx="1522.5" cy="783.4" rx="20" ry="30"/></clipPath>
<ellipse cx="1522.5" cy="783.4" rx="20" ry="30" fill="url(#gHole)" />
<ellipse cx="1508.5" cy="780.4" rx="20" ry="30" fill="#ffffff" clip-path="url(#h1522)"/>
<ellipse cx="1522.5" cy="783.4" rx="20" ry="30" fill="none" stroke="#021a18" stroke-width="0.9" />
<clipPath id="h1379"><ellipse cx="1379.6" cy="830.5" rx="20" ry="30"/></clipPath>
<ellipse cx="1379.6" cy="830.5" rx="20" ry="30" fill="url(#gHole)" />
<ellipse cx="1365.6" cy="827.5" rx="20" ry="30" fill="#c00000" clip-path="url(#h1379)"/>
<ellipse cx="1379.6" cy="830.5" rx="20" ry="30" fill="none" stroke="#021a18" stroke-width="0.9" />
<clipPath id="h1458"><ellipse cx="1458" cy="879.3" rx="20" ry="30"/></clipPath>
<ellipse cx="1458" cy="879.3" rx="20" ry="30" fill="url(#gHole)" />
<ellipse cx="1444" cy="876.3" rx="20" ry="30" fill="#ffffff" clip-path="url(#h1458)"/>
<ellipse cx="1458" cy="879.3" rx="20" ry="30" fill="none" stroke="#021a18" stroke-width="0.9" />
<ellipse cx="1456" cy="774.7" rx="44" ry="50.5" fill="url(#gHub)" stroke="#021a18" stroke-width="0.9" />
<ellipse cx="1470" cy="778" rx="32" ry="47" fill="#004e44" stroke="#001a16" stroke-width="0.9" />
<g fill="none" stroke="#c8302a" stroke-linecap="round"><path d="M23,4 C30,1.5 36,3 32,8 C30,10.5 27,11.5 25,12" stroke-width="2.2"/><path d="M17.5,27.5 L27,12.5 C35,10 44,12.5 43,13.2" stroke-width="2.2"/><path d="M18,27 C22,24 30,20 30,15" stroke-width="1.4"/><path d="M42.5,13 C36,13 32,15 34,19 C36,22 40,23 37,25.5 C34,27 30,26.5 28,25" stroke-width="2.4"/></g>
<text x="49" y="25.5" font-size="15" font-weight="bold" font-style="italic" fill="#c8302a" textLength="45.5" lengthAdjust="spacingAndGlyphs">SOLID</text>
<text x="95" y="25.5" font-size="15" font-style="italic" fill="#c8302a" textLength="54" lengthAdjust="spacingAndGlyphs">WORKS</text>
<path d="M522,23 L527,17.5 M525,13 L533,21 M527.5,11.5 L534.5,18.5 L531,19.5 L526.5,15 Z" stroke="#3a86c0" stroke-width="2" fill="#3a86c0" stroke-linejoin="round"/>
<path d="M562.5,17.5 L571,9 L579.5,17.5" fill="none" stroke="#2a6f9e" stroke-width="2.2"/><path d="M565,16 V25.5 H577 V16" fill="#fff" stroke="#333" stroke-width="1.3"/><rect x="569.5" y="19" width="3.5" height="6.5" fill="#fff" stroke="#333" stroke-width="1"/>
<path d="M589.5,9 H598 L602.5,13.5 V25.5 H589.5 Z" fill="#f4f4f4" stroke="#444" stroke-width="1.2"/>
<path d="M612.9,14.1 h5.2 l-2.6,3 z" fill="#444"/>
<path d="M625,13 H630 L632,15 H640 V25 H625 Z" fill="#ddd" stroke="#444" stroke-width="1.1"/><path d="M625,25 L629,18 H645 L641,25 Z" fill="#f2f2f2" stroke="#444" stroke-width="1.1"/><path d="M633,9 C638,9 640,11 640,15" fill="none" stroke="#3a9a2a" stroke-width="2.2"/><path d="M636.5,14 L640,19 L643.5,14 Z" fill="#3a9a2a"/>
<path d="M651.9,14.1 h5.2 l-2.6,3 z" fill="#444"/>
<rect x="665.5" y="8.5" width="17.5" height="17.5" rx="1.5" fill="#2a6f9e" stroke="#1d4d70" stroke-width="1"/><rect x="668.5" y="9.5" width="11.5" height="6.5" fill="#e8eef2"/><rect x="669.5" y="19.5" width="9.5" height="6" fill="#cfd8de"/>
<path d="M690.9,14.1 h5.2 l-2.6,3 z" fill="#444"/>
<rect x="707.5" y="8.5" width="11" height="6" fill="#fff" stroke="#444" stroke-width="1.1"/><rect x="704" y="14" width="18.5" height="8" rx="1.5" fill="#2a86c0" stroke="#1d4d70" stroke-width="1"/><rect x="707.5" y="20" width="11" height="5.5" fill="#fff" stroke="#444" stroke-width="1.1"/>
<path d="M729.9,14.1 h5.2 l-2.6,3 z" fill="#444"/>
<path d="M746,13 C752,6 762,10 760,18 C759,22 755,24 752,25" fill="none" stroke="#2a86c0" stroke-width="3"/><path d="M742.5,9 L744,18.5 L752,14 Z" fill="#2a86c0"/>
<path d="M768.9,14.1 h5.2 l-2.6,3 z" fill="#444"/>
<rect x="779.5" y="4.5" width="24.5" height="24.5" fill="#b4b4b4" stroke="#8c8c8c"/><rect x="804" y="4.5" width="14" height="24.5" fill="#f0f0f0" stroke="#8c8c8c"/><path d="M787,8.5 V24 L790.5,20.5 L793.5,26 L796,25 L793,19.5 L798,19.5 Z" fill="#fff" stroke="#222" stroke-width="1.1" stroke-linejoin="round"/>
<path d="M808.4,14.1 h5.2 l-2.6,3 z" fill="#444"/>
<rect x="826" y="8" width="10.5" height="17.5" rx="5" fill="#1a1a1a"/><circle cx="831.2" cy="12.8" r="2.6" fill="#e02020"/><circle cx="831.2" cy="20.8" r="2.6" fill="#30b030"/>
<rect x="849" y="8.5" width="16" height="17" fill="#fff" stroke="#2a5f7e" stroke-width="1.3"/><rect x="851" y="11" width="3" height="2.5" fill="#2a6f9e"/><rect x="851" y="15.5" width="3" height="2.5" fill="#2a6f9e"/><rect x="851" y="20" width="3" height="2.5" fill="#2a6f9e"/><path d="M856,12.2 H863 M856,16.7 H863 M856,21.2 H863" stroke="#333" stroke-width="1.2"/>
<circle cx="881.8" cy="16.5" r="6.5" fill="none" stroke="#555" stroke-width="3" stroke-dasharray="2.6 2.5"/><circle cx="881.8" cy="16.5" r="5.5" fill="none" stroke="#555" stroke-width="1.3"/><circle cx="881.8" cy="16.5" r="2.2" fill="none" stroke="#555" stroke-width="1.2"/>
<path d="M898.9,14.1 h5.2 l-2.6,3 z" fill="#444"/>
<rect x="809" y="0" width="60" height="1.2" fill="#2a6f9e"/>
<rect x="1521.5" y="2.5" width="250" height="28" fill="#f0f0f0" stroke="#3c3c3c" stroke-width="1.3"/>
<rect x="1527.5" y="7.5" width="18" height="17" fill="#1e1e1e"/><path d="M1530.5,11.5 l4,3.5 l-4,3.5" fill="none" stroke="#fff" stroke-width="1.3"/><path d="M1535,20.5 h5" stroke="#fff" stroke-width="1.2"/>
<text x="1554" y="21.6" font-size="13.2" style="white-space:pre" fill="#5a5a5a" textLength="108.5" lengthAdjust="spacingAndGlyphs" >Search Commands</text>
<circle cx="1744" cy="14.5" r="7" fill="none" stroke="#3a7ab0" stroke-width="1.6"/><path d="M1738.5,20 L1733,26" stroke="#3a7ab0" stroke-width="2.4"/>
<path d="M1761.9,14.1 h5.2 l-2.6,3 z" fill="#333"/>
<circle cx="1790" cy="11" r="4" fill="#eee" stroke="#777" stroke-width="1.1"/><path d="M1783.5,25 C1783.5,18 1796.5,18 1796.5,25 Z" fill="#eee" stroke="#777" stroke-width="1.1"/>
<text x="1809" y="24" font-size="18" font-weight="bold" fill="#222">?</text>
<path d="M1831.4,14.1 h5.2 l-2.6,3 z" fill="#333"/>
<rect x="1850" y="19" width="10" height="2.2" fill="#222"/>
<rect x="1877.5" y="12.5" width="8" height="7" fill="none" stroke="#222" stroke-width="1.3"/><path d="M1880,12 V9.8 H1888 V17 H1886" fill="none" stroke="#222" stroke-width="1.3"/>
<path d="M1901.5,11 L1911,20.5 M1911,11 L1901.5,20.5" stroke="#222" stroke-width="1.4"/>
<g opacity="0.45"><path d="M37,60 L43,55 L51,58 L51,66 L45,70 L37,66 Z" fill="#ddd" stroke="#888" stroke-width="1"/><path d="M43,70 L52,58 L54,60 L45,72 Z" fill="#ccc" stroke="#888" stroke-width="1"/></g>
<path d="M141.5,56 H146 L147.5,57.5 H154 V63 H141.5 Z" fill="#ddd" stroke="#444" stroke-width="1"/><path d="M141.5,63 L144,59 H157 L154,63 Z" fill="#f4f4f4" stroke="#444" stroke-width="1"/><path d="M142.5,56 L148,47" stroke="#2a9a2a" stroke-width="1.8"/><path d="M145.5,46 L149.5,45.5 L149,49.5 Z" fill="#2a9a2a"/><path d="M149,50 L153,47 H159 V53 L155,55.5 H149 Z" fill="#f0c020" stroke="#333" stroke-width="0.9"/><rect x="154" y="46" width="5" height="5" fill="#5ab4e0" stroke="#333" stroke-width="0.8"/>
<path d="M229,54.5 C226,57 228,60 230,62 L238,69 C240.5,71 244,69 242,66 L233,57.5 C232,56.5 233,55 234,56 L241,62.5" fill="none" stroke="#333" stroke-width="1.6" stroke-linecap="round"/><path d="M229,54.5 C231,52 234,52.5 236,54.5 L243,61" fill="none" stroke="#333" stroke-width="1.6" stroke-linecap="round"/>
<g opacity="0.4"><rect x="302" y="52.5" width="17.5" height="17" fill="#eee" stroke="#888" stroke-width="1.1"/><path d="M302,55.5 H319.5" stroke="#888" stroke-width="1"/><path d="M306,60 C306,57 314,57 314,61 L316,65 H308 Z" fill="#ccc" stroke="#888" stroke-width="0.9"/></g>
<path d="M445,45 h4 l2,2 v5 h-6 z" fill="#f0c020" stroke="#333" stroke-width="1"/>
<path d="M454,45 h4 l2,2 v5 h-6 z" fill="#fff" stroke="#333" stroke-width="1"/>
<path d="M445,54 h4 l2,2 v5 h-6 z" fill="#fff" stroke="#333" stroke-width="1"/>
<path d="M454,54 h4 l2,2 v5 h-6 z" fill="#fff" stroke="#333" stroke-width="1"/>
<rect x="565.5" y="53.5" width="17" height="16" rx="1" fill="#ccc" stroke="#444" stroke-width="1.1"/><rect x="568.5" y="60.5" width="10" height="6" fill="#e8e8e8" stroke="#444" stroke-width="0.9"/><path d="M576,51 L583,53 L575,62 L571,60 Z" fill="#f0a820" stroke="#444" stroke-width="0.8"/>
<path d="M660,49 L664,46 H676 V59 L672,62 H660 Z" fill="#e0e0e0" stroke="#444" stroke-width="1"/><path d="M666,47 H676 V59 H666 Z" fill="#f0c020" stroke="#444" stroke-width="1"/><path d="M664,55 H673 M670,51.5 L674,55 L670,58.5" fill="none" stroke="#222" stroke-width="1.6"/>
<path d="M769,62 L774,58 H781 V68 L777,72 H769 Z" fill="#f0c020" stroke="#333" stroke-width="1"/><path d="M777,58 L783,55 H787 V66 L783,70" fill="#fff" stroke="#333" stroke-width="1"/><path d="M772,56 C772,51 780,51 781,55" fill="none" stroke="#333" stroke-width="1.5"/><path d="M779,54 L782.5,57 L783,52.5 Z" fill="#333"/>
<path d="M852,47 L857,44.5 H868 V58 L863,61 H852 Z" fill="#c8d8e4" stroke="#333" stroke-width="1"/><path d="M857,48 H866 V51 H863 V59 H860 V51 H857 Z" fill="#5ab4e0" stroke="#333" stroke-width="0.8"/>
<circle cx="924" cy="46.5" r="2.5" fill="#5ab4e0" stroke="#2a5f7e" stroke-width="0.8"/><path d="M926,50 L938,47 V58 L926,61 Z" fill="#5ab4e0" stroke="#2a5f7e" stroke-width="1"/><path d="M932,44 V63" stroke="#2a5f7e" stroke-width="1" stroke-dasharray="2 1.5"/>
<circle cx="1016" cy="59" r="5" fill="none" stroke="#666" stroke-width="2.4" stroke-dasharray="2 1.6"/><circle cx="1007" cy="66" r="4.5" fill="none" stroke="#555" stroke-width="2.6" stroke-dasharray="2 1.6"/><circle cx="1006" cy="57" r="2.2" fill="#f0a020"/>
<rect x="1082.5" y="52.5" width="13" height="11" fill="#fff" stroke="#555" stroke-width="1"/><path d="M1082.5,55.5 h13 M1082.5,58.5 h13 M1087,52.5 v11" stroke="#2a6f9e" stroke-width="0.9"/><path d="M1089,64 L1093,61 H1099 V68 L1095,71 H1089 Z" fill="#f0c020" stroke="#333" stroke-width="0.9"/><rect x="1094" y="60" width="5" height="5" fill="#5ab4e0" stroke="#333" stroke-width="0.8"/>
<path d="M1168,56 L1172,53 H1178 V59 L1174,62 H1168 Z" fill="#f0c020" stroke="#333" stroke-width="1"/><rect x="1180" y="45" width="5" height="5" fill="#5ab4e0" stroke="#333" stroke-width="0.8"/><path d="M1177,54 L1182,51 V50" stroke="#333" stroke-width="1" stroke-dasharray="1.5 1.2" fill="none"/>
<path d="M1256,55 L1273,60 L1275,54 L1258,49 Z" fill="#f0d040" stroke="#555" stroke-width="0.9"/><path d="M1258,60 L1272,68" stroke="#2a86c0" stroke-width="2"/><path d="M1269,64 L1274,69.5 L1267,69 Z" fill="#2a86c0"/>
<path d="M1330,55 L1335,52 H1344 V66 L1339,69 H1330 Z" fill="#f0c020" stroke="#333" stroke-width="1"/><path d="M1335,52 H1344 V58 H1335 Z" fill="#5ab4e0" stroke="#333" stroke-width="0.8"/><path d="M1326,70 L1330.5,61 L1335,70 Z" fill="#f0c020" stroke="#333" stroke-width="0.9"/>
<rect x="1398.5" y="55.5" width="17" height="12" rx="1.5" fill="#e8e8e8" stroke="#333" stroke-width="1.2"/><rect x="1402" y="53" width="5" height="3" fill="#333"/><circle cx="1407" cy="61.5" r="3.8" fill="#fff" stroke="#333" stroke-width="1.4"/>
<path d="M1486,58 L1492,54 H1501 V64 L1495,68 H1486 Z" fill="#f0c020" stroke="#333" stroke-width="1"/><path d="M1490,54 L1494,51 H1501 V58 L1497,61 H1490 Z" fill="#5ab4e0" stroke="#333" stroke-width="0.9"/>
<circle cx="931.4" cy="132.3" r="6" fill="#eef3f6" stroke="#888" stroke-width="1.6"/><path d="M927,136.8 L921.5,142.3" stroke="#4a8ab0" stroke-width="2.8" stroke-linecap="round"/><path d="M931.4,128 l-1.6,1.8 h3.2z M931.4,136.6 l-1.6,-1.8 h3.2z M927.1,132.3 l1.8,-1.6 v3.2z M935.7,132.3 l-1.8,-1.6 v3.2z" fill="#555"/>
<rect x="951.6" y="126.2" width="12.2" height="12.2" fill="none" stroke="#555" stroke-width="1.1" stroke-dasharray="2 1.6"/><circle cx="955.3" cy="134.2" r="5.8" fill="#e4eaee" stroke="#888" stroke-width="1.6"/><path d="M951,138.5 L946.5,143" stroke="#4a8ab0" stroke-width="2.8" stroke-linecap="round"/>
<path d="M973,136 L986,126.5 L990,130 L977,142 Z" fill="#e8e8e8" stroke="#888" stroke-width="1.1"/><ellipse cx="975" cy="139" rx="2.5" ry="3.5" transform="rotate(-40 975 139)" fill="#ddd" stroke="#888"/><path d="M990,139.3 H983 M985.5,136.3 L982,139.3 L985.5,142.3" fill="none" stroke="#4a8ab0" stroke-width="2.2"/>
<path d="M998.8,131 C998.8,126 1015.5,126 1015.5,131 V141 C1015.5,144 998.8,144 998.8,141 Z" fill="#5a9ac0" stroke="#333" stroke-width="1.1"/><path d="M1004,131 V143 M1010,131 V143" stroke="#333" stroke-width="1"/><rect x="1004.5" y="130" width="5" height="13" fill="#cfd6d8"/><path d="M1000,135 l3,-3 M1000,139 l3,-3 M1011,135 l3,-3 M1011,139 l3,-3" stroke="#cde" stroke-width="0.9"/>
<path d="M1026,129 L1031,125.5 L1030,131 L1035,128 Z" fill="#f0b020"/><path d="M1024.5,140 L1035,128.5 L1039,132 L1028.5,143.5 Z" fill="#eaeaea" stroke="#888" stroke-width="1"/><text x="1032" y="144" font-size="10" fill="#4a7aa0" font-family="Liberation Serif">A</text>
<path d="M1050.5,131 L1056,125.8 H1067.5 V138 L1062,143.3 H1050.5 Z" fill="#fff" stroke="#444" stroke-width="1.1"/><rect x="1050.5" y="131" width="11.5" height="12.3" fill="#8cc0e0" stroke="#444" stroke-width="1.1"/><path d="M1062,131 L1067.5,125.8" stroke="#444" stroke-width="1"/>
<path d="M1076.0,133.6 h5.2 l-2.6,3 z" fill="#999"/>
<path d="M1091.5,129.5 L1097,125.8 H1107.5 V139.5 L1102,143.2 H1091.5 Z" fill="#eaf2f6" stroke="#555" stroke-width="1"/><rect x="1091.5" y="129.5" width="10.5" height="13.7" fill="#78b8d8" stroke="#555" stroke-width="1"/><rect x="1096" y="130" width="6" height="13" fill="#f4f8fa"/>
<path d="M1116.1000000000001,133.4 h5.2 l-2.6,3 z" fill="#999"/>
<path d="M1130.8,135.5 C1135,128 1144,128 1148.2,135.5 C1144,142 1135,142 1130.8,135.5 Z" fill="#f0f0f0" stroke="#888" stroke-width="1.1"/><circle cx="1139.5" cy="135.3" r="4" fill="#777"/><path d="M1139.5,128 V143" stroke="#555" stroke-width="1.2"/>
<path d="M1156.2,133.4 h5.2 l-2.6,3 z" fill="#999"/>
<circle cx="1177.5" cy="132.7" r="7.5" fill="#30a040"/><path d="M1177.5,132.7 L1177.5,125.19999999999999 A7.5,7.5 0 0 1 1185.0,132.7 Z" fill="#d04040"/><path d="M1177.5,132.7 L1170.0,132.7 A7.5,7.5 0 0 1 1177.5,125.19999999999999 Z" fill="#4a80d0"/><path d="M1177.5,132.7 L1185.0,132.7 A7.5,7.5 0 0 1 1177.5,140.2 Z" fill="#e0c030"/>
<path d="M1176.5,143.5 L1178,139 L1185.5,131.5 L1188,134 L1180.5,141.5 Z" fill="#f0e080" stroke="#333" stroke-width="0.9"/>
<circle cx="1204.5" cy="132.5" r="7.5" fill="#30a040"/><path d="M1204.5,132.5 L1204.5,125.0 A7.5,7.5 0 0 1 1212.0,132.5 Z" fill="#d04040"/><path d="M1204.5,132.5 L1197.0,132.5 A7.5,7.5 0 0 1 1204.5,125.0 Z" fill="#4a80d0"/><path d="M1204.5,132.5 L1212.0,132.5 A7.5,7.5 0 0 1 1204.5,140.0 Z" fill="#e0c030"/>
<rect x="1195.5" y="137" width="18.5" height="7.5" fill="#222"/><path d="M1197,141 h2.5 v3 h-2.5z M1202.5,141 h2.5 v3 h-2.5z M1208,141 h2.5 v3 h-2.5z M1199.5,138 h2.5 v3 h-2.5z M1205,138 h2.5 v3 h-2.5z" fill="#fff"/>
<path d="M1222.0,133.4 h5.2 l-2.6,3 z" fill="#999"/>
<rect x="1236.5" y="127.5" width="17" height="11.5" fill="#e6e6e6" stroke="#555" stroke-width="1.3"/><path d="M1245,139 V142 M1241.5,142.5 H1248.5" stroke="#444" stroke-width="1.5"/>
<path d="M1262.1000000000001,133.4 h5.2 l-2.6,3 z" fill="#999"/>
<rect x="1790.5" y="128.5" width="11" height="12" fill="none" stroke="#aaa" stroke-width="1.1"/><path d="M1794,134.5 l3,-2.5 v5z" fill="#999"/>
<rect x="1816.5" y="128.5" width="11" height="12" fill="none" stroke="#aaa" stroke-width="1.1"/><path d="M1824,134.5 l-3,-2.5 v5z" fill="#999"/>
<rect x="1843" y="138" width="10" height="2" fill="#aaa"/>
<rect x="1867.5" y="132.5" width="8" height="7" fill="none" stroke="#aaa" stroke-width="1.1"/><path d="M1870,132 V129.5 H1878.5 V136.5 H1876" fill="none" stroke="#aaa" stroke-width="1.1"/>
<path d="M1895,129.5 L1905,139.5 M1905,129.5 L1895,139.5" stroke="#aaa" stroke-width="1.3"/>
<rect x="1888.5" y="203.5" width="32" height="209" fill="#d4d4d4" stroke="#a8a8a8" stroke-width="1" />
<line x1="1888.5" y1="233.5" x2="1920" y2="233.5" stroke="#a8a8a8" stroke-width="1" />
<line x1="1888.5" y1="263.5" x2="1920" y2="263.5" stroke="#a8a8a8" stroke-width="1" />
<line x1="1888.5" y1="293.5" x2="1920" y2="293.5" stroke="#a8a8a8" stroke-width="1" />
<line x1="1888.5" y1="323.5" x2="1920" y2="323.5" stroke="#a8a8a8" stroke-width="1" />
<line x1="1888.5" y1="353.5" x2="1920" y2="353.5" stroke="#a8a8a8" stroke-width="1" />
<line x1="1888.5" y1="383.5" x2="1920" y2="383.5" stroke="#a8a8a8" stroke-width="1" />
<rect x="1889" y="324" width="31" height="29.5" fill="#f4f4f4" />
<path d="M1896,217.5 L1904,210.5 L1912,217.5" fill="none" stroke="#2a6f9e" stroke-width="2"/><path d="M1898,215.5 V225.5 H1910 V215.5" fill="#fff" stroke="#333" stroke-width="1.2"/><rect x="1902.5" y="219.5" width="3" height="6" fill="#fff" stroke="#333" stroke-width="0.9"/>
<path d="M1897,243.5 L1900,240.5 L1903,243.5 V256.5 H1897 Z M1901,243.5 L1904,240.5 L1907,243.5 V256.5 H1901 Z M1905,243.5 L1908,240.5 L1911,243.5 V255.5 L1907,256.5 Z" fill="#f4f4f4" stroke="#333" stroke-width="1.1"/>
<path d="M1895.5,272.5 H1901 L1903,274.5 H1910 V285.5 H1895.5 Z" fill="#ddd" stroke="#333" stroke-width="1.1"/><path d="M1895.5,285.5 L1899,277.5 H1913 L1910,285.5 Z" fill="#f6f6f6" stroke="#333" stroke-width="1.1"/>
<rect x="1895.5" y="300.5" width="17" height="15.5" fill="#fff4c0" stroke="#333" stroke-width="1.1"/><path d="M1898,304.5 h6 v3 h-2 v3 h3 v3 h-8 v-3 h3 v-3 h-2z" fill="#f0b020" stroke="#444" stroke-width="0.7"/><rect x="1906" y="302.5" width="5" height="3" fill="#f0b020" stroke="#444" stroke-width="0.7"/><rect x="1907" y="308.5" width="4" height="6" fill="#888" stroke="#444" stroke-width="0.7"/>
<circle cx="1903.5" cy="338.5" r="7.5" fill="#30a040"/><path d="M1903.5,338.5 L1903.5,331.0 A7.5,7.5 0 0 1 1911.0,338.5 Z" fill="#d04040"/><path d="M1903.5,338.5 L1896.0,338.5 A7.5,7.5 0 0 1 1903.5,331.0 Z" fill="#4a80d0"/><path d="M1903.5,338.5 L1911.0,338.5 A7.5,7.5 0 0 1 1903.5,346.0 Z" fill="#e0c030"/>
<rect x="1895.5" y="360.5" width="17" height="16" fill="#fff" stroke="#2a5f7e" stroke-width="1.2"/><rect x="1895.5" y="360.5" width="17" height="3" fill="#5ab4e0"/><rect x="1898" y="365.5" width="3" height="2" fill="#2a6f9e"/><rect x="1898" y="369.5" width="3" height="2" fill="#2a6f9e"/><rect x="1898" y="373.5" width="3" height="2" fill="#2a6f9e"/><path d="M1903,366.5 h7 M1903,370.5 h7 M1903,374.5 h7" stroke="#333" stroke-width="1"/>
<path d="M1895.5,391.5 H1906 V399.5 H1900 L1897,402.5 V399.5 H1895.5 Z" fill="#5ab4e0" stroke="#2a5f7e" stroke-width="1"/><path d="M1902,395.5 H1912 V403.5 H1910 V406.5 L1907,403.5 H1902 Z" fill="#f4f4f4" stroke="#444" stroke-width="1"/>
<g transform="translate(14.2,181) scale(1.0)"><path d="M0.8,8 L6,5.5 V3 L10,0.8 L15.2,3.3 V9.2 L13.5,10.1 L16.5,11.6 V14.8 L11,17.4 L0.8,12.6 Z" fill="#f5c518" stroke="#3a3a3a" stroke-width="1.2" stroke-linejoin="round"/><path d="M0.8,8 L11,12.8 V17.4 M11,12.8 L16.5,10.4 M6,5.5 L10.5,7.6 V10.8 M10.5,7.6 L15.2,5.3 M6,3 L10.5,5.2 L15.2,3.3" fill="none" stroke="#3a3a3a" stroke-width="0.9"/></g><g transform="translate(14.2,181) scale(1.0)"><path d="M8,4 L12,2 L16.5,4 V10 L12.5,12 L8,10 Z" fill="#6cc0e8" stroke="#2a4a6a" stroke-width="1"/><path d="M8,4 L12.5,6 L16.5,4 M12.5,6 V12" fill="none" stroke="#2a4a6a" stroke-width="0.9"/></g>
<rect x="53.5" y="181.5" width="17" height="17" rx="1.5" fill="#fff" stroke="#1d5a80" stroke-width="1.3"/><rect x="53.5" y="181.5" width="17" height="3.2" fill="#5ab4e0" stroke="#1d5a80" stroke-width="1"/><rect x="56" y="187" width="3" height="2" fill="#1d5a80"/><rect x="56" y="190.8" width="3" height="2" fill="#1d5a80"/><rect x="56" y="194.6" width="3" height="2" fill="#1d5a80"/><path d="M61,188 h7 M61,191.8 h7 M61,195.6 h7" stroke="#333" stroke-width="1.1"/>
<path d="M96,181 V199" stroke="#333" stroke-width="1.3"/><path d="M96,184 H100 M96,196 H100" stroke="#333" stroke-width="1.2"/><rect x="99.5" y="181.5" width="6" height="5" fill="#fff" stroke="#333" stroke-width="1.1"/><rect x="102.5" y="187.5" width="6" height="5" fill="#fff" stroke="#333" stroke-width="1.1"/><rect x="99.5" y="193.5" width="6" height="5" fill="#fff" stroke="#333" stroke-width="1.1"/>
<circle cx="142" cy="190" r="6.5" fill="none" stroke="#222" stroke-width="1.8"/><path d="M142,181.5 V198.5 M133.5,190 H150.5" stroke="#222" stroke-width="1.8"/>
<circle cx="182" cy="189" r="8.5" fill="#30a040"/><path d="M182,189 L182,180.5 A8.5,8.5 0 0 1 190.5,189 Z" fill="#d04040"/><path d="M182,189 L173.5,189 A8.5,8.5 0 0 1 182,180.5 Z" fill="#4a80d0"/><path d="M182,189 L190.5,189 A8.5,8.5 0 0 1 182,197.5 Z" fill="#e0c030"/>
<path d="M182,189 L188,183 A8.5,8.5 0 0 1 190.5,189 Z" fill="#222"/>
<path d="M213,183 H225 V199 H213 Z" fill="#cfe4f0" stroke="#2a5f7e" stroke-width="1"/><path d="M213,183 L225,195 M219,183 V199 M213,191 H225" stroke="#2a5f7e" stroke-width="0.9"/><rect x="213" y="192" width="4" height="7" fill="#aaa"/>
<ellipse cx="16.3" cy="212.8" rx="8" ry="2.2" fill="#5ab4e0" stroke="#333" stroke-width="1"/><path d="M8.3,213 L14.5,220.5 V228.3 L18,228.3 V220.5 L24.3,213" fill="#fafafa" stroke="#333" stroke-width="1.1"/>
<path d="M25.7,221.8 h5.2 l-2.6,3 z" fill="#333"/>
<g transform="translate(5,237.8) scale(1.05)"><path d="M0.8,8 L6,5.5 V3 L10,0.8 L15.2,3.3 V9.2 L13.5,10.1 L16.5,11.6 V14.8 L11,17.4 L0.8,12.6 Z" fill="#f5c518" stroke="#3a3a3a" stroke-width="1.2" stroke-linejoin="round"/><path d="M0.8,8 L11,12.8 V17.4 M11,12.8 L16.5,10.4 M6,5.5 L10.5,7.6 V10.8 M10.5,7.6 L15.2,5.3 M6,3 L10.5,5.2 L15.2,3.3" fill="none" stroke="#3a3a3a" stroke-width="0.9"/></g><g transform="translate(5,237.8) scale(1.05)"><path d="M8,4 L12,2 L16.5,4 V10 L12.5,12 L8,10 Z" fill="#6cc0e8" stroke="#2a4a6a" stroke-width="1"/><path d="M8,4 L12.5,6 L16.5,4 M12.5,6 V12" fill="none" stroke="#2a4a6a" stroke-width="0.9"/></g>
<path d="M27.5,265.5 H33.5 L35.0,267 H45.0 V280 H27.5 Z" fill="#ececec" stroke="#333" stroke-width="1.2"/><path d="M27.5,268.5 H45.0" stroke="#333" stroke-width="1"/><circle cx="38" cy="273.5" r="4" fill="#fff" stroke="#333" stroke-width="1"/><path d="M38,271 V273.5 H40" stroke="#333" stroke-width="0.9" fill="none"/><path d="M31.5,275 C31.5,271 33.5,270 35,270" fill="none" stroke="#2a86c0" stroke-width="1.6"/><path d="M30,274 L32,277.5 L34,274 Z" fill="#2a86c0"/>
<path d="M27.5,289.5 H33.5 L35.0,291 H45.0 V304 H27.5 Z" fill="#ececec" stroke="#333" stroke-width="1.2"/><path d="M27.5,292.5 H45.0" stroke="#333" stroke-width="1"/><circle cx="36.5" cy="297.5" r="4.5" fill="#fff" stroke="#333" stroke-width="1"/><path d="M36.5,297.5 L39.5,294.5" stroke="#d03030" stroke-width="1.6"/><path d="M36.5,297.5 A4.5,4.5 0 0 0 41,297.5 L36.5,297.5 Z" fill="#d03030"/>
<path d="M27.5,313.5 H33.5 L35.0,315 H45.0 V328 H27.5 Z" fill="#ececec" stroke="#333" stroke-width="1.2"/><path d="M27.5,316.5 H45.0" stroke="#333" stroke-width="1"/><text x="32.5" y="326" font-size="11" font-weight="bold" fill="#2a5f9e" font-family="Liberation Serif">A</text>
<path d="M30.5,337 L42.2,334 V348.5 L30.5,351.5 Z" fill="none" stroke="#444" stroke-width="1.1"/><path d="M36.3,333.5 V352" stroke="#444" stroke-width="1.1" stroke-dasharray="2.2 1.6"/>
<path d="M30.5,361 L42.2,358 V372.5 L30.5,375.5 Z" fill="none" stroke="#444" stroke-width="1.1"/><path d="M36.3,357.5 V376" stroke="#444" stroke-width="1.1" stroke-dasharray="2.2 1.6"/>
<path d="M30.5,385 L42.2,382 V396.5 L30.5,399.5 Z" fill="none" stroke="#444" stroke-width="1.1"/><path d="M36.3,381.5 V400" stroke="#444" stroke-width="1.1" stroke-dasharray="2.2 1.6"/>
<path d="M29.9,421 V408" stroke="#222" stroke-width="1.8"/><path d="M27,410 L29.9,405.5 L32.8,410 Z" fill="#222"/><path d="M29.4,420.7 H43" stroke="#222" stroke-width="1.8"/><path d="M42,417.8 L46,420.7 L42,423.6 Z" fill="#222"/><circle cx="29.9" cy="420.7" r="1.6" fill="#222"/>
<g transform="translate(28,430) scale(1.0)"><path d="M0.8,8 L6,5.5 V3 L10,0.8 L15.2,3.3 V9.2 L13.5,10.1 L16.5,11.6 V14.8 L11,17.4 L0.8,12.6 Z" fill="#f5c518" stroke="#3a3a3a" stroke-width="1.2" stroke-linejoin="round"/><path d="M0.8,8 L11,12.8 V17.4 M11,12.8 L16.5,10.4 M6,5.5 L10.5,7.6 V10.8 M10.5,7.6 L15.2,5.3 M6,3 L10.5,5.2 L15.2,3.3" fill="none" stroke="#3a3a3a" stroke-width="0.9"/></g>
<g transform="translate(28,454) scale(1.0)"><path d="M0.8,8 L6,5.5 V3 L10,0.8 L15.2,3.3 V9.2 L13.5,10.1 L16.5,11.6 V14.8 L11,17.4 L0.8,12.6 Z" fill="#f5c518" stroke="#3a3a3a" stroke-width="1.2" stroke-linejoin="round"/><path d="M0.8,8 L11,12.8 V17.4 M11,12.8 L16.5,10.4 M6,5.5 L10.5,7.6 V10.8 M10.5,7.6 L15.2,5.3 M6,3 L10.5,5.2 L15.2,3.3" fill="none" stroke="#3a3a3a" stroke-width="0.9"/></g>
<g transform="translate(28,478) scale(1.0)"><path d="M0.8,8 L6,5.5 V3 L10,0.8 L15.2,3.3 V9.2 L13.5,10.1 L16.5,11.6 V14.8 L11,17.4 L0.8,12.6 Z" fill="#f5c518" stroke="#3a3a3a" stroke-width="1.2" stroke-linejoin="round"/><path d="M0.8,8 L11,12.8 V17.4 M11,12.8 L16.5,10.4 M6,5.5 L10.5,7.6 V10.8 M10.5,7.6 L15.2,5.3 M6,3 L10.5,5.2 L15.2,3.3" fill="none" stroke="#3a3a3a" stroke-width="0.9"/></g>
<g transform="translate(28,502) scale(1.0)"><path d="M0.8,8 L6,5.5 V3 L10,0.8 L15.2,3.3 V9.2 L13.5,10.1 L16.5,11.6 V14.8 L11,17.4 L0.8,12.6 Z" fill="#f5c518" stroke="#3a3a3a" stroke-width="1.2" stroke-linejoin="round"/><path d="M0.8,8 L11,12.8 V17.4 M11,12.8 L16.5,10.4 M6,5.5 L10.5,7.6 V10.8 M10.5,7.6 L15.2,5.3 M6,3 L10.5,5.2 L15.2,3.3" fill="none" stroke="#3a3a3a" stroke-width="0.9"/></g>
<g transform="translate(28,526) scale(1.0)"><path d="M0.8,8 L6,5.5 V3 L10,0.8 L15.2,3.3 V9.2 L13.5,10.1 L16.5,11.6 V14.8 L11,17.4 L0.8,12.6 Z" fill="#f5c518" stroke="#3a3a3a" stroke-width="1.2" stroke-linejoin="round"/><path d="M0.8,8 L11,12.8 V17.4 M11,12.8 L16.5,10.4 M6,5.5 L10.5,7.6 V10.8 M10.5,7.6 L15.2,5.3 M6,3 L10.5,5.2 L15.2,3.3" fill="none" stroke="#3a3a3a" stroke-width="0.9"/></g>
<g transform="translate(28,550) scale(1.0)"><path d="M0.8,8 L6,5.5 V3 L10,0.8 L15.2,3.3 V9.2 L13.5,10.1 L16.5,11.6 V14.8 L11,17.4 L0.8,12.6 Z" fill="#f5c518" stroke="#3a3a3a" stroke-width="1.2" stroke-linejoin="round"/><path d="M0.8,8 L11,12.8 V17.4 M11,12.8 L16.5,10.4 M6,5.5 L10.5,7.6 V10.8 M10.5,7.6 L15.2,5.3 M6,3 L10.5,5.2 L15.2,3.3" fill="none" stroke="#3a3a3a" stroke-width="0.9"/></g>
<g transform="translate(28,574) scale(1.0)"><path d="M0.8,8 L6,5.5 V3 L10,0.8 L15.2,3.3 V9.2 L13.5,10.1 L16.5,11.6 V14.8 L11,17.4 L0.8,12.6 Z" fill="#f5c518" stroke="#3a3a3a" stroke-width="1.2" stroke-linejoin="round"/><path d="M0.8,8 L11,12.8 V17.4 M11,12.8 L16.5,10.4 M6,5.5 L10.5,7.6 V10.8 M10.5,7.6 L15.2,5.3 M6,3 L10.5,5.2 L15.2,3.3" fill="none" stroke="#3a3a3a" stroke-width="0.9"/></g>
<g transform="translate(28,598) scale(1.0)"><path d="M0.8,8 L6,5.5 V3 L10,0.8 L15.2,3.3 V9.2 L13.5,10.1 L16.5,11.6 V14.8 L11,17.4 L0.8,12.6 Z" fill="#f5c518" stroke="#3a3a3a" stroke-width="1.2" stroke-linejoin="round"/><path d="M0.8,8 L11,12.8 V17.4 M11,12.8 L16.5,10.4 M6,5.5 L10.5,7.6 V10.8 M10.5,7.6 L15.2,5.3 M6,3 L10.5,5.2 L15.2,3.3" fill="none" stroke="#3a3a3a" stroke-width="0.9"/></g>
<g transform="translate(28,622) scale(1.0)"><path d="M0.8,8 L6,5.5 V3 L10,0.8 L15.2,3.3 V9.2 L13.5,10.1 L16.5,11.6 V14.8 L11,17.4 L0.8,12.6 Z" fill="#f5c518" stroke="#3a3a3a" stroke-width="1.2" stroke-linejoin="round"/><path d="M0.8,8 L11,12.8 V17.4 M11,12.8 L16.5,10.4 M6,5.5 L10.5,7.6 V10.8 M10.5,7.6 L15.2,5.3 M6,3 L10.5,5.2 L15.2,3.3" fill="none" stroke="#3a3a3a" stroke-width="0.9"/></g>
<g transform="translate(28,646) scale(1.0)"><path d="M0.8,8 L6,5.5 V3 L10,0.8 L15.2,3.3 V9.2 L13.5,10.1 L16.5,11.6 V14.8 L11,17.4 L0.8,12.6 Z" fill="#f5c518" stroke="#3a3a3a" stroke-width="1.2" stroke-linejoin="round"/><path d="M0.8,8 L11,12.8 V17.4 M11,12.8 L16.5,10.4 M6,5.5 L10.5,7.6 V10.8 M10.5,7.6 L15.2,5.3 M6,3 L10.5,5.2 L15.2,3.3" fill="none" stroke="#3a3a3a" stroke-width="0.9"/></g>
<g transform="translate(28,670) scale(1.0)"><path d="M0.8,8 L6,5.5 V3 L10,0.8 L15.2,3.3 V9.2 L13.5,10.1 L16.5,11.6 V14.8 L11,17.4 L0.8,12.6 Z" fill="#f5c518" stroke="#3a3a3a" stroke-width="1.2" stroke-linejoin="round"/><path d="M0.8,8 L11,12.8 V17.4 M11,12.8 L16.5,10.4 M6,5.5 L10.5,7.6 V10.8 M10.5,7.6 L15.2,5.3 M6,3 L10.5,5.2 L15.2,3.3" fill="none" stroke="#3a3a3a" stroke-width="0.9"/></g>
<g transform="translate(28,694) scale(1.0)"><path d="M0.8,8 L6,5.5 V3 L10,0.8 L15.2,3.3 V9.2 L13.5,10.1 L16.5,11.6 V14.8 L11,17.4 L0.8,12.6 Z" fill="#f5c518" stroke="#3a3a3a" stroke-width="1.2" stroke-linejoin="round"/><path d="M0.8,8 L11,12.8 V17.4 M11,12.8 L16.5,10.4 M6,5.5 L10.5,7.6 V10.8 M10.5,7.6 L15.2,5.3 M6,3 L10.5,5.2 L15.2,3.3" fill="none" stroke="#3a3a3a" stroke-width="0.9"/></g>
<g transform="translate(28,718) scale(1.0)"><path d="M0.8,8 L6,5.5 V3 L10,0.8 L15.2,3.3 V9.2 L13.5,10.1 L16.5,11.6 V14.8 L11,17.4 L0.8,12.6 Z" fill="#f5c518" stroke="#3a3a3a" stroke-width="1.2" stroke-linejoin="round"/><path d="M0.8,8 L11,12.8 V17.4 M11,12.8 L16.5,10.4 M6,5.5 L10.5,7.6 V10.8 M10.5,7.6 L15.2,5.3 M6,3 L10.5,5.2 L15.2,3.3" fill="none" stroke="#3a3a3a" stroke-width="0.9"/></g>
<g transform="translate(28,742) scale(1.0)"><path d="M0.8,8 L6,5.5 V3 L10,0.8 L15.2,3.3 V9.2 L13.5,10.1 L16.5,11.6 V14.8 L11,17.4 L0.8,12.6 Z" fill="#f5c518" stroke="#3a3a3a" stroke-width="1.2" stroke-linejoin="round"/><path d="M0.8,8 L11,12.8 V17.4 M11,12.8 L16.5,10.4 M6,5.5 L10.5,7.6 V10.8 M10.5,7.6 L15.2,5.3 M6,3 L10.5,5.2 L15.2,3.3" fill="none" stroke="#3a3a3a" stroke-width="0.9"/></g>
<g transform="translate(28,766) scale(1.0)"><path d="M0.8,8 L6,5.5 V3 L10,0.8 L15.2,3.3 V9.2 L13.5,10.1 L16.5,11.6 V14.8 L11,17.4 L0.8,12.6 Z" fill="#f5c518" stroke="#3a3a3a" stroke-width="1.2" stroke-linejoin="round"/><path d="M0.8,8 L11,12.8 V17.4 M11,12.8 L16.5,10.4 M6,5.5 L10.5,7.6 V10.8 M10.5,7.6 L15.2,5.3 M6,3 L10.5,5.2 L15.2,3.3" fill="none" stroke="#3a3a3a" stroke-width="0.9"/></g>
<g transform="translate(28,790) scale(1.0)"><path d="M0.8,8 L6,5.5 V3 L10,0.8 L15.2,3.3 V9.2 L13.5,10.1 L16.5,11.6 V14.8 L11,17.4 L0.8,12.6 Z" fill="#f5c518" stroke="#3a3a3a" stroke-width="1.2" stroke-linejoin="round"/><path d="M0.8,8 L11,12.8 V17.4 M11,12.8 L16.5,10.4 M6,5.5 L10.5,7.6 V10.8 M10.5,7.6 L15.2,5.3 M6,3 L10.5,5.2 L15.2,3.3" fill="none" stroke="#3a3a3a" stroke-width="0.9"/></g>
<g transform="translate(28,814) scale(1.0)"><path d="M0.8,8 L6,5.5 V3 L10,0.8 L15.2,3.3 V9.2 L13.5,10.1 L16.5,11.6 V14.8 L11,17.4 L0.8,12.6 Z" fill="#f5c518" stroke="#3a3a3a" stroke-width="1.2" stroke-linejoin="round"/><path d="M0.8,8 L11,12.8 V17.4 M11,12.8 L16.5,10.4 M6,5.5 L10.5,7.6 V10.8 M10.5,7.6 L15.2,5.3 M6,3 L10.5,5.2 L15.2,3.3" fill="none" stroke="#3a3a3a" stroke-width="0.9"/></g>
<g transform="translate(28,838) scale(1.0)"><path d="M0.8,8 L6,5.5 V3 L10,0.8 L15.2,3.3 V9.2 L13.5,10.1 L16.5,11.6 V14.8 L11,17.4 L0.8,12.6 Z" fill="#f5c518" stroke="#3a3a3a" stroke-width="1.2" stroke-linejoin="round"/><path d="M0.8,8 L11,12.8 V17.4 M11,12.8 L16.5,10.4 M6,5.5 L10.5,7.6 V10.8 M10.5,7.6 L15.2,5.3 M6,3 L10.5,5.2 L15.2,3.3" fill="none" stroke="#3a3a3a" stroke-width="0.9"/></g>
<path d="M30,880 V866 C30,862.5 35,862.5 35,866 V878 C35,880.5 32.5,880.5 32.5,878 V868" fill="none" stroke="#4a8aa8" stroke-width="1.3"/><path d="M37,880 V866 C37,862.5 42,862.5 42,866 V878 C42,880.5 39.5,880.5 39.5,878 V868" fill="none" stroke="#4a8aa8" stroke-width="1.3"/>
<path d="M272,531 H283.5 V577 H272" fill="#f7f7f7" stroke="#a8a8a8" stroke-width="1"/><circle cx="277" cy="553.5" r="2.3" fill="#ddd" stroke="#aaa" stroke-width="0.8"/>
<path d="M320.5,918 V893.5 H325.8 V918 Z" fill="#4aa84a" stroke="#1a4a1a" stroke-width="0.9"/><path d="M317,893.5 L323,883.2 L329,893.5 Z" fill="#2a8a2a" stroke="#1a4a1a" stroke-width="0.8"/>
<path d="M318.5,870 L321.5,875 L324.5,870 M321.5,875 V880.5" fill="none" stroke="#2a7a2a" stroke-width="0.9"/>
<path d="M325,913 L305,914 L303,912 L296.7,916 L303,920.3 L305,918 L325,917 Z" fill="#2a2aa0"/>
<path d="M325.5,916.5 L307,919 L304,917.4 L298,922.5 L304,927.5 L307,925 L325,921 Z" fill="#c82020"/>
<path d="M289.5,910.5 H295 L289.5,920 H295" fill="none" stroke="#3a2aa0" stroke-width="0.9"/><path d="M291,920.5 L297.5,928.5 M297.5,920.5 L291,928.5" stroke="#c04040" stroke-width="0.8"/>
<text x="361" y="476" font-family="Liberation Serif" font-size="27.5" font-weight="bold" font-style="italic" fill="#111" textLength="433" lengthAdjust="spacingAndGlyphs" stroke="#111" stroke-width="0.5">ENG. MOHAMMAD ALMAIS</text><text x="362.4" y="475.6" font-family="Liberation Serif" font-size="27.5" font-weight="bold" font-style="italic" fill="none" textLength="433" lengthAdjust="spacingAndGlyphs" stroke="#fff" stroke-width="0.7" opacity="0.85">ENG. MOHAMMAD ALMAIS</text>
<path d="M33,994 V1003 M41,994 L35,998.5 L41,1003 Z" fill="#7a80a0" stroke="#7a80a0" stroke-width="1.1"/><path d="M61,994 L55,998.5 L61,1003 Z" fill="#7a80a0"/><path d="M73,994 L79,998.5 L73,1003 Z" fill="#7a80a0"/><path d="M101,994 V1003 M93,994 L99,998.5 L93,1003 Z" fill="#7a80a0" stroke="#7a80a0" stroke-width="1.1"/>
<path d="M1901,1019 L1907,1014 L1916,1019 L1916,1023 L1910,1028 L1901,1023 Z" fill="#eee" stroke="#444" stroke-width="1.1"/><path d="M1901,1019 L1910,1024 L1916,1019 M1910,1024 V1028" fill="none" stroke="#444" stroke-width="0.9"/>
<g opacity="0.1"><path d="M874,937.5 A16,16 0 1 0 868,967.4 L884,966 L1046,966" fill="none" stroke="#000" stroke-width="10.5" stroke-linecap="round"/><path d="M884.2,912 V962" fill="none" stroke="#000" stroke-width="10.5" stroke-linecap="round"/><circle cx="921.4" cy="940.8" r="15.3" fill="none" stroke="#000" stroke-width="10.5" stroke-linecap="round"/><path d="M962.7,944 V962 M983,945 V962 M1000.6,941 V962 M1017.5,938 V962" fill="none" stroke="#000" stroke-width="10.5" stroke-linecap="round"/><circle cx="1053.4" cy="951.6" r="16" fill="none" stroke="#000" stroke-width="10.5" stroke-linecap="round"/><g fill="#000"><circle cx="913.3" cy="913" r="6.4"/><circle cx="930.2" cy="913" r="6.4"/><circle cx="953.9" cy="927.2" r="6.4"/><circle cx="970.1" cy="927.2" r="6.4"/></g><text x="845" y="1003.7" font-size="37.5" font-weight="bold" fill="#000" textLength="229.5" lengthAdjust="spacingAndGlyphs">mostaql.com</text></g>
</svg>
</body></html>
